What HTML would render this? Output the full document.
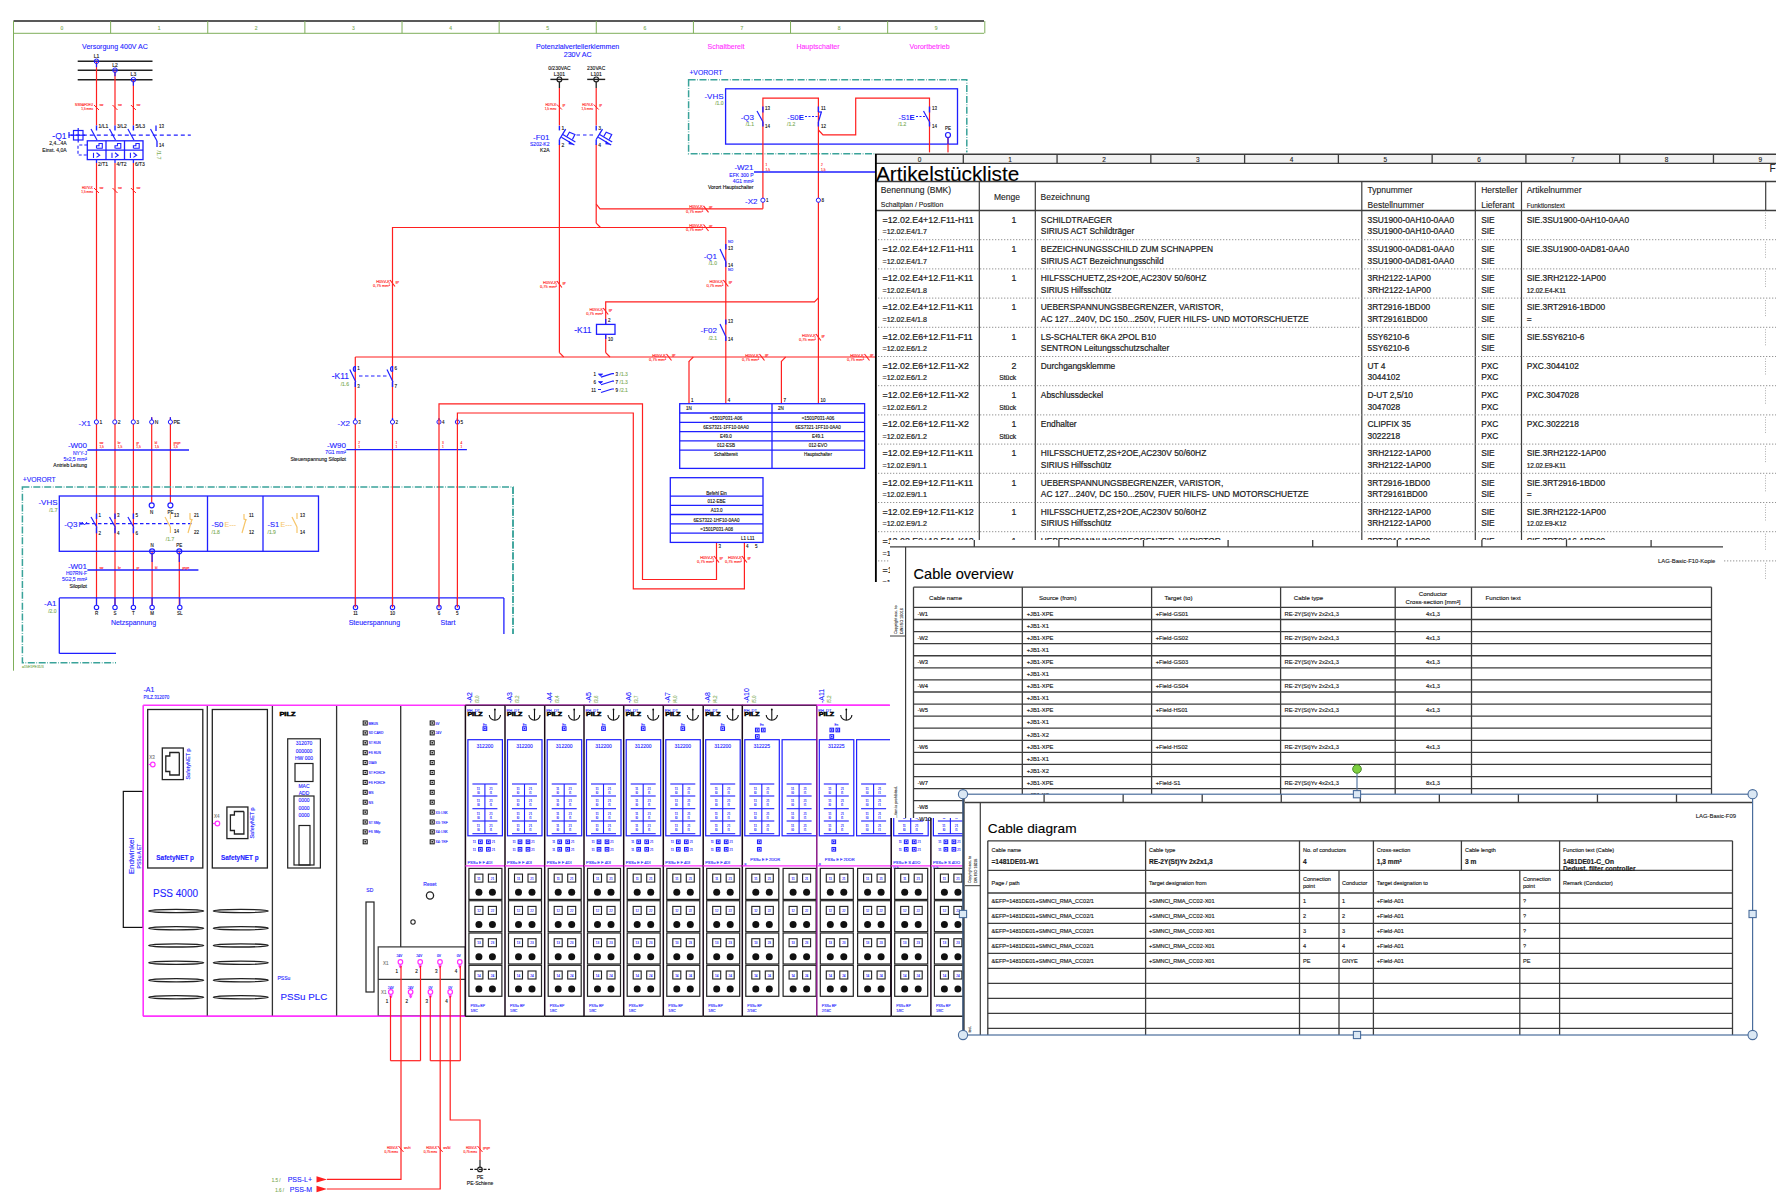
<!DOCTYPE html>
<html><head><meta charset="utf-8"><style>
html,body{margin:0;padding:0;background:#fff;width:1776px;height:1199px;overflow:hidden}
svg{display:block;font-family:"Liberation Sans",sans-serif}
</style></head><body>
<svg width="1776" height="1199" viewBox="0 0 1776 1199">
<rect width="1776" height="1199" fill="#fff"/>
<line x1="13.5" y1="21" x2="984" y2="21" stroke="#222" stroke-width="1.6"/>
<line x1="13.5" y1="33.3" x2="984" y2="33.3" stroke="#7fae5a" stroke-width="1"/>
<line x1="13.5" y1="21" x2="13.5" y2="670.7" stroke="#7fae5a" stroke-width="1"/>
<line x1="13.5" y1="21" x2="13.5" y2="33.3" stroke="#7fae5a" stroke-width="1"/>
<line x1="110.63" y1="21" x2="110.63" y2="33.3" stroke="#7fae5a" stroke-width="1"/>
<line x1="207.76" y1="21" x2="207.76" y2="33.3" stroke="#7fae5a" stroke-width="1"/>
<line x1="304.89" y1="21" x2="304.89" y2="33.3" stroke="#7fae5a" stroke-width="1"/>
<line x1="402.02" y1="21" x2="402.02" y2="33.3" stroke="#7fae5a" stroke-width="1"/>
<line x1="499.15" y1="21" x2="499.15" y2="33.3" stroke="#7fae5a" stroke-width="1"/>
<line x1="596.28" y1="21" x2="596.28" y2="33.3" stroke="#7fae5a" stroke-width="1"/>
<line x1="693.41" y1="21" x2="693.41" y2="33.3" stroke="#7fae5a" stroke-width="1"/>
<line x1="790.54" y1="21" x2="790.54" y2="33.3" stroke="#7fae5a" stroke-width="1"/>
<line x1="887.67" y1="21" x2="887.67" y2="33.3" stroke="#7fae5a" stroke-width="1"/>
<line x1="984.8" y1="21" x2="984.8" y2="33.3" stroke="#7fae5a" stroke-width="1"/>
<text x="62" y="30" font-size="5" fill="#7fae5a" text-anchor="middle" stroke="#7fae5a" stroke-width="0.12">0</text>
<text x="159.13" y="30" font-size="5" fill="#7fae5a" text-anchor="middle" stroke="#7fae5a" stroke-width="0.12">1</text>
<text x="256.26" y="30" font-size="5" fill="#7fae5a" text-anchor="middle" stroke="#7fae5a" stroke-width="0.12">2</text>
<text x="353.39" y="30" font-size="5" fill="#7fae5a" text-anchor="middle" stroke="#7fae5a" stroke-width="0.12">3</text>
<text x="450.52" y="30" font-size="5" fill="#7fae5a" text-anchor="middle" stroke="#7fae5a" stroke-width="0.12">4</text>
<text x="547.65" y="30" font-size="5" fill="#7fae5a" text-anchor="middle" stroke="#7fae5a" stroke-width="0.12">5</text>
<text x="644.78" y="30" font-size="5" fill="#7fae5a" text-anchor="middle" stroke="#7fae5a" stroke-width="0.12">6</text>
<text x="741.91" y="30" font-size="5" fill="#7fae5a" text-anchor="middle" stroke="#7fae5a" stroke-width="0.12">7</text>
<text x="839.04" y="30" font-size="5" fill="#7fae5a" text-anchor="middle" stroke="#7fae5a" stroke-width="0.12">8</text>
<text x="936.17" y="30" font-size="5" fill="#7fae5a" text-anchor="middle" stroke="#7fae5a" stroke-width="0.12">9</text>
<text x="22" y="667.5" font-size="3.5" fill="#7fae5a" stroke="#7fae5a" stroke-width="0.12">=15E1PE31/3</text>
<text x="115" y="49" font-size="7.05" fill="#1f1fff" text-anchor="middle" stroke="#1f1fff" stroke-width="0.12">Versorgung 400V AC</text>
<text x="577.7" y="49" font-size="7.1" fill="#1f1fff" text-anchor="middle" stroke="#1f1fff" stroke-width="0.12">Potenzialverteilerklemmen</text>
<text x="577.7" y="57" font-size="7.1" fill="#1f1fff" text-anchor="middle" stroke="#1f1fff" stroke-width="0.12">230V AC</text>
<text x="726" y="49" font-size="7" fill="#ff33ff" text-anchor="middle" stroke="#ff33ff" stroke-width="0.12">Schaltbereit</text>
<text x="818" y="49" font-size="7" fill="#ff33ff" text-anchor="middle" stroke="#ff33ff" stroke-width="0.12">Hauptschalter</text>
<text x="929.5" y="49" font-size="7" fill="#ff33ff" text-anchor="middle" stroke="#ff33ff" stroke-width="0.12">Vorortbetrieb</text>
<line x1="77.7" y1="61.3" x2="152.5" y2="61.3" stroke="#222" stroke-width="1.6"/>
<line x1="77.7" y1="70.2" x2="152.5" y2="70.2" stroke="#222" stroke-width="1.6"/>
<line x1="77.7" y1="79.7" x2="152.5" y2="79.7" stroke="#222" stroke-width="1.6"/>
<text x="96.5" y="57.8" font-size="5" fill="#111" text-anchor="middle" stroke="#111" stroke-width="0.12">L1</text>
<text x="115" y="66.7" font-size="5" fill="#111" text-anchor="middle" stroke="#111" stroke-width="0.12">L2</text>
<text x="133.4" y="76.2" font-size="5" fill="#111" text-anchor="middle" stroke="#111" stroke-width="0.12">L3</text>
<line x1="96.5" y1="61.3" x2="96.5" y2="125.5" stroke="#ff1f1f" stroke-width="1.2"/>
<line x1="96.5" y1="163" x2="96.5" y2="607.5" stroke="#ff1f1f" stroke-width="1.2"/>
<line x1="96.5" y1="63.3" x2="96.5" y2="67.3" stroke="#1f1fff" stroke-width="1.2"/>
<circle cx="96.5" cy="61.3" r="2.3" stroke="#1f1fff" stroke-width="1" fill="none"/>
<line x1="94.2" y1="61.3" x2="98.8" y2="61.3" stroke="#1f1fff" stroke-width="1"/>
<line x1="115" y1="70.2" x2="115" y2="125.5" stroke="#ff1f1f" stroke-width="1.2"/>
<line x1="115" y1="163" x2="115" y2="607.5" stroke="#ff1f1f" stroke-width="1.2"/>
<line x1="115" y1="72.2" x2="115" y2="76.2" stroke="#1f1fff" stroke-width="1.2"/>
<circle cx="115" cy="70.2" r="2.3" stroke="#1f1fff" stroke-width="1" fill="none"/>
<line x1="112.7" y1="70.2" x2="117.3" y2="70.2" stroke="#1f1fff" stroke-width="1"/>
<line x1="133.4" y1="79.7" x2="133.4" y2="125.5" stroke="#ff1f1f" stroke-width="1.2"/>
<line x1="133.4" y1="163" x2="133.4" y2="607.5" stroke="#ff1f1f" stroke-width="1.2"/>
<line x1="133.4" y1="81.7" x2="133.4" y2="85.7" stroke="#1f1fff" stroke-width="1.2"/>
<circle cx="133.4" cy="79.7" r="2.3" stroke="#1f1fff" stroke-width="1" fill="none"/>
<line x1="131.1" y1="79.7" x2="135.7" y2="79.7" stroke="#1f1fff" stroke-width="1"/>
<line x1="94" y1="105" x2="99" y2="110" stroke="#ff1f1f" stroke-width="1"/>
<text x="99.5" y="106" font-size="3.2" fill="#ff1f1f" stroke="#ff1f1f" stroke-width="0.12">sw</text>
<line x1="112.5" y1="105" x2="117.5" y2="110" stroke="#ff1f1f" stroke-width="1"/>
<text x="118" y="106" font-size="3.2" fill="#ff1f1f" stroke="#ff1f1f" stroke-width="0.12">sw</text>
<line x1="130.9" y1="105" x2="135.9" y2="110" stroke="#ff1f1f" stroke-width="1"/>
<text x="136.4" y="106" font-size="3.2" fill="#ff1f1f" stroke="#ff1f1f" stroke-width="0.12">sw</text>
<text x="93" y="105.5" font-size="3.2" fill="#ff1f1f" text-anchor="end" stroke="#ff1f1f" stroke-width="0.12">NSGAFOEU</text>
<text x="93" y="109.8" font-size="3.2" fill="#ff1f1f" text-anchor="end" stroke="#ff1f1f" stroke-width="0.12">1,5 mm²</text>
<line x1="96.5" y1="125.5" x2="96.5" y2="130.5" stroke="#1f1fff" stroke-width="1.4"/>
<line x1="91" y1="129" x2="97" y2="140" stroke="#1f1fff" stroke-width="1.2"/>
<text x="98.5" y="128" font-size="5" fill="#111" stroke="#111" stroke-width="0.12">1/L1</text>
<line x1="115" y1="125.5" x2="115" y2="130.5" stroke="#1f1fff" stroke-width="1.4"/>
<line x1="109.5" y1="129" x2="115.5" y2="140" stroke="#1f1fff" stroke-width="1.2"/>
<text x="117" y="128" font-size="5" fill="#111" stroke="#111" stroke-width="0.12">3/L2</text>
<line x1="133.4" y1="125.5" x2="133.4" y2="130.5" stroke="#1f1fff" stroke-width="1.4"/>
<line x1="127.9" y1="129" x2="133.9" y2="140" stroke="#1f1fff" stroke-width="1.2"/>
<text x="135.4" y="128" font-size="5" fill="#111" stroke="#111" stroke-width="0.12">5/L3</text>
<line x1="68.8" y1="135.2" x2="190.8" y2="135.2" stroke="#1f1fff" stroke-width="1.2" stroke-dasharray="4,3"/>
<rect x="73.5" y="130.5" width="9.5" height="9.5" stroke="#1f1fff" stroke-width="1.2" fill="none"/>
<line x1="78.2" y1="128" x2="78.2" y2="142.5" stroke="#1f1fff" stroke-width="1.2"/>
<line x1="71" y1="135.2" x2="85" y2="135.2" stroke="#1f1fff" stroke-width="1.2"/>
<line x1="69" y1="132" x2="69" y2="138" stroke="#1f1fff" stroke-width="1.2"/>
<text x="66.5" y="138.5" font-size="8.5" fill="#1f1fff" text-anchor="end" stroke="#1f1fff" stroke-width="0.12">-Q1</text>
<text x="66.5" y="145" font-size="5" fill="#111" text-anchor="end" stroke="#111" stroke-width="0.12">2,4...4A</text>
<text x="66.5" y="151.5" font-size="5" fill="#111" text-anchor="end" stroke="#111" stroke-width="0.12">Einst. 4,0A</text>
<rect x="87.3" y="140.8" width="55.7" height="18.8" stroke="#1f1fff" stroke-width="1.3" fill="none"/>
<line x1="87.3" y1="150.2" x2="143" y2="150.2" stroke="#1f1fff" stroke-width="1.3"/>
<line x1="106" y1="140.8" x2="106" y2="159.6" stroke="#1f1fff" stroke-width="1.3"/>
<line x1="124.5" y1="140.8" x2="124.5" y2="159.6" stroke="#1f1fff" stroke-width="1.3"/>
<polyline points="96.5,148.5 96.5,145.8 99,145.8 99,143.5 102.3,143.5 102.3,148.3 97,148.3" stroke="#1f1fff" stroke-width="1.1" fill="none"/>
<line x1="93.5" y1="152.8" x2="93.5" y2="158" stroke="#1f1fff" stroke-width="1.1"/>
<polyline points="96.5,152.8 99.7,155.2 96.5,157.4" stroke="#1f1fff" stroke-width="1.1" fill="none"/>
<polyline points="115,148.5 115,145.8 117.5,145.8 117.5,143.5 120.8,143.5 120.8,148.3 115.5,148.3" stroke="#1f1fff" stroke-width="1.1" fill="none"/>
<line x1="112" y1="152.8" x2="112" y2="158" stroke="#1f1fff" stroke-width="1.1"/>
<polyline points="115,152.8 118.2,155.2 115,157.4" stroke="#1f1fff" stroke-width="1.1" fill="none"/>
<polyline points="133.4,148.5 133.4,145.8 135.9,145.8 135.9,143.5 139.2,143.5 139.2,148.3 133.9,148.3" stroke="#1f1fff" stroke-width="1.1" fill="none"/>
<line x1="130.4" y1="152.8" x2="130.4" y2="158" stroke="#1f1fff" stroke-width="1.1"/>
<polyline points="133.4,152.8 136.6,155.2 133.4,157.4" stroke="#1f1fff" stroke-width="1.1" fill="none"/>
<polyline points="87.3,145 78,145 78,155 87.3,155" stroke="#1f1fff" stroke-width="1.1" fill="none" stroke-dasharray="3,2"/>
<line x1="156" y1="125.5" x2="156" y2="131" stroke="#1f1fff" stroke-width="1.3"/>
<line x1="150.5" y1="129" x2="157" y2="141" stroke="#1f1fff" stroke-width="1.2"/>
<line x1="157" y1="141" x2="157" y2="147" stroke="#1f1fff" stroke-width="1.3"/>
<text x="159" y="128" font-size="4.5" fill="#111" stroke="#111" stroke-width="0.12">13</text>
<text x="159" y="147" font-size="4.5" fill="#111" stroke="#111" stroke-width="0.12">14</text>
<text x="156.5" y="150.5" font-size="5.5" fill="#7fae5a" transform="rotate(90 156.5 150.5)" stroke="#7fae5a" stroke-width="0.12">/1.7</text>
<line x1="96.5" y1="159.6" x2="96.5" y2="163" stroke="#1f1fff" stroke-width="1.3"/>
<text x="98" y="166" font-size="5" fill="#111" stroke="#111" stroke-width="0.12">2/T1</text>
<line x1="115" y1="159.6" x2="115" y2="163" stroke="#1f1fff" stroke-width="1.3"/>
<text x="116.5" y="166" font-size="5" fill="#111" stroke="#111" stroke-width="0.12">4/T2</text>
<line x1="133.4" y1="159.6" x2="133.4" y2="163" stroke="#1f1fff" stroke-width="1.3"/>
<text x="134.9" y="166" font-size="5" fill="#111" stroke="#111" stroke-width="0.12">6/T3</text>
<line x1="94" y1="188" x2="99" y2="193" stroke="#ff1f1f" stroke-width="1"/>
<text x="99.5" y="189" font-size="3.2" fill="#ff1f1f" stroke="#ff1f1f" stroke-width="0.12">sw</text>
<line x1="112.5" y1="188" x2="117.5" y2="193" stroke="#ff1f1f" stroke-width="1"/>
<text x="118" y="189" font-size="3.2" fill="#ff1f1f" stroke="#ff1f1f" stroke-width="0.12">sw</text>
<line x1="130.9" y1="188" x2="135.9" y2="193" stroke="#ff1f1f" stroke-width="1"/>
<text x="136.4" y="189" font-size="3.2" fill="#ff1f1f" stroke="#ff1f1f" stroke-width="0.12">sw</text>
<text x="93" y="188.5" font-size="3.2" fill="#ff1f1f" text-anchor="end" stroke="#ff1f1f" stroke-width="0.12">H07V-K</text>
<text x="93" y="193" font-size="3.2" fill="#ff1f1f" text-anchor="end" stroke="#ff1f1f" stroke-width="0.12">1,5 mm²</text>
<text x="91" y="425.5" font-size="8" fill="#1f1fff" text-anchor="end" stroke="#1f1fff" stroke-width="0.12">-X1</text>
<line x1="151.7" y1="417.3" x2="151.7" y2="505.3" stroke="#ff1f1f" stroke-width="1.2"/>
<line x1="170.4" y1="417.3" x2="170.4" y2="505.3" stroke="#ff1f1f" stroke-width="1.2"/>
<line x1="151.7" y1="417.3" x2="151.7" y2="420" stroke="#1f1fff" stroke-width="1.2"/>
<line x1="170.4" y1="417.3" x2="170.4" y2="420" stroke="#1f1fff" stroke-width="1.2"/>
<circle cx="96.4" cy="422" r="2.1" stroke="#1f1fff" stroke-width="1" fill="#fff"/>
<text x="99.4" y="423.8" font-size="5" fill="#111" stroke="#111" stroke-width="0.12">1</text>
<circle cx="114.8" cy="422" r="2.1" stroke="#1f1fff" stroke-width="1" fill="#fff"/>
<text x="117.8" y="423.8" font-size="5" fill="#111" stroke="#111" stroke-width="0.12">2</text>
<circle cx="133.3" cy="422" r="2.1" stroke="#1f1fff" stroke-width="1" fill="#fff"/>
<text x="136.3" y="423.8" font-size="5" fill="#111" stroke="#111" stroke-width="0.12">3</text>
<circle cx="151.7" cy="422" r="2.1" stroke="#1f1fff" stroke-width="1" fill="#fff"/>
<text x="154.7" y="423.8" font-size="5" fill="#111" stroke="#111" stroke-width="0.12">N</text>
<circle cx="170.4" cy="422" r="2.1" stroke="#1f1fff" stroke-width="1" fill="#fff"/>
<text x="173.4" y="423.8" font-size="5" fill="#111" stroke="#111" stroke-width="0.12">PE</text>
<line x1="87.3" y1="450" x2="189" y2="450" stroke="#1f1fff" stroke-width="1.3"/>
<text x="87" y="448" font-size="8" fill="#1f1fff" text-anchor="end" stroke="#1f1fff" stroke-width="0.12">-W00</text>
<text x="87" y="455" font-size="5" fill="#1f1fff" text-anchor="end" stroke="#1f1fff" stroke-width="0.12">NYY-J</text>
<text x="87" y="461" font-size="5" fill="#1f1fff" text-anchor="end" stroke="#1f1fff" stroke-width="0.12">5x2,5 mm²</text>
<text x="87" y="467" font-size="5" fill="#111" text-anchor="end" stroke="#111" stroke-width="0.12">Antrieb Leitung</text>
<text x="99.4" y="444" font-size="3.2" fill="#ff1f1f" stroke="#ff1f1f" stroke-width="0.12">sw</text>
<text x="99.4" y="448" font-size="3.2" fill="#ff1f1f" stroke="#ff1f1f" stroke-width="0.12">1,5</text>
<text x="117.8" y="444" font-size="3.2" fill="#ff1f1f" stroke="#ff1f1f" stroke-width="0.12">br</text>
<text x="117.8" y="448" font-size="3.2" fill="#ff1f1f" stroke="#ff1f1f" stroke-width="0.12">1,5</text>
<text x="136.3" y="444" font-size="3.2" fill="#ff1f1f" stroke="#ff1f1f" stroke-width="0.12">gr</text>
<text x="136.3" y="448" font-size="3.2" fill="#ff1f1f" stroke="#ff1f1f" stroke-width="0.12">1,5</text>
<text x="154.7" y="444" font-size="3.2" fill="#ff1f1f" stroke="#ff1f1f" stroke-width="0.12">bl</text>
<text x="154.7" y="448" font-size="3.2" fill="#ff1f1f" stroke="#ff1f1f" stroke-width="0.12">1,5</text>
<text x="173.4" y="444" font-size="3.2" fill="#ff1f1f" stroke="#ff1f1f" stroke-width="0.12">gnge</text>
<text x="173.4" y="448" font-size="3.2" fill="#ff1f1f" stroke="#ff1f1f" stroke-width="0.12">1,5</text>
<text x="22.7" y="482" font-size="6.8" fill="#1f1fff" stroke="#1f1fff" stroke-width="0.12">+VORORT</text>
<rect x="22.4" y="487" width="490.6" height="175.7" stroke="#3aa39a" stroke-width="1.5" fill="none" stroke-dasharray="7,1.6,0.7,1.6"/>
<rect x="59.3" y="496" width="259.2" height="55.3" stroke="#1f1fff" stroke-width="1.3" fill="none"/>
<line x1="207.5" y1="496" x2="207.5" y2="551.3" stroke="#1f1fff" stroke-width="1.3"/>
<line x1="263" y1="496" x2="263" y2="551.3" stroke="#1f1fff" stroke-width="1.3"/>
<text x="57.5" y="505" font-size="8" fill="#1f1fff" text-anchor="end" stroke="#1f1fff" stroke-width="0.12">-VHS</text>
<text x="57.5" y="512" font-size="5" fill="#7fae5a" text-anchor="end" stroke="#7fae5a" stroke-width="0.12">/1.7</text>
<circle cx="151.7" cy="505.3" r="2.5" stroke="#1f1fff" stroke-width="1.2" fill="#fff"/>
<circle cx="170.4" cy="505.3" r="2.5" stroke="#1f1fff" stroke-width="1.2" fill="#fff"/>
<text x="151.7" y="514" font-size="4.5" fill="#111" text-anchor="middle" stroke="#111" stroke-width="0.12">N</text>
<text x="170.4" y="514" font-size="4.5" fill="#111" text-anchor="middle" stroke="#111" stroke-width="0.12">PE</text>
<line x1="96.5" y1="513.5" x2="96.5" y2="519" stroke="#1f1fff" stroke-width="1.4"/>
<line x1="91" y1="517" x2="97" y2="527.5" stroke="#1f1fff" stroke-width="1.2"/>
<line x1="96.5" y1="527.5" x2="96.5" y2="533.3" stroke="#1f1fff" stroke-width="1.4"/>
<text x="98.5" y="516.5" font-size="4.5" fill="#111" stroke="#111" stroke-width="0.12">1</text>
<text x="98.5" y="535" font-size="4.5" fill="#111" stroke="#111" stroke-width="0.12">2</text>
<line x1="115" y1="513.5" x2="115" y2="519" stroke="#1f1fff" stroke-width="1.4"/>
<line x1="109.5" y1="517" x2="115.5" y2="527.5" stroke="#1f1fff" stroke-width="1.2"/>
<line x1="115" y1="527.5" x2="115" y2="533.3" stroke="#1f1fff" stroke-width="1.4"/>
<text x="117" y="516.5" font-size="4.5" fill="#111" stroke="#111" stroke-width="0.12">3</text>
<text x="117" y="535" font-size="4.5" fill="#111" stroke="#111" stroke-width="0.12">4</text>
<line x1="133.4" y1="513.5" x2="133.4" y2="519" stroke="#1f1fff" stroke-width="1.4"/>
<line x1="127.9" y1="517" x2="133.9" y2="527.5" stroke="#1f1fff" stroke-width="1.2"/>
<line x1="133.4" y1="527.5" x2="133.4" y2="533.3" stroke="#1f1fff" stroke-width="1.4"/>
<text x="135.4" y="516.5" font-size="4.5" fill="#111" stroke="#111" stroke-width="0.12">5</text>
<text x="135.4" y="535" font-size="4.5" fill="#111" stroke="#111" stroke-width="0.12">6</text>
<line x1="80" y1="523.7" x2="192" y2="523.7" stroke="#1f1fff" stroke-width="1.2" stroke-dasharray="3.5,2.5"/>
<text x="77.5" y="527" font-size="8" fill="#1f1fff" text-anchor="end" stroke="#1f1fff" stroke-width="0.12">-Q3</text>
<text x="78.5" y="527" font-size="7" fill="#1f1fff" stroke="#1f1fff" stroke-width="0.12">F</text>
<path d="M82 522 l2.5 3 l2.5 -3" stroke="#1f1fff" stroke-width="1" fill="none"/>
<line x1="170.4" y1="513" x2="170.4" y2="519" stroke="#f7c66a" stroke-width="1.2"/>
<line x1="165" y1="517" x2="170.4" y2="527" stroke="#f7c66a" stroke-width="1.2"/>
<line x1="170.4" y1="527" x2="170.4" y2="533" stroke="#f7c66a" stroke-width="1.2"/>
<text x="174" y="517" font-size="4.5" fill="#111" stroke="#111" stroke-width="0.12">13</text>
<text x="174" y="533" font-size="4.5" fill="#111" stroke="#111" stroke-width="0.12">14</text>
<text x="170" y="541" font-size="5" fill="#7fae5a" text-anchor="middle" stroke="#7fae5a" stroke-width="0.12">/1.7</text>
<polyline points="190,513 190,519 192.5,520" stroke="#f7c66a" stroke-width="1.2" fill="none"/>
<line x1="192" y1="519" x2="188" y2="533" stroke="#f7c66a" stroke-width="1.2"/>
<text x="194" y="516.5" font-size="4.5" fill="#111" stroke="#111" stroke-width="0.12">21</text>
<text x="194" y="534" font-size="4.5" fill="#111" stroke="#111" stroke-width="0.12">22</text>
<text x="211.5" y="527" font-size="7.5" fill="#1f1fff" stroke="#1f1fff" stroke-width="0.12">-S0</text>
<text x="211.5" y="533.5" font-size="5" fill="#7fae5a" stroke="#7fae5a" stroke-width="0.12">/1.8</text>
<text x="224.5" y="527" font-size="7" fill="#f7c66a" stroke="#f7c66a" stroke-width="0.12">E---</text>
<polyline points="244,514 244,519 246.5,520" stroke="#f7c66a" stroke-width="1.2" fill="none"/>
<line x1="246" y1="519" x2="242" y2="533" stroke="#f7c66a" stroke-width="1.2"/>
<text x="249" y="517" font-size="4.5" fill="#111" stroke="#111" stroke-width="0.12">11</text>
<text x="249" y="534" font-size="4.5" fill="#111" stroke="#111" stroke-width="0.12">12</text>
<text x="267.5" y="527" font-size="7.5" fill="#1f1fff" stroke="#1f1fff" stroke-width="0.12">-S1</text>
<text x="267.5" y="533.5" font-size="5" fill="#7fae5a" stroke="#7fae5a" stroke-width="0.12">/1.9</text>
<text x="280.5" y="527" font-size="7" fill="#f7c66a" stroke="#f7c66a" stroke-width="0.12">E---</text>
<line x1="297" y1="513" x2="297" y2="519" stroke="#f7c66a" stroke-width="1.2"/>
<line x1="292" y1="517" x2="297" y2="527" stroke="#f7c66a" stroke-width="1.2"/>
<line x1="297" y1="527" x2="297" y2="533" stroke="#f7c66a" stroke-width="1.2"/>
<text x="300" y="517" font-size="4.5" fill="#111" stroke="#111" stroke-width="0.12">13</text>
<text x="300" y="534" font-size="4.5" fill="#111" stroke="#111" stroke-width="0.12">14</text>
<line x1="152.1" y1="551.3" x2="152.1" y2="607.5" stroke="#ff1f1f" stroke-width="1.2"/>
<line x1="179.3" y1="551.3" x2="179.3" y2="607.5" stroke="#ff1f1f" stroke-width="1.2"/>
<circle cx="152.1" cy="551.3" r="2.5" stroke="#1f1fff" stroke-width="1.2" fill="none"/>
<circle cx="179.3" cy="551.3" r="2.5" stroke="#1f1fff" stroke-width="1.2" fill="none"/>
<line x1="149.6" y1="551.3" x2="154.6" y2="551.3" stroke="#1f1fff" stroke-width="1"/>
<line x1="176.8" y1="551.3" x2="181.8" y2="551.3" stroke="#1f1fff" stroke-width="1"/>
<line x1="152.1" y1="553.8" x2="152.1" y2="562" stroke="#1f1fff" stroke-width="1.2"/>
<line x1="179.3" y1="553.8" x2="179.3" y2="562" stroke="#1f1fff" stroke-width="1.2"/>
<text x="152.1" y="546.5" font-size="4.5" fill="#111" text-anchor="middle" stroke="#111" stroke-width="0.12">N</text>
<text x="179.3" y="546.5" font-size="4.5" fill="#111" text-anchor="middle" stroke="#111" stroke-width="0.12">PE</text>
<line x1="87.4" y1="570" x2="198.4" y2="570" stroke="#1f1fff" stroke-width="1.3"/>
<text x="87" y="568.5" font-size="8" fill="#1f1fff" text-anchor="end" stroke="#1f1fff" stroke-width="0.12">-W01</text>
<text x="87" y="575" font-size="5" fill="#1f1fff" text-anchor="end" stroke="#1f1fff" stroke-width="0.12">H07RN-F</text>
<text x="87" y="581" font-size="5" fill="#1f1fff" text-anchor="end" stroke="#1f1fff" stroke-width="0.12">5G2,5 mm²</text>
<text x="87" y="587.5" font-size="5" fill="#111" text-anchor="end" stroke="#111" stroke-width="0.12">Silopilot</text>
<text x="99.5" y="568.5" font-size="3.2" fill="#ff1f1f" stroke="#ff1f1f" stroke-width="0.12">sw</text>
<text x="118" y="568.5" font-size="3.2" fill="#ff1f1f" stroke="#ff1f1f" stroke-width="0.12">br</text>
<text x="136.4" y="568.5" font-size="3.2" fill="#ff1f1f" stroke="#ff1f1f" stroke-width="0.12">gr</text>
<text x="155.1" y="568.5" font-size="3.2" fill="#ff1f1f" stroke="#ff1f1f" stroke-width="0.12">bl</text>
<text x="182.3" y="568.5" font-size="3.2" fill="#ff1f1f" stroke="#ff1f1f" stroke-width="0.12">gnge</text>
<line x1="59.3" y1="597.9" x2="503.9" y2="597.9" stroke="#1f1fff" stroke-width="1.3"/>
<line x1="59.3" y1="597.9" x2="59.3" y2="653.4" stroke="#1f1fff" stroke-width="1.3"/>
<line x1="59.3" y1="653.4" x2="116" y2="653.4" stroke="#1f1fff" stroke-width="1.3"/>
<line x1="503.9" y1="597.9" x2="503.9" y2="634" stroke="#1f1fff" stroke-width="1.3"/>
<line x1="513" y1="487" x2="513" y2="634" stroke="#3aa39a" stroke-width="1.5" stroke-dasharray="7,1.6,0.7,1.6"/>
<text x="56.5" y="606" font-size="8" fill="#1f1fff" text-anchor="end" stroke="#1f1fff" stroke-width="0.12">-A1</text>
<text x="56.5" y="612.5" font-size="5" fill="#7fae5a" text-anchor="end" stroke="#7fae5a" stroke-width="0.12">/2.0</text>
<line x1="96.5" y1="597.9" x2="96.5" y2="605" stroke="#1f1fff" stroke-width="1.2"/>
<circle cx="96.5" cy="607.4" r="2.2" stroke="#1f1fff" stroke-width="1.1" fill="#fff"/>
<text x="96.5" y="615" font-size="4.5" fill="#111" text-anchor="middle" stroke="#111" stroke-width="0.12">R</text>
<line x1="115" y1="597.9" x2="115" y2="605" stroke="#1f1fff" stroke-width="1.2"/>
<circle cx="115" cy="607.4" r="2.2" stroke="#1f1fff" stroke-width="1.1" fill="#fff"/>
<text x="115" y="615" font-size="4.5" fill="#111" text-anchor="middle" stroke="#111" stroke-width="0.12">S</text>
<line x1="133.4" y1="597.9" x2="133.4" y2="605" stroke="#1f1fff" stroke-width="1.2"/>
<circle cx="133.4" cy="607.4" r="2.2" stroke="#1f1fff" stroke-width="1.1" fill="#fff"/>
<text x="133.4" y="615" font-size="4.5" fill="#111" text-anchor="middle" stroke="#111" stroke-width="0.12">T</text>
<line x1="152.1" y1="597.9" x2="152.1" y2="605" stroke="#1f1fff" stroke-width="1.2"/>
<circle cx="152.1" cy="607.4" r="2.2" stroke="#1f1fff" stroke-width="1.1" fill="#fff"/>
<text x="152.1" y="615" font-size="4.5" fill="#111" text-anchor="middle" stroke="#111" stroke-width="0.12">M</text>
<line x1="179.8" y1="597.9" x2="179.8" y2="605" stroke="#1f1fff" stroke-width="1.2"/>
<circle cx="179.8" cy="607.4" r="2.2" stroke="#1f1fff" stroke-width="1.1" fill="#fff"/>
<text x="179.8" y="615" font-size="4.5" fill="#111" text-anchor="middle" stroke="#111" stroke-width="0.12">SL</text>
<line x1="355.5" y1="597.9" x2="355.5" y2="605" stroke="#1f1fff" stroke-width="1.2"/>
<circle cx="355.5" cy="607.4" r="2.2" stroke="#1f1fff" stroke-width="1.1" fill="#fff"/>
<text x="355.5" y="615" font-size="4.5" fill="#111" text-anchor="middle" stroke="#111" stroke-width="0.12">11</text>
<line x1="392.5" y1="597.9" x2="392.5" y2="605" stroke="#1f1fff" stroke-width="1.2"/>
<circle cx="392.5" cy="607.4" r="2.2" stroke="#1f1fff" stroke-width="1.1" fill="#fff"/>
<text x="392.5" y="615" font-size="4.5" fill="#111" text-anchor="middle" stroke="#111" stroke-width="0.12">10</text>
<line x1="439" y1="597.9" x2="439" y2="605" stroke="#1f1fff" stroke-width="1.2"/>
<circle cx="439" cy="607.4" r="2.2" stroke="#1f1fff" stroke-width="1.1" fill="#fff"/>
<text x="439" y="615" font-size="4.5" fill="#111" text-anchor="middle" stroke="#111" stroke-width="0.12">6</text>
<line x1="457.3" y1="597.9" x2="457.3" y2="605" stroke="#1f1fff" stroke-width="1.2"/>
<circle cx="457.3" cy="607.4" r="2.2" stroke="#1f1fff" stroke-width="1.1" fill="#fff"/>
<text x="457.3" y="615" font-size="4.5" fill="#111" text-anchor="middle" stroke="#111" stroke-width="0.12">5</text>
<text x="133.5" y="624.5" font-size="7" fill="#1f1fff" text-anchor="middle" stroke="#1f1fff" stroke-width="0.12">Netzspannung</text>
<text x="374.4" y="624.5" font-size="7" fill="#1f1fff" text-anchor="middle" stroke="#1f1fff" stroke-width="0.12">Steuerspannung</text>
<text x="448" y="624.5" font-size="7" fill="#1f1fff" text-anchor="middle" stroke="#1f1fff" stroke-width="0.12">Start</text>
<text x="559.4" y="69.5" font-size="5" fill="#111" text-anchor="middle" stroke="#111" stroke-width="0.12">0/230VAC</text>
<text x="559.4" y="75.5" font-size="5" fill="#111" text-anchor="middle" stroke="#111" stroke-width="0.12">L301</text>
<line x1="550.4" y1="79.4" x2="568.4" y2="79.4" stroke="#222" stroke-width="1.4"/>
<circle cx="559.4" cy="79.4" r="2.4" stroke="#222" stroke-width="1.2" fill="none"/>
<line x1="559.4" y1="81.8" x2="559.4" y2="88" stroke="#222" stroke-width="1.3"/>
<text x="596.2" y="69.5" font-size="5" fill="#111" text-anchor="middle" stroke="#111" stroke-width="0.12">230VAC</text>
<text x="596.2" y="75.5" font-size="5" fill="#111" text-anchor="middle" stroke="#111" stroke-width="0.12">L101</text>
<line x1="587.2" y1="79.4" x2="605.2" y2="79.4" stroke="#222" stroke-width="1.4"/>
<circle cx="596.2" cy="79.4" r="2.4" stroke="#222" stroke-width="1.2" fill="none"/>
<line x1="596.2" y1="81.8" x2="596.2" y2="88" stroke="#222" stroke-width="1.3"/>
<line x1="559.4" y1="88" x2="559.4" y2="125.5" stroke="#ff1f1f" stroke-width="1.2"/>
<line x1="559.4" y1="144.5" x2="559.4" y2="352.7" stroke="#ff1f1f" stroke-width="1.2"/>
<line x1="596.2" y1="88" x2="596.2" y2="125.5" stroke="#ff1f1f" stroke-width="1.2"/>
<line x1="596.2" y1="144.5" x2="596.2" y2="223.2" stroke="#ff1f1f" stroke-width="1.2"/>
<line x1="556.9" y1="104.5" x2="561.9" y2="109.5" stroke="#ff1f1f" stroke-width="1"/>
<text x="562.4" y="106" font-size="3.2" fill="#ff1f1f" stroke="#ff1f1f" stroke-width="0.12">gr</text>
<text x="556.4" y="106" font-size="3.2" fill="#ff1f1f" text-anchor="end" stroke="#ff1f1f" stroke-width="0.12">H07V-K</text>
<text x="556.4" y="110" font-size="3.2" fill="#ff1f1f" text-anchor="end" stroke="#ff1f1f" stroke-width="0.12">1,5 mm²</text>
<line x1="593.7" y1="104.5" x2="598.7" y2="109.5" stroke="#ff1f1f" stroke-width="1"/>
<text x="599.2" y="106" font-size="3.2" fill="#ff1f1f" stroke="#ff1f1f" stroke-width="0.12">gr</text>
<text x="593.2" y="106" font-size="3.2" fill="#ff1f1f" text-anchor="end" stroke="#ff1f1f" stroke-width="0.12">H07V-K</text>
<text x="593.2" y="110" font-size="3.2" fill="#ff1f1f" text-anchor="end" stroke="#ff1f1f" stroke-width="0.12">1,5 mm²</text>
<line x1="559.4" y1="125.8" x2="559.4" y2="130.4" stroke="#1f1fff" stroke-width="1.4"/>
<line x1="559.4" y1="139.5" x2="565.7" y2="129.2" stroke="#1f1fff" stroke-width="1.3"/>
<line x1="559.4" y1="139.5" x2="559.4" y2="145" stroke="#1f1fff" stroke-width="1.4"/>
<line x1="562.4" y1="134.3" x2="575.4" y2="142" stroke="#1f1fff" stroke-width="1.2"/>
<line x1="561.4" y1="137.3" x2="574.4" y2="145" stroke="#1f1fff" stroke-width="1.2"/>
<polyline points="566.9,136.5 569.4,132.2 574.9,134.5 572.4,139.5" stroke="#1f1fff" stroke-width="1.2" fill="none"/>
<polygon points="568.9,140.8 573.4,144.8 568.6,144.3" fill="#1f1fff"/>
<text x="561.4" y="129.5" font-size="5" fill="#111" stroke="#111" stroke-width="0.12">1</text>
<text x="561.4" y="146.5" font-size="5" fill="#111" stroke="#111" stroke-width="0.12">2</text>
<line x1="596.2" y1="125.8" x2="596.2" y2="130.4" stroke="#1f1fff" stroke-width="1.4"/>
<line x1="596.2" y1="139.5" x2="602.5" y2="129.2" stroke="#1f1fff" stroke-width="1.3"/>
<line x1="596.2" y1="139.5" x2="596.2" y2="145" stroke="#1f1fff" stroke-width="1.4"/>
<line x1="599.2" y1="134.3" x2="612.2" y2="142" stroke="#1f1fff" stroke-width="1.2"/>
<line x1="598.2" y1="137.3" x2="611.2" y2="145" stroke="#1f1fff" stroke-width="1.2"/>
<polyline points="603.7,136.5 606.2,132.2 611.7,134.5 609.2,139.5" stroke="#1f1fff" stroke-width="1.2" fill="none"/>
<polygon points="605.7,140.8 610.2,144.8 605.4,144.3" fill="#1f1fff"/>
<text x="598.2" y="129.5" font-size="5" fill="#111" stroke="#111" stroke-width="0.12">3</text>
<text x="598.2" y="146.5" font-size="5" fill="#111" stroke="#111" stroke-width="0.12">4</text>
<line x1="576.5" y1="135" x2="594" y2="135" stroke="#1f1fff" stroke-width="1.2" stroke-dasharray="3.5,3"/>
<text x="549.5" y="140" font-size="8" fill="#1f1fff" text-anchor="end" stroke="#1f1fff" stroke-width="0.12">-F01</text>
<text x="549.5" y="145.5" font-size="5" fill="#1f1fff" text-anchor="end" stroke="#1f1fff" stroke-width="0.12">S202-K2</text>
<text x="549.5" y="151.5" font-size="5" fill="#111" text-anchor="end" stroke="#111" stroke-width="0.12">K2A</text>
<text x="689.4" y="74.5" font-size="6.8" fill="#1f1fff" stroke="#1f1fff" stroke-width="0.12">+VORORT</text>
<rect x="688.6" y="79.8" width="278.2" height="73.9" stroke="#3aa39a" stroke-width="1.5" fill="none" stroke-dasharray="7,1.6,0.7,1.6"/>
<rect x="725.6" y="88.8" width="231.9" height="55.3" stroke="#1f1fff" stroke-width="1.3" fill="none"/>
<text x="723.5" y="98.5" font-size="8" fill="#1f1fff" text-anchor="end" stroke="#1f1fff" stroke-width="0.12">-VHS</text>
<text x="723.5" y="104.5" font-size="5" fill="#7fae5a" text-anchor="end" stroke="#7fae5a" stroke-width="0.12">/1.0</text>
<polyline points="762.9,144.1 762.9,98.2 818.4,98.2 818.4,144.1" stroke="#ff1f1f" stroke-width="1.2" fill="none"/>
<polyline points="818.4,130 823,134.8 855.7,134.8 855.7,98.2 929.5,98.2 929.5,154" stroke="#ff1f1f" stroke-width="1.2" fill="none"/>
<line x1="762.9" y1="106.5" x2="762.9" y2="112.5" stroke="#1f1fff" stroke-width="1.4"/>
<line x1="757" y1="111" x2="763" y2="122" stroke="#1f1fff" stroke-width="1.2"/>
<line x1="762.9" y1="122" x2="762.9" y2="126.5" stroke="#1f1fff" stroke-width="1.4"/>
<text x="765" y="110" font-size="4.5" fill="#111" stroke="#111" stroke-width="0.12">13</text>
<text x="765" y="127.5" font-size="4.5" fill="#111" stroke="#111" stroke-width="0.12">14</text>
<text x="754" y="120" font-size="8" fill="#1f1fff" text-anchor="end" stroke="#1f1fff" stroke-width="0.12">-Q3</text>
<text x="754" y="126" font-size="5" fill="#7fae5a" text-anchor="end" stroke="#7fae5a" stroke-width="0.12">/1.1</text>
<line x1="818.4" y1="106.5" x2="818.4" y2="112" stroke="#1f1fff" stroke-width="1.4"/>
<line x1="818.4" y1="112" x2="821.5" y2="112" stroke="#1f1fff" stroke-width="1.2"/>
<line x1="821.5" y1="111.5" x2="818.4" y2="122" stroke="#1f1fff" stroke-width="1.2"/>
<line x1="818.4" y1="122" x2="818.4" y2="126.5" stroke="#1f1fff" stroke-width="1.4"/>
<text x="821" y="110" font-size="4.5" fill="#111" stroke="#111" stroke-width="0.12">11</text>
<text x="821" y="127.5" font-size="4.5" fill="#111" stroke="#111" stroke-width="0.12">12</text>
<text x="787.3" y="120" font-size="7.2" fill="#1f1fff" stroke="#1f1fff" stroke-width="0.12">-S0</text>
<text x="787" y="126" font-size="5" fill="#7fae5a" stroke="#7fae5a" stroke-width="0.12">/1.2</text>
<text x="798.8" y="120" font-size="7.5" fill="#1f1fff" font-weight="bold" stroke="#1f1fff" stroke-width="0.12">E</text>
<line x1="805" y1="116.5" x2="819" y2="116.5" stroke="#1f1fff" stroke-width="1" stroke-dasharray="2,1.5"/>
<line x1="929.5" y1="106.5" x2="929.5" y2="112.5" stroke="#1f1fff" stroke-width="1.4"/>
<line x1="923.5" y1="111" x2="929.5" y2="122" stroke="#1f1fff" stroke-width="1.2"/>
<line x1="929.5" y1="122" x2="929.5" y2="126.5" stroke="#1f1fff" stroke-width="1.4"/>
<text x="932" y="110" font-size="4.5" fill="#111" stroke="#111" stroke-width="0.12">13</text>
<text x="932" y="127.5" font-size="4.5" fill="#111" stroke="#111" stroke-width="0.12">14</text>
<text x="898.5" y="120" font-size="7.2" fill="#1f1fff" stroke="#1f1fff" stroke-width="0.12">-S1</text>
<text x="898" y="126" font-size="5" fill="#7fae5a" stroke="#7fae5a" stroke-width="0.12">/1.2</text>
<text x="909.5" y="120" font-size="7.5" fill="#1f1fff" font-weight="bold" stroke="#1f1fff" stroke-width="0.12">E</text>
<line x1="916" y1="116.5" x2="927" y2="116.5" stroke="#1f1fff" stroke-width="1" stroke-dasharray="2,1.5"/>
<circle cx="948" cy="135" r="2.5" stroke="#1f1fff" stroke-width="1.2" fill="#fff"/>
<text x="948" y="130" font-size="4.5" fill="#111" text-anchor="middle" stroke="#111" stroke-width="0.12">PE</text>
<line x1="948" y1="137.5" x2="948" y2="154" stroke="#ff1f1f" stroke-width="1.2"/>
<line x1="948" y1="137.5" x2="948" y2="144.1" stroke="#1f1fff" stroke-width="1.2"/>
<line x1="762.9" y1="144.1" x2="762.9" y2="208.8" stroke="#ff1f1f" stroke-width="1.2"/>
<line x1="818.4" y1="144.1" x2="818.4" y2="403.7" stroke="#ff1f1f" stroke-width="1.2"/>
<line x1="754" y1="172" x2="876" y2="172" stroke="#1f1fff" stroke-width="1.3"/>
<text x="753.5" y="169.5" font-size="8" fill="#1f1fff" text-anchor="end" stroke="#1f1fff" stroke-width="0.12">-W21</text>
<text x="753.5" y="176.5" font-size="5" fill="#1f1fff" text-anchor="end" stroke="#1f1fff" stroke-width="0.12">EFK 300 P</text>
<text x="753.5" y="182.5" font-size="5" fill="#1f1fff" text-anchor="end" stroke="#1f1fff" stroke-width="0.12">4G1 mm²</text>
<text x="753.5" y="189" font-size="5" fill="#111" text-anchor="end" stroke="#111" stroke-width="0.12">Vorort Hauptschalter</text>
<text x="765.5" y="166" font-size="3.2" fill="#ff1f1f" stroke="#ff1f1f" stroke-width="0.12">1</text>
<text x="765.5" y="170.5" font-size="3.2" fill="#ff1f1f" stroke="#ff1f1f" stroke-width="0.12">1,5</text>
<text x="821" y="166" font-size="3.2" fill="#ff1f1f" stroke="#ff1f1f" stroke-width="0.12">2</text>
<text x="821" y="170.5" font-size="3.2" fill="#ff1f1f" stroke="#ff1f1f" stroke-width="0.12">1,5</text>
<circle cx="762.9" cy="200.2" r="2.1" stroke="#1f1fff" stroke-width="1" fill="#fff"/>
<text x="765.9" y="202" font-size="4.5" fill="#111" stroke="#111" stroke-width="0.12">1</text>
<circle cx="818.4" cy="200.2" r="2.1" stroke="#1f1fff" stroke-width="1" fill="#fff"/>
<text x="821.4" y="202" font-size="4.5" fill="#111" stroke="#111" stroke-width="0.12">8</text>
<text x="757.5" y="203.5" font-size="8" fill="#1f1fff" text-anchor="end" stroke="#1f1fff" stroke-width="0.12">-X2</text>
<polyline points="596.2,204 600,208.8 762.9,208.8" stroke="#ff1f1f" stroke-width="1.2" fill="none"/>
<line x1="703.5" y1="205.8" x2="708.5" y2="212.3" stroke="#ff1f1f" stroke-width="1.1"/>
<text x="703" y="208.3" font-size="4" fill="#ff1f1f" text-anchor="end" stroke="#ff1f1f" stroke-width="0.12">H05V-K</text>
<text x="703" y="212.6" font-size="4" fill="#ff1f1f" text-anchor="end" stroke="#ff1f1f" stroke-width="0.12">0,75 mm²</text>
<text x="709" y="207.8" font-size="4" fill="#ff1f1f" stroke="#ff1f1f" stroke-width="0.12">gr</text>
<polyline points="392.5,607.5 392.5,227.5 596.2,227.5" stroke="#ff1f1f" stroke-width="1.2" fill="none"/>
<line x1="596.2" y1="223.2" x2="600.5" y2="227.5" stroke="#ff1f1f" stroke-width="1.1"/>
<line x1="596.2" y1="227.5" x2="725.8" y2="227.5" stroke="#ff1f1f" stroke-width="1.2"/>
<line x1="703.5" y1="224.5" x2="708.5" y2="231" stroke="#ff1f1f" stroke-width="1.1"/>
<text x="703" y="227" font-size="4" fill="#ff1f1f" text-anchor="end" stroke="#ff1f1f" stroke-width="0.12">H05V-K</text>
<text x="703" y="231.3" font-size="4" fill="#ff1f1f" text-anchor="end" stroke="#ff1f1f" stroke-width="0.12">0,75 mm²</text>
<text x="709" y="226.5" font-size="4" fill="#ff1f1f" stroke="#ff1f1f" stroke-width="0.12">gr</text>
<line x1="725.8" y1="227.5" x2="725.8" y2="403.7" stroke="#ff1f1f" stroke-width="1.2"/>
<line x1="725.8" y1="244" x2="725.8" y2="249.5" stroke="#1f1fff" stroke-width="1.4"/>
<line x1="720" y1="249" x2="726" y2="262" stroke="#1f1fff" stroke-width="1.2"/>
<line x1="725.8" y1="262" x2="725.8" y2="267" stroke="#1f1fff" stroke-width="1.4"/>
<text x="728" y="242.5" font-size="3.5" fill="#1f1fff" stroke="#1f1fff" stroke-width="0.12">NO</text>
<text x="728" y="249.5" font-size="4.5" fill="#111" stroke="#111" stroke-width="0.12">13</text>
<text x="728" y="266.5" font-size="4.5" fill="#111" stroke="#111" stroke-width="0.12">14</text>
<text x="728" y="271" font-size="3.5" fill="#1f1fff" stroke="#1f1fff" stroke-width="0.12">NO</text>
<text x="717" y="258.5" font-size="8" fill="#1f1fff" text-anchor="end" stroke="#1f1fff" stroke-width="0.12">-Q1</text>
<text x="717" y="265" font-size="5" fill="#7fae5a" text-anchor="end" stroke="#7fae5a" stroke-width="0.12">/1.0</text>
<line x1="723.3" y1="280" x2="728.3" y2="286.5" stroke="#ff1f1f" stroke-width="1.1"/>
<text x="723.3" y="282.5" font-size="4" fill="#ff1f1f" text-anchor="end" stroke="#ff1f1f" stroke-width="0.12">H05V-K</text>
<text x="723.3" y="286.8" font-size="4" fill="#ff1f1f" text-anchor="end" stroke="#ff1f1f" stroke-width="0.12">0,75 mm²</text>
<text x="728.8" y="282.5" font-size="4" fill="#ff1f1f" stroke="#ff1f1f" stroke-width="0.12">gr</text>
<polyline points="605.7,352.7 605.7,301.8 814.5,301.8 818.4,297.9" stroke="#ff1f1f" stroke-width="1.2" fill="none"/>
<line x1="603.2" y1="308" x2="608.2" y2="314.5" stroke="#ff1f1f" stroke-width="1.1"/>
<text x="603.2" y="310.5" font-size="4" fill="#ff1f1f" text-anchor="end" stroke="#ff1f1f" stroke-width="0.12">H05V-K</text>
<text x="603.2" y="314.8" font-size="4" fill="#ff1f1f" text-anchor="end" stroke="#ff1f1f" stroke-width="0.12">0,75 mm²</text>
<text x="608.7" y="310.5" font-size="4" fill="#ff1f1f" stroke="#ff1f1f" stroke-width="0.12">gr</text>
<rect x="596.5" y="324.4" width="18.5" height="9.9" stroke="#1f1fff" stroke-width="1.3" fill="#fff"/>
<line x1="605.7" y1="319" x2="605.7" y2="324.4" stroke="#1f1fff" stroke-width="1.3"/>
<line x1="605.7" y1="334.3" x2="605.7" y2="339" stroke="#1f1fff" stroke-width="1.3"/>
<text x="608" y="322" font-size="4.5" fill="#111" stroke="#111" stroke-width="0.12">2</text>
<text x="608" y="340.5" font-size="4.5" fill="#111" stroke="#111" stroke-width="0.12">10</text>
<text x="591.5" y="333" font-size="8.5" fill="#1f1fff" text-anchor="end" stroke="#1f1fff" stroke-width="0.12">-K11</text>
<line x1="725.8" y1="319.5" x2="725.8" y2="324.5" stroke="#1f1fff" stroke-width="1.4"/>
<line x1="720" y1="324" x2="726" y2="337" stroke="#1f1fff" stroke-width="1.2"/>
<line x1="725.8" y1="337" x2="725.8" y2="341" stroke="#1f1fff" stroke-width="1.4"/>
<text x="728" y="323" font-size="4.5" fill="#111" stroke="#111" stroke-width="0.12">13</text>
<text x="728" y="340.5" font-size="4.5" fill="#111" stroke="#111" stroke-width="0.12">14</text>
<text x="717" y="333" font-size="8" fill="#1f1fff" text-anchor="end" stroke="#1f1fff" stroke-width="0.12">-F02</text>
<text x="717" y="339.5" font-size="5" fill="#7fae5a" text-anchor="end" stroke="#7fae5a" stroke-width="0.12">/2.1</text>
<line x1="815.9" y1="334" x2="820.9" y2="340.5" stroke="#ff1f1f" stroke-width="1.1"/>
<text x="815.9" y="336.5" font-size="4" fill="#ff1f1f" text-anchor="end" stroke="#ff1f1f" stroke-width="0.12">H05V-K</text>
<text x="815.9" y="340.8" font-size="4" fill="#ff1f1f" text-anchor="end" stroke="#ff1f1f" stroke-width="0.12">0,75 mm²</text>
<text x="821.4" y="336.5" font-size="4" fill="#ff1f1f" stroke="#ff1f1f" stroke-width="0.12">gr</text>
<line x1="556.9" y1="281" x2="561.9" y2="287.5" stroke="#ff1f1f" stroke-width="1.1"/>
<text x="556.9" y="283.5" font-size="4" fill="#ff1f1f" text-anchor="end" stroke="#ff1f1f" stroke-width="0.12">H05V-K</text>
<text x="556.9" y="287.8" font-size="4" fill="#ff1f1f" text-anchor="end" stroke="#ff1f1f" stroke-width="0.12">0,75 mm²</text>
<text x="562.4" y="283.5" font-size="4" fill="#ff1f1f" stroke="#ff1f1f" stroke-width="0.12">gr</text>
<line x1="390" y1="280" x2="395" y2="286.5" stroke="#ff1f1f" stroke-width="1.1"/>
<text x="390" y="282.5" font-size="4" fill="#ff1f1f" text-anchor="end" stroke="#ff1f1f" stroke-width="0.12">H05V-K</text>
<text x="390" y="286.8" font-size="4" fill="#ff1f1f" text-anchor="end" stroke="#ff1f1f" stroke-width="0.12">0,75 mm²</text>
<text x="395.5" y="282.5" font-size="4" fill="#ff1f1f" stroke="#ff1f1f" stroke-width="0.12">gr</text>
<line x1="355.3" y1="357" x2="876" y2="357" stroke="#ff1f1f" stroke-width="1.2"/>
<line x1="559.4" y1="352.7" x2="563.7" y2="357" stroke="#ff1f1f" stroke-width="1.1"/>
<line x1="605.7" y1="352.7" x2="610" y2="357" stroke="#ff1f1f" stroke-width="1.1"/>
<line x1="693.3" y1="357" x2="689" y2="361.3" stroke="#ff1f1f" stroke-width="1.1"/>
<line x1="785.7" y1="357" x2="781.4" y2="361.3" stroke="#ff1f1f" stroke-width="1.1"/>
<line x1="666.5" y1="354" x2="671.5" y2="360.5" stroke="#ff1f1f" stroke-width="1.1"/>
<text x="666" y="356.5" font-size="4" fill="#ff1f1f" text-anchor="end" stroke="#ff1f1f" stroke-width="0.12">H05V-K</text>
<text x="666" y="360.8" font-size="4" fill="#ff1f1f" text-anchor="end" stroke="#ff1f1f" stroke-width="0.12">0,75 mm²</text>
<text x="672" y="356" font-size="4" fill="#ff1f1f" stroke="#ff1f1f" stroke-width="0.12">gr</text>
<line x1="759.5" y1="354" x2="764.5" y2="360.5" stroke="#ff1f1f" stroke-width="1.1"/>
<text x="759" y="356.5" font-size="4" fill="#ff1f1f" text-anchor="end" stroke="#ff1f1f" stroke-width="0.12">H05V-K</text>
<text x="759" y="360.8" font-size="4" fill="#ff1f1f" text-anchor="end" stroke="#ff1f1f" stroke-width="0.12">0,75 mm²</text>
<text x="765" y="356" font-size="4" fill="#ff1f1f" stroke="#ff1f1f" stroke-width="0.12">gr</text>
<line x1="864.5" y1="354" x2="869.5" y2="360.5" stroke="#ff1f1f" stroke-width="1.1"/>
<text x="864" y="356.5" font-size="4" fill="#ff1f1f" text-anchor="end" stroke="#ff1f1f" stroke-width="0.12">H05V-K</text>
<text x="864" y="360.8" font-size="4" fill="#ff1f1f" text-anchor="end" stroke="#ff1f1f" stroke-width="0.12">0,75 mm²</text>
<text x="870" y="356" font-size="4" fill="#ff1f1f" stroke="#ff1f1f" stroke-width="0.12">gr</text>
<line x1="689" y1="361" x2="689" y2="403.7" stroke="#ff1f1f" stroke-width="1.2"/>
<line x1="781.4" y1="361" x2="781.4" y2="403.7" stroke="#ff1f1f" stroke-width="1.2"/>
<line x1="355.3" y1="357" x2="355.3" y2="607.5" stroke="#ff1f1f" stroke-width="1.2"/>
<line x1="355.3" y1="366" x2="355.3" y2="371.5" stroke="#1f1fff" stroke-width="1.4"/>
<path d="M355.3 366.5 a2 2.5 0 0 0 0 5" stroke="#1f1fff" stroke-width="1.1" fill="none"/>
<line x1="349.8" y1="369.5" x2="355.8" y2="382" stroke="#1f1fff" stroke-width="1.2"/>
<line x1="355.3" y1="382" x2="355.3" y2="387" stroke="#1f1fff" stroke-width="1.4"/>
<text x="357.3" y="369.5" font-size="4.5" fill="#111" stroke="#111" stroke-width="0.12">1</text>
<text x="357.3" y="387.5" font-size="4.5" fill="#111" stroke="#111" stroke-width="0.12">3</text>
<line x1="392.5" y1="366" x2="392.5" y2="371.5" stroke="#1f1fff" stroke-width="1.4"/>
<path d="M392.5 366.5 a2 2.5 0 0 0 0 5" stroke="#1f1fff" stroke-width="1.1" fill="none"/>
<line x1="387" y1="369.5" x2="393" y2="382" stroke="#1f1fff" stroke-width="1.2"/>
<line x1="392.5" y1="382" x2="392.5" y2="387" stroke="#1f1fff" stroke-width="1.4"/>
<text x="394.5" y="369.5" font-size="4.5" fill="#111" stroke="#111" stroke-width="0.12">6</text>
<text x="394.5" y="387.5" font-size="4.5" fill="#111" stroke="#111" stroke-width="0.12">7</text>
<line x1="359" y1="376" x2="389" y2="376" stroke="#1f1fff" stroke-width="1.2" stroke-dasharray="3.5,2.5"/>
<text x="349" y="379" font-size="8.5" fill="#1f1fff" text-anchor="end" stroke="#1f1fff" stroke-width="0.12">-K11</text>
<text x="349" y="386" font-size="5" fill="#7fae5a" text-anchor="end" stroke="#7fae5a" stroke-width="0.12">/1.6</text>
<line x1="355.3" y1="418" x2="355.3" y2="420" stroke="#1f1fff" stroke-width="1.2"/>
<circle cx="355.3" cy="422" r="2.1" stroke="#1f1fff" stroke-width="1" fill="#fff"/>
<text x="358.3" y="423.8" font-size="4.5" fill="#111" stroke="#111" stroke-width="0.12">3</text>
<line x1="392.5" y1="418" x2="392.5" y2="420" stroke="#1f1fff" stroke-width="1.2"/>
<circle cx="392.5" cy="422" r="2.1" stroke="#1f1fff" stroke-width="1" fill="#fff"/>
<text x="395.5" y="423.8" font-size="4.5" fill="#111" stroke="#111" stroke-width="0.12">2</text>
<line x1="439" y1="418" x2="439" y2="420" stroke="#1f1fff" stroke-width="1.2"/>
<circle cx="439" cy="422" r="2.1" stroke="#1f1fff" stroke-width="1" fill="#fff"/>
<text x="442" y="423.8" font-size="4.5" fill="#111" stroke="#111" stroke-width="0.12">4</text>
<line x1="457.4" y1="418" x2="457.4" y2="420" stroke="#1f1fff" stroke-width="1.2"/>
<circle cx="457.4" cy="422" r="2.1" stroke="#1f1fff" stroke-width="1" fill="#fff"/>
<text x="460.4" y="423.8" font-size="4.5" fill="#111" stroke="#111" stroke-width="0.12">5</text>
<text x="350" y="425.5" font-size="8" fill="#1f1fff" text-anchor="end" stroke="#1f1fff" stroke-width="0.12">-X2</text>
<line x1="346.3" y1="449.7" x2="466.9" y2="449.7" stroke="#1f1fff" stroke-width="1.3"/>
<text x="346" y="447.5" font-size="8" fill="#1f1fff" text-anchor="end" stroke="#1f1fff" stroke-width="0.12">-W90</text>
<text x="346" y="454" font-size="5" fill="#1f1fff" text-anchor="end" stroke="#1f1fff" stroke-width="0.12">7G1 mm²</text>
<text x="346" y="460.5" font-size="5" fill="#111" text-anchor="end" stroke="#111" stroke-width="0.12">Steuerspannung Silopilot</text>
<text x="358.3" y="444" font-size="3.2" fill="#ff1f1f" stroke="#ff1f1f" stroke-width="0.12">2</text>
<text x="358.3" y="448" font-size="3.2" fill="#ff1f1f" stroke="#ff1f1f" stroke-width="0.12">1</text>
<text x="395.5" y="444" font-size="3.2" fill="#ff1f1f" stroke="#ff1f1f" stroke-width="0.12">1</text>
<text x="395.5" y="448" font-size="3.2" fill="#ff1f1f" stroke="#ff1f1f" stroke-width="0.12">1</text>
<text x="442" y="444" font-size="3.2" fill="#ff1f1f" stroke="#ff1f1f" stroke-width="0.12">3</text>
<text x="442" y="448" font-size="3.2" fill="#ff1f1f" stroke="#ff1f1f" stroke-width="0.12">1</text>
<text x="460.4" y="444" font-size="3.2" fill="#ff1f1f" stroke="#ff1f1f" stroke-width="0.12">4</text>
<text x="460.4" y="448" font-size="3.2" fill="#ff1f1f" stroke="#ff1f1f" stroke-width="0.12">1</text>
<polyline points="439,607.5 439,403.8 642.5,403.8 642.5,579.5 716.5,579.5 716.5,542.4" stroke="#ff1f1f" stroke-width="1.2" fill="none"/>
<polyline points="457.4,607.5 457.4,413 633.3,413 633.3,588.9 744.4,588.9 744.4,542.4" stroke="#ff1f1f" stroke-width="1.2" fill="none"/>
<line x1="714" y1="556" x2="719" y2="562.5" stroke="#ff1f1f" stroke-width="1.1"/>
<text x="714" y="558.5" font-size="4" fill="#ff1f1f" text-anchor="end" stroke="#ff1f1f" stroke-width="0.12">H05V-K</text>
<text x="714" y="562.8" font-size="4" fill="#ff1f1f" text-anchor="end" stroke="#ff1f1f" stroke-width="0.12">0,75 mm²</text>
<text x="719.5" y="558.5" font-size="4" fill="#ff1f1f" stroke="#ff1f1f" stroke-width="0.12">gr</text>
<line x1="741.9" y1="556" x2="746.9" y2="562.5" stroke="#ff1f1f" stroke-width="1.1"/>
<text x="741.9" y="558.5" font-size="4" fill="#ff1f1f" text-anchor="end" stroke="#ff1f1f" stroke-width="0.12">H05V-K</text>
<text x="741.9" y="562.8" font-size="4" fill="#ff1f1f" text-anchor="end" stroke="#ff1f1f" stroke-width="0.12">0,75 mm²</text>
<text x="747.4" y="558.5" font-size="4" fill="#ff1f1f" stroke="#ff1f1f" stroke-width="0.12">gr</text>
<text x="596" y="376.4" font-size="4.5" fill="#111" text-anchor="end" stroke="#111" stroke-width="0.12">1</text>
<line x1="601" y1="377.1" x2="612" y2="373.6" stroke="#1f1fff" stroke-width="1.2"/>
<line x1="612" y1="373.6" x2="614" y2="373.6" stroke="#1f1fff" stroke-width="1.2"/>
<path d="M598.5 374.1 l2 1.8 l2 -1.8 z" stroke="#1f1fff" stroke-width="1" fill="#1f1fff"/>
<text x="615.5" y="376.4" font-size="4.5" fill="#111" stroke="#111" stroke-width="0.12">3</text>
<text x="619.5" y="376.4" font-size="5" fill="#7fae5a" stroke="#7fae5a" stroke-width="0.12">/1.3</text>
<text x="596" y="384" font-size="4.5" fill="#111" text-anchor="end" stroke="#111" stroke-width="0.12">6</text>
<line x1="601" y1="384.7" x2="612" y2="381.2" stroke="#1f1fff" stroke-width="1.2"/>
<line x1="612" y1="381.2" x2="614" y2="381.2" stroke="#1f1fff" stroke-width="1.2"/>
<path d="M598.5 381.7 l2 1.8 l2 -1.8 z" stroke="#1f1fff" stroke-width="1" fill="#1f1fff"/>
<text x="615.5" y="384" font-size="4.5" fill="#111" stroke="#111" stroke-width="0.12">7</text>
<text x="619.5" y="384" font-size="5" fill="#7fae5a" stroke="#7fae5a" stroke-width="0.12">/1.3</text>
<text x="596" y="391.8" font-size="4.5" fill="#111" text-anchor="end" stroke="#111" stroke-width="0.12">11</text>
<line x1="601" y1="392.5" x2="612" y2="389" stroke="#1f1fff" stroke-width="1.2"/>
<line x1="612" y1="389" x2="614" y2="389" stroke="#1f1fff" stroke-width="1.2"/>
<line x1="598" y1="389.5" x2="601" y2="389.5" stroke="#1f1fff" stroke-width="1"/>
<text x="615.5" y="391.8" font-size="4.5" fill="#111" stroke="#111" stroke-width="0.12">9</text>
<text x="619.5" y="391.8" font-size="5" fill="#7fae5a" stroke="#7fae5a" stroke-width="0.12">/2.1</text>
<rect x="679.7" y="403.7" width="184.9" height="64.7" stroke="#1f1fff" stroke-width="1.3" fill="none"/>
<line x1="679.7" y1="413" x2="864.6" y2="413" stroke="#1f1fff" stroke-width="1.3"/>
<line x1="679.7" y1="422.3" x2="864.6" y2="422.3" stroke="#1f1fff" stroke-width="1.3"/>
<line x1="679.7" y1="431.6" x2="864.6" y2="431.6" stroke="#1f1fff" stroke-width="1.3"/>
<line x1="679.7" y1="440.8" x2="864.6" y2="440.8" stroke="#1f1fff" stroke-width="1.3"/>
<line x1="679.7" y1="450.1" x2="864.6" y2="450.1" stroke="#1f1fff" stroke-width="1.3"/>
<line x1="772" y1="403.7" x2="772" y2="468.4" stroke="#1f1fff" stroke-width="1.3"/>
<text x="691" y="401.5" font-size="4.5" fill="#111" stroke="#111" stroke-width="0.12">1</text>
<text x="727.8" y="401.5" font-size="4.5" fill="#111" stroke="#111" stroke-width="0.12">4</text>
<text x="783.4" y="401.5" font-size="4.5" fill="#111" stroke="#111" stroke-width="0.12">7</text>
<text x="820.4" y="401.5" font-size="4.5" fill="#111" stroke="#111" stroke-width="0.12">10</text>
<text x="686" y="410" font-size="4.5" fill="#111" stroke="#111" stroke-width="0.12">1N</text>
<text x="778" y="410" font-size="4.5" fill="#111" stroke="#111" stroke-width="0.12">2N</text>
<text x="726" y="419.5" font-size="4.5" fill="#111" text-anchor="middle" stroke="#111" stroke-width="0.12">=1501P031-A06</text>
<text x="726" y="428.7" font-size="4.5" fill="#111" text-anchor="middle" stroke="#111" stroke-width="0.12">6ES7321-1FF10-0AA0</text>
<text x="726" y="438" font-size="4.5" fill="#111" text-anchor="middle" stroke="#111" stroke-width="0.12">E49.0</text>
<text x="726" y="447.2" font-size="4.5" fill="#111" text-anchor="middle" stroke="#111" stroke-width="0.12">012-ESB</text>
<text x="726" y="455.5" font-size="4.5" fill="#111" text-anchor="middle" stroke="#111" stroke-width="0.12">Schaltbereit</text>
<text x="818" y="419.5" font-size="4.5" fill="#111" text-anchor="middle" stroke="#111" stroke-width="0.12">=1501P031-A06</text>
<text x="818" y="428.7" font-size="4.5" fill="#111" text-anchor="middle" stroke="#111" stroke-width="0.12">6ES7321-1FF10-0AA0</text>
<text x="818" y="438" font-size="4.5" fill="#111" text-anchor="middle" stroke="#111" stroke-width="0.12">E49.1</text>
<text x="818" y="447.2" font-size="4.5" fill="#111" text-anchor="middle" stroke="#111" stroke-width="0.12">012-EVO</text>
<text x="818" y="455.5" font-size="4.5" fill="#111" text-anchor="middle" stroke="#111" stroke-width="0.12">Hauptschalter</text>
<rect x="670.3" y="477.7" width="92.7" height="64.7" stroke="#1f1fff" stroke-width="1.3" fill="none"/>
<line x1="670.3" y1="496.2" x2="763" y2="496.2" stroke="#1f1fff" stroke-width="1.3"/>
<line x1="670.3" y1="505.3" x2="763" y2="505.3" stroke="#1f1fff" stroke-width="1.3"/>
<line x1="670.3" y1="514.5" x2="763" y2="514.5" stroke="#1f1fff" stroke-width="1.3"/>
<line x1="670.3" y1="523.8" x2="763" y2="523.8" stroke="#1f1fff" stroke-width="1.3"/>
<line x1="670.3" y1="533.1" x2="763" y2="533.1" stroke="#1f1fff" stroke-width="1.3"/>
<text x="716.6" y="495" font-size="4.5" fill="#111" text-anchor="middle" stroke="#111" stroke-width="0.12">Befehl Ein</text>
<text x="716.6" y="503" font-size="4.5" fill="#111" text-anchor="middle" stroke="#111" stroke-width="0.12">012-EBE</text>
<text x="716.6" y="512.2" font-size="4.5" fill="#111" text-anchor="middle" stroke="#111" stroke-width="0.12">A13.0</text>
<text x="716.6" y="521.5" font-size="4.5" fill="#111" text-anchor="middle" stroke="#111" stroke-width="0.12">6ES7322-1HF10-0AA0</text>
<text x="716.6" y="530.8" font-size="4.5" fill="#111" text-anchor="middle" stroke="#111" stroke-width="0.12">=1501P031-A08</text>
<text x="741" y="540" font-size="4.5" fill="#111" stroke="#111" stroke-width="0.12">L1  L11</text>
<text x="718.5" y="548" font-size="4.5" fill="#111" stroke="#111" stroke-width="0.12">3</text>
<text x="746" y="548" font-size="4.5" fill="#111" stroke="#111" stroke-width="0.12">4</text>
<text x="755" y="548" font-size="4.5" fill="#111" stroke="#111" stroke-width="0.12">5</text>
<rect x="116" y="634" width="859" height="565" fill="#fff"/>
<text x="143.4" y="691.5" font-size="7" fill="#1f1fff" stroke="#1f1fff" stroke-width="0.12">-A1</text>
<text x="143.4" y="699" font-size="4.5" fill="#1f1fff" stroke="#1f1fff" stroke-width="0.12">PILZ.312070</text>
<rect x="123.3" y="791.4" width="19.7" height="136" stroke="#111" stroke-width="1.2" fill="none"/>
<text x="134" y="856" font-size="8" fill="#1f1fff" text-anchor="middle" transform="rotate(-90 134 856)" stroke="#1f1fff" stroke-width="0.12">Endwinkel</text>
<text x="140.5" y="856" font-size="5" fill="#1f1fff" text-anchor="middle" transform="rotate(-90 140.5 856)" stroke="#1f1fff" stroke-width="0.12">PSSu A ET</text>
<line x1="143.2" y1="705.2" x2="889.5" y2="705.2" stroke="#ff33ff" stroke-width="1.6"/>
<line x1="143.2" y1="705.2" x2="143.2" y2="1016.2" stroke="#ff33ff" stroke-width="1.6"/>
<line x1="143.2" y1="1016.2" x2="465.4" y2="1016.2" stroke="#ff33ff" stroke-width="1.6"/>
<line x1="207.3" y1="706" x2="207.3" y2="1016" stroke="#333" stroke-width="1.3"/>
<line x1="272.4" y1="706" x2="272.4" y2="1016" stroke="#333" stroke-width="1.3"/>
<line x1="336.6" y1="706" x2="336.6" y2="1016" stroke="#333" stroke-width="1.3"/>
<line x1="400.7" y1="706" x2="400.7" y2="946.9" stroke="#333" stroke-width="1.3"/>
<rect x="147.7" y="709.5" width="55.1" height="158.5" stroke="#222" stroke-width="1.3" fill="none"/>
<rect x="162.3" y="748" width="21" height="31.6" stroke="#222" stroke-width="1.3" fill="none"/>
<polyline points="179.3,752.5 169.8,752.5 169.8,756 165.8,756 165.8,771.5 169.8,771.5 169.8,775 179.3,775 179.3,752.5" stroke="#222" stroke-width="1.3" fill="none"/>
<text x="189.8" y="764" font-size="5.5" fill="#1f1fff" text-anchor="middle" transform="rotate(-90 189.8 764)" stroke="#1f1fff" stroke-width="0.12">SafetyNET p</text>
<circle cx="152.8" cy="764.5" r="2.3" stroke="#ff33ff" stroke-width="1.2" fill="#fff"/>
<line x1="148.3" y1="764.5" x2="150.5" y2="764.5" stroke="#ff33ff" stroke-width="1.2"/>
<text x="149.3" y="759" font-size="4.5" fill="#777" stroke="#777" stroke-width="0.12">X3</text>
<text x="175.2" y="860" font-size="6.4" fill="#1f1fff" text-anchor="middle" font-weight="bold" stroke="#1f1fff" stroke-width="0.12">SafetyNET p</text>
<ellipse cx="176.2" cy="911" rx="27.5" ry="1.6" stroke="#222" stroke-width="1.3" fill="none"/>
<ellipse cx="176.2" cy="928.2" rx="27.5" ry="1.6" stroke="#222" stroke-width="1.3" fill="none"/>
<ellipse cx="176.2" cy="945.4" rx="27.5" ry="1.6" stroke="#222" stroke-width="1.3" fill="none"/>
<ellipse cx="176.2" cy="962.8" rx="27.5" ry="1.6" stroke="#222" stroke-width="1.3" fill="none"/>
<ellipse cx="176.2" cy="980.2" rx="27.5" ry="1.6" stroke="#222" stroke-width="1.3" fill="none"/>
<ellipse cx="176.2" cy="997.3" rx="27.5" ry="1.6" stroke="#222" stroke-width="1.3" fill="none"/>
<rect x="212.3" y="709.5" width="55.1" height="158.5" stroke="#222" stroke-width="1.3" fill="none"/>
<rect x="226.9" y="807" width="21" height="31.6" stroke="#222" stroke-width="1.3" fill="none"/>
<polyline points="243.9,811.5 234.4,811.5 234.4,815 230.4,815 230.4,830.5 234.4,830.5 234.4,834 243.9,834 243.9,811.5" stroke="#222" stroke-width="1.3" fill="none"/>
<text x="254.4" y="823" font-size="5.5" fill="#1f1fff" text-anchor="middle" transform="rotate(-90 254.4 823)" stroke="#1f1fff" stroke-width="0.12">SafetyNET p</text>
<circle cx="217.4" cy="823.5" r="2.3" stroke="#ff33ff" stroke-width="1.2" fill="#fff"/>
<line x1="212.9" y1="823.5" x2="215.1" y2="823.5" stroke="#ff33ff" stroke-width="1.2"/>
<text x="213.9" y="818" font-size="4.5" fill="#777" stroke="#777" stroke-width="0.12">X4</text>
<text x="239.8" y="860" font-size="6.4" fill="#1f1fff" text-anchor="middle" font-weight="bold" stroke="#1f1fff" stroke-width="0.12">SafetyNET p</text>
<ellipse cx="240.8" cy="911" rx="27.5" ry="1.6" stroke="#222" stroke-width="1.3" fill="none"/>
<ellipse cx="240.8" cy="928.2" rx="27.5" ry="1.6" stroke="#222" stroke-width="1.3" fill="none"/>
<ellipse cx="240.8" cy="945.4" rx="27.5" ry="1.6" stroke="#222" stroke-width="1.3" fill="none"/>
<ellipse cx="240.8" cy="962.8" rx="27.5" ry="1.6" stroke="#222" stroke-width="1.3" fill="none"/>
<ellipse cx="240.8" cy="980.2" rx="27.5" ry="1.6" stroke="#222" stroke-width="1.3" fill="none"/>
<ellipse cx="240.8" cy="997.3" rx="27.5" ry="1.6" stroke="#222" stroke-width="1.3" fill="none"/>
<text x="175.5" y="897" font-size="10" fill="#1f1fff" text-anchor="middle" stroke="#1f1fff" stroke-width="0.12">PSS 4000</text>
<text x="279.4" y="716.5" font-size="6.2" font-weight="bold" fill="#000" stroke="#000" stroke-width="0.5" transform="translate(279.4 716.5) scale(1.2 0.85) translate(-279.4 -716.5)">PILZ</text>
<rect x="287.7" y="738.8" width="32.7" height="129.2" stroke="#222" stroke-width="1.2" fill="none"/>
<text x="304" y="745" font-size="5" fill="#1f1fff" text-anchor="middle" stroke="#1f1fff" stroke-width="0.12">312070</text>
<text x="304" y="752.5" font-size="5" fill="#1f1fff" text-anchor="middle" stroke="#1f1fff" stroke-width="0.12">000000</text>
<text x="304" y="760" font-size="5" fill="#1f1fff" text-anchor="middle" stroke="#1f1fff" stroke-width="0.12">HW 000</text>
<rect x="295" y="763.5" width="18" height="18" stroke="#222" stroke-width="1.2" fill="none"/>
<text x="304" y="788" font-size="5" fill="#1f1fff" text-anchor="middle" stroke="#1f1fff" stroke-width="0.12">MAC</text>
<text x="304" y="795" font-size="5" fill="#1f1fff" text-anchor="middle" stroke="#1f1fff" stroke-width="0.12">ADD</text>
<rect x="294" y="796" width="20" height="69" stroke="#222" stroke-width="1.2" fill="none"/>
<text x="304" y="802" font-size="5" fill="#1f1fff" text-anchor="middle" stroke="#1f1fff" stroke-width="0.12">0000</text>
<text x="304" y="809.5" font-size="5" fill="#1f1fff" text-anchor="middle" stroke="#1f1fff" stroke-width="0.12">0000</text>
<text x="304" y="817" font-size="5" fill="#1f1fff" text-anchor="middle" stroke="#1f1fff" stroke-width="0.12">0000</text>
<rect x="299" y="825.5" width="11" height="39.5" stroke="#222" stroke-width="1.2" fill="none"/>
<text x="277.5" y="979.5" font-size="5" fill="#1f1fff" stroke="#1f1fff" stroke-width="0.12">PSSu</text>
<text x="303.8" y="999.5" font-size="9.8" fill="#1f1fff" text-anchor="middle" stroke="#1f1fff" stroke-width="0.12">PSSu PLC</text>
<rect x="363.2" y="721" width="4" height="4" stroke="#222" stroke-width="1.1" fill="none"/>
<rect x="364.4" y="722.2" width="1.6" height="1.6" fill="#222"/>
<text x="368.5" y="724.5" font-size="3.3" fill="#1f1fff" stroke="#1f1fff" stroke-width="0.12">MBUS</text>
<rect x="430.2" y="721" width="4" height="4" stroke="#222" stroke-width="1.1" fill="none"/>
<rect x="431.4" y="722.2" width="1.6" height="1.6" fill="#222"/>
<text x="435.5" y="724.5" font-size="3.3" fill="#1f1fff" stroke="#1f1fff" stroke-width="0.12">5V</text>
<rect x="363.2" y="730.9" width="4" height="4" stroke="#222" stroke-width="1.1" fill="none"/>
<rect x="364.4" y="732.1" width="1.6" height="1.6" fill="#222"/>
<text x="368.5" y="734.4" font-size="3.3" fill="#1f1fff" stroke="#1f1fff" stroke-width="0.12">SD CARD</text>
<rect x="430.2" y="730.9" width="4" height="4" stroke="#222" stroke-width="1.1" fill="none"/>
<rect x="431.4" y="732.1" width="1.6" height="1.6" fill="#222"/>
<text x="435.5" y="734.4" font-size="3.3" fill="#1f1fff" stroke="#1f1fff" stroke-width="0.12">24V</text>
<rect x="363.2" y="740.8" width="4" height="4" stroke="#222" stroke-width="1.1" fill="none"/>
<rect x="364.4" y="742" width="1.6" height="1.6" fill="#222"/>
<text x="368.5" y="744.3" font-size="3.3" fill="#1f1fff" stroke="#1f1fff" stroke-width="0.12">ST RUN</text>
<rect x="430.2" y="740.8" width="4" height="4" stroke="#222" stroke-width="1.1" fill="none"/>
<rect x="431.4" y="742" width="1.6" height="1.6" fill="#222"/>
<rect x="363.2" y="750.7" width="4" height="4" stroke="#222" stroke-width="1.1" fill="none"/>
<rect x="364.4" y="751.9" width="1.6" height="1.6" fill="#222"/>
<text x="368.5" y="754.2" font-size="3.3" fill="#1f1fff" stroke="#1f1fff" stroke-width="0.12">FS RUN</text>
<rect x="430.2" y="750.7" width="4" height="4" stroke="#222" stroke-width="1.1" fill="none"/>
<rect x="431.4" y="751.9" width="1.6" height="1.6" fill="#222"/>
<rect x="363.2" y="760.6" width="4" height="4" stroke="#222" stroke-width="1.1" fill="none"/>
<rect x="364.4" y="761.8" width="1.6" height="1.6" fill="#222"/>
<text x="368.5" y="764.1" font-size="3.3" fill="#1f1fff" stroke="#1f1fff" stroke-width="0.12">DIAG</text>
<rect x="430.2" y="760.6" width="4" height="4" stroke="#222" stroke-width="1.1" fill="none"/>
<rect x="431.4" y="761.8" width="1.6" height="1.6" fill="#222"/>
<rect x="363.2" y="770.5" width="4" height="4" stroke="#222" stroke-width="1.1" fill="none"/>
<rect x="364.4" y="771.7" width="1.6" height="1.6" fill="#222"/>
<text x="368.5" y="774" font-size="3.3" fill="#1f1fff" stroke="#1f1fff" stroke-width="0.12">ST FORCE</text>
<rect x="430.2" y="770.5" width="4" height="4" stroke="#222" stroke-width="1.1" fill="none"/>
<rect x="431.4" y="771.7" width="1.6" height="1.6" fill="#222"/>
<rect x="363.2" y="780.4" width="4" height="4" stroke="#222" stroke-width="1.1" fill="none"/>
<rect x="364.4" y="781.6" width="1.6" height="1.6" fill="#222"/>
<text x="368.5" y="783.9" font-size="3.3" fill="#1f1fff" stroke="#1f1fff" stroke-width="0.12">FS FORCE</text>
<rect x="430.2" y="780.4" width="4" height="4" stroke="#222" stroke-width="1.1" fill="none"/>
<rect x="431.4" y="781.6" width="1.6" height="1.6" fill="#222"/>
<rect x="363.2" y="790.3" width="4" height="4" stroke="#222" stroke-width="1.1" fill="none"/>
<rect x="364.4" y="791.5" width="1.6" height="1.6" fill="#222"/>
<text x="368.5" y="793.8" font-size="3.3" fill="#1f1fff" stroke="#1f1fff" stroke-width="0.12">MS</text>
<rect x="430.2" y="790.3" width="4" height="4" stroke="#222" stroke-width="1.1" fill="none"/>
<rect x="431.4" y="791.5" width="1.6" height="1.6" fill="#222"/>
<rect x="363.2" y="800.2" width="4" height="4" stroke="#222" stroke-width="1.1" fill="none"/>
<rect x="364.4" y="801.4" width="1.6" height="1.6" fill="#222"/>
<text x="368.5" y="803.7" font-size="3.3" fill="#1f1fff" stroke="#1f1fff" stroke-width="0.12">NS</text>
<rect x="430.2" y="800.2" width="4" height="4" stroke="#222" stroke-width="1.1" fill="none"/>
<rect x="431.4" y="801.4" width="1.6" height="1.6" fill="#222"/>
<rect x="363.2" y="810.1" width="4" height="4" stroke="#222" stroke-width="1.1" fill="none"/>
<rect x="364.4" y="811.3" width="1.6" height="1.6" fill="#222"/>
<rect x="430.2" y="810.1" width="4" height="4" stroke="#222" stroke-width="1.1" fill="none"/>
<rect x="431.4" y="811.3" width="1.6" height="1.6" fill="#222"/>
<text x="435.5" y="813.6" font-size="3.3" fill="#1f1fff" stroke="#1f1fff" stroke-width="0.12">X3: LNK</text>
<rect x="363.2" y="820" width="4" height="4" stroke="#222" stroke-width="1.1" fill="none"/>
<rect x="364.4" y="821.2" width="1.6" height="1.6" fill="#222"/>
<text x="368.5" y="823.5" font-size="3.3" fill="#1f1fff" stroke="#1f1fff" stroke-width="0.12">ST SMp</text>
<rect x="430.2" y="820" width="4" height="4" stroke="#222" stroke-width="1.1" fill="none"/>
<rect x="431.4" y="821.2" width="1.6" height="1.6" fill="#222"/>
<text x="435.5" y="823.5" font-size="3.3" fill="#1f1fff" stroke="#1f1fff" stroke-width="0.12">X3: TRF</text>
<rect x="363.2" y="829.9" width="4" height="4" stroke="#222" stroke-width="1.1" fill="none"/>
<rect x="364.4" y="831.1" width="1.6" height="1.6" fill="#222"/>
<text x="368.5" y="833.4" font-size="3.3" fill="#1f1fff" stroke="#1f1fff" stroke-width="0.12">FS SMp</text>
<rect x="430.2" y="829.9" width="4" height="4" stroke="#222" stroke-width="1.1" fill="none"/>
<rect x="431.4" y="831.1" width="1.6" height="1.6" fill="#222"/>
<text x="435.5" y="833.4" font-size="3.3" fill="#1f1fff" stroke="#1f1fff" stroke-width="0.12">X4: LNK</text>
<rect x="363.2" y="839.8" width="4" height="4" stroke="#222" stroke-width="1.1" fill="none"/>
<rect x="364.4" y="841" width="1.6" height="1.6" fill="#222"/>
<rect x="430.2" y="839.8" width="4" height="4" stroke="#222" stroke-width="1.1" fill="none"/>
<rect x="431.4" y="841" width="1.6" height="1.6" fill="#222"/>
<text x="435.5" y="843.3" font-size="3.3" fill="#1f1fff" stroke="#1f1fff" stroke-width="0.12">X4: TRF</text>
<text x="369.8" y="891.5" font-size="5" fill="#1f1fff" text-anchor="middle" stroke="#1f1fff" stroke-width="0.12">SD</text>
<rect x="366" y="902" width="8" height="90" stroke="#222" stroke-width="1.2" fill="none"/>
<text x="429.8" y="886" font-size="5" fill="#1f1fff" text-anchor="middle" stroke="#1f1fff" stroke-width="0.12">Reset</text>
<circle cx="430" cy="895.5" r="3.6" stroke="#222" stroke-width="1.3" fill="#fff"/>
<circle cx="413" cy="922" r="2.2" stroke="#222" stroke-width="1.1" fill="#fff"/>
<rect x="378.2" y="946.9" width="87" height="69.1" stroke="#333" stroke-width="1.2" fill="none"/>
<line x1="378.2" y1="979.3" x2="465.2" y2="979.3" stroke="#333" stroke-width="1.2"/>
<text x="399.4" y="957" font-size="3.3" fill="#1f1fff" text-anchor="middle" stroke="#1f1fff" stroke-width="0.12">24V</text>
<circle cx="400.4" cy="962" r="2.3" stroke="#ff33ff" stroke-width="1.2" fill="#fff"/>
<line x1="400.4" y1="964.3" x2="400.4" y2="968" stroke="#ff33ff" stroke-width="1.4"/>
<polygon points="398.4,965.5 402.4,965.5 400.4,968.5" fill="#ff33ff"/>
<text x="395.4" y="973" font-size="4.5" fill="#111" stroke="#111" stroke-width="0.12">1</text>
<text x="419.2" y="957" font-size="3.3" fill="#1f1fff" text-anchor="middle" stroke="#1f1fff" stroke-width="0.12">24V</text>
<circle cx="420.2" cy="962" r="2.3" stroke="#ff33ff" stroke-width="1.2" fill="#fff"/>
<line x1="420.2" y1="964.3" x2="420.2" y2="968" stroke="#ff33ff" stroke-width="1.4"/>
<polygon points="418.2,965.5 422.2,965.5 420.2,968.5" fill="#ff33ff"/>
<text x="415.2" y="973" font-size="4.5" fill="#111" stroke="#111" stroke-width="0.12">2</text>
<text x="439" y="957" font-size="3.3" fill="#1f1fff" text-anchor="middle" stroke="#1f1fff" stroke-width="0.12">0V</text>
<circle cx="440" cy="962" r="2.3" stroke="#ff33ff" stroke-width="1.2" fill="#fff"/>
<line x1="440" y1="964.3" x2="440" y2="968" stroke="#ff33ff" stroke-width="1.4"/>
<polygon points="438,965.5 442,965.5 440,968.5" fill="#ff33ff"/>
<text x="435" y="973" font-size="4.5" fill="#111" stroke="#111" stroke-width="0.12">3</text>
<text x="458.8" y="957" font-size="3.3" fill="#1f1fff" text-anchor="middle" stroke="#1f1fff" stroke-width="0.12">0V</text>
<circle cx="459.8" cy="962" r="2.3" stroke="#ff33ff" stroke-width="1.2" fill="#fff"/>
<line x1="459.8" y1="964.3" x2="459.8" y2="968" stroke="#ff33ff" stroke-width="1.4"/>
<polygon points="457.8,965.5 461.8,965.5 459.8,968.5" fill="#ff33ff"/>
<text x="454.8" y="973" font-size="4.5" fill="#111" stroke="#111" stroke-width="0.12">4</text>
<text x="383" y="965" font-size="4.5" fill="#777" stroke="#777" stroke-width="0.12">X1</text>
<text x="390.8" y="989" font-size="3.3" fill="#1f1fff" text-anchor="middle" stroke="#1f1fff" stroke-width="0.12">24V</text>
<circle cx="390.8" cy="992" r="2.3" stroke="#ff33ff" stroke-width="1.2" fill="#fff"/>
<line x1="390.8" y1="994.3" x2="390.8" y2="998" stroke="#ff33ff" stroke-width="1.4"/>
<polygon points="388.8,995.5 392.8,995.5 390.8,998.5" fill="#ff33ff"/>
<text x="385.8" y="1003" font-size="4.5" fill="#111" stroke="#111" stroke-width="0.12">1</text>
<text x="410.6" y="989" font-size="3.3" fill="#1f1fff" text-anchor="middle" stroke="#1f1fff" stroke-width="0.12">24V</text>
<circle cx="410.6" cy="992" r="2.3" stroke="#ff33ff" stroke-width="1.2" fill="#fff"/>
<line x1="410.6" y1="994.3" x2="410.6" y2="998" stroke="#ff33ff" stroke-width="1.4"/>
<polygon points="408.6,995.5 412.6,995.5 410.6,998.5" fill="#ff33ff"/>
<text x="405.6" y="1003" font-size="4.5" fill="#111" stroke="#111" stroke-width="0.12">2</text>
<text x="430.4" y="989" font-size="3.3" fill="#1f1fff" text-anchor="middle" stroke="#1f1fff" stroke-width="0.12">0V</text>
<circle cx="430.4" cy="992" r="2.3" stroke="#ff33ff" stroke-width="1.2" fill="#fff"/>
<line x1="430.4" y1="994.3" x2="430.4" y2="998" stroke="#ff33ff" stroke-width="1.4"/>
<polygon points="428.4,995.5 432.4,995.5 430.4,998.5" fill="#ff33ff"/>
<text x="425.4" y="1003" font-size="4.5" fill="#111" stroke="#111" stroke-width="0.12">3</text>
<text x="450.2" y="989" font-size="3.3" fill="#1f1fff" text-anchor="middle" stroke="#1f1fff" stroke-width="0.12">0V</text>
<circle cx="450.2" cy="992" r="2.3" stroke="#ff33ff" stroke-width="1.2" fill="#fff"/>
<line x1="450.2" y1="994.3" x2="450.2" y2="998" stroke="#ff33ff" stroke-width="1.4"/>
<polygon points="448.2,995.5 452.2,995.5 450.2,998.5" fill="#ff33ff"/>
<text x="445.2" y="1003" font-size="4.5" fill="#111" stroke="#111" stroke-width="0.12">4</text>
<text x="381" y="993.5" font-size="4.5" fill="#777" stroke="#777" stroke-width="0.12">X1</text>
<line x1="143.2" y1="1016.2" x2="465.4" y2="1016.2" stroke="#ff33ff" stroke-width="1.6"/>
<line x1="390.5" y1="996" x2="390.5" y2="1060.7" stroke="#ff1f1f" stroke-width="1.2"/>
<line x1="430.3" y1="996" x2="430.3" y2="1060.7" stroke="#ff1f1f" stroke-width="1.2"/>
<line x1="420.5" y1="966" x2="420.5" y2="1060.7" stroke="#ff1f1f" stroke-width="1.2"/>
<line x1="460.3" y1="966" x2="460.3" y2="1060.7" stroke="#ff1f1f" stroke-width="1.2"/>
<line x1="390.5" y1="1060.7" x2="420.5" y2="1060.7" stroke="#ff1f1f" stroke-width="1.2"/>
<line x1="430.3" y1="1060.7" x2="460.3" y2="1060.7" stroke="#ff1f1f" stroke-width="1.2"/>
<polyline points="401,966 401,1179.4 327,1179.4" stroke="#ff1f1f" stroke-width="1.2" fill="none"/>
<polyline points="440.2,966 440.2,1189 327,1189" stroke="#ff1f1f" stroke-width="1.2" fill="none"/>
<polyline points="450.2,996 450.2,1120 480,1120 480,1160" stroke="#ff1f1f" stroke-width="1.2" fill="none"/>
<polygon points="316.5,1176.2 327,1179.4 316.5,1182.6" fill="#ff1f1f"/>
<polygon points="316.5,1185.8 327,1189 316.5,1192.2" fill="#ff1f1f"/>
<text x="312" y="1182" font-size="7" fill="#1f1fff" text-anchor="end" stroke="#1f1fff" stroke-width="0.12">PSS-L+</text>
<text x="280.5" y="1182" font-size="4.5" fill="#7fae5a" text-anchor="end" stroke="#7fae5a" stroke-width="0.12">1.5 /</text>
<text x="312" y="1192" font-size="7" fill="#1f1fff" text-anchor="end" stroke="#1f1fff" stroke-width="0.12">PSS-M</text>
<text x="284" y="1192" font-size="4.5" fill="#7fae5a" text-anchor="end" stroke="#7fae5a" stroke-width="0.12">1.6 /</text>
<line x1="398.5" y1="1146" x2="403.5" y2="1152" stroke="#ff1f1f" stroke-width="1"/>
<text x="398" y="1148.5" font-size="3.2" fill="#ff1f1f" text-anchor="end" stroke="#ff1f1f" stroke-width="0.12">H05V-K</text>
<text x="398" y="1153" font-size="3.2" fill="#ff1f1f" text-anchor="end" stroke="#ff1f1f" stroke-width="0.12">0,75 mm²</text>
<text x="404" y="1148.5" font-size="3.2" fill="#ff1f1f" stroke="#ff1f1f" stroke-width="0.12">ws/rt</text>
<line x1="437.7" y1="1146" x2="442.7" y2="1152" stroke="#ff1f1f" stroke-width="1"/>
<text x="437.2" y="1148.5" font-size="3.2" fill="#ff1f1f" text-anchor="end" stroke="#ff1f1f" stroke-width="0.12">H05V-K</text>
<text x="437.2" y="1153" font-size="3.2" fill="#ff1f1f" text-anchor="end" stroke="#ff1f1f" stroke-width="0.12">0,75 mm²</text>
<text x="443.2" y="1148.5" font-size="3.2" fill="#ff1f1f" stroke="#ff1f1f" stroke-width="0.12">ws/bl</text>
<line x1="477.5" y1="1146" x2="482.5" y2="1152" stroke="#ff1f1f" stroke-width="1"/>
<text x="477" y="1148.5" font-size="3.2" fill="#ff1f1f" text-anchor="end" stroke="#ff1f1f" stroke-width="0.12">H05V-K</text>
<text x="477" y="1153" font-size="3.2" fill="#ff1f1f" text-anchor="end" stroke="#ff1f1f" stroke-width="0.12">0,75 mm²</text>
<text x="483" y="1148.5" font-size="3.2" fill="#ff1f1f" stroke="#ff1f1f" stroke-width="0.12">gnge</text>
<line x1="480" y1="1160" x2="480" y2="1167" stroke="#222" stroke-width="1.2"/>
<circle cx="480" cy="1169.4" r="2.3" stroke="#222" stroke-width="1.2" fill="none"/>
<line x1="470" y1="1169.4" x2="490" y2="1169.4" stroke="#222" stroke-width="1.2" stroke-dasharray="3,1.5"/>
<text x="480" y="1178.5" font-size="5" fill="#111" text-anchor="middle" stroke="#111" stroke-width="0.12">PE</text>
<text x="480" y="1185" font-size="5" fill="#111" text-anchor="middle" stroke="#111" stroke-width="0.12">PE-Schiene</text>
<line x1="465.4" y1="705.2" x2="465.4" y2="1016.2" stroke="#1a0a1a" stroke-width="1.5"/>
<line x1="465.4" y1="705.2" x2="505" y2="705.2" stroke="#5a205a" stroke-width="1.6"/>
<line x1="465.4" y1="1016.2" x2="505" y2="1016.2" stroke="#222" stroke-width="1.4"/>
<text x="472.4" y="703" font-size="7" fill="#1f1fff" transform="rotate(-90 472.4 703)" stroke="#1f1fff" stroke-width="0.12">-A2</text>
<text x="479.4" y="703" font-size="4.5" fill="#7fae5a" transform="rotate(-90 479.4 703)" stroke="#7fae5a" stroke-width="0.12">/3.0</text>
<text x="466.9" y="712" font-size="4" fill="#1f1fff" stroke="#1f1fff" stroke-width="0.12">PH_DT</text>
<text x="467.4" y="716.5" font-size="5.89" font-weight="bold" fill="#000" stroke="#000" stroke-width="0.5" transform="translate(467.4 716.5) scale(1.2 0.85) translate(-467.4 -716.5)">PILZ</text>
<circle cx="494.9" cy="709.5" r="0.9" fill="#111"/>
<line x1="494.9" y1="709.5" x2="494.9" y2="720" stroke="#111" stroke-width="1.1"/>
<path d="M489.3 715 A5.6 5.2 0 0 0 500.5 715" stroke="#111" stroke-width="1.1" fill="none"/>
<text x="484.9" y="726" font-size="3" fill="#1f1fff" text-anchor="middle" stroke="#1f1fff" stroke-width="0.12">En</text>
<rect x="483.1" y="726.8" width="3.6" height="3.6" stroke="#1f1fff" stroke-width="1.1" fill="none"/>
<rect x="484.1" y="727.8" width="1.6" height="1.6" fill="#1f1fff"/>
<rect x="467.9" y="739.7" width="34.5" height="96.1" stroke="#1f1fff" stroke-width="1.2" fill="none"/>
<text x="484.9" y="747.5" font-size="5" fill="#1f1fff" text-anchor="middle" stroke="#1f1fff" stroke-width="0.12">312200</text>
<line x1="472.4" y1="784" x2="497.4" y2="784" stroke="#1f1fff" stroke-width="1.1"/>
<line x1="472.4" y1="796" x2="497.4" y2="796" stroke="#1f1fff" stroke-width="1.1"/>
<line x1="472.4" y1="808.7" x2="497.4" y2="808.7" stroke="#1f1fff" stroke-width="1.1"/>
<line x1="472.4" y1="821" x2="497.4" y2="821" stroke="#1f1fff" stroke-width="1.1"/>
<line x1="472.4" y1="833.7" x2="497.4" y2="833.7" stroke="#1f1fff" stroke-width="1.1"/>
<line x1="484.9" y1="784" x2="484.9" y2="834" stroke="#1f1fff" stroke-width="1.1"/>
<text x="478.4" y="789.5" font-size="3" fill="#1f1fff" text-anchor="middle" stroke="#1f1fff" stroke-width="0.12">11</text>
<text x="490.9" y="789.5" font-size="3" fill="#1f1fff" text-anchor="middle" stroke="#1f1fff" stroke-width="0.12">21</text>
<text x="478.4" y="793.5" font-size="3" fill="#1f1fff" text-anchor="middle" stroke="#1f1fff" stroke-width="0.12">I0</text>
<text x="490.9" y="793.5" font-size="3" fill="#1f1fff" text-anchor="middle" stroke="#1f1fff" stroke-width="0.12">I1</text>
<text x="478.4" y="802" font-size="3" fill="#1f1fff" text-anchor="middle" stroke="#1f1fff" stroke-width="0.12">11</text>
<text x="490.9" y="802" font-size="3" fill="#1f1fff" text-anchor="middle" stroke="#1f1fff" stroke-width="0.12">21</text>
<text x="478.4" y="806" font-size="3" fill="#1f1fff" text-anchor="middle" stroke="#1f1fff" stroke-width="0.12">I0</text>
<text x="490.9" y="806" font-size="3" fill="#1f1fff" text-anchor="middle" stroke="#1f1fff" stroke-width="0.12">I1</text>
<text x="478.4" y="814.5" font-size="3" fill="#1f1fff" text-anchor="middle" stroke="#1f1fff" stroke-width="0.12">11</text>
<text x="490.9" y="814.5" font-size="3" fill="#1f1fff" text-anchor="middle" stroke="#1f1fff" stroke-width="0.12">21</text>
<text x="478.4" y="818.5" font-size="3" fill="#1f1fff" text-anchor="middle" stroke="#1f1fff" stroke-width="0.12">I0</text>
<text x="490.9" y="818.5" font-size="3" fill="#1f1fff" text-anchor="middle" stroke="#1f1fff" stroke-width="0.12">I1</text>
<text x="478.4" y="827" font-size="3" fill="#1f1fff" text-anchor="middle" stroke="#1f1fff" stroke-width="0.12">11</text>
<text x="490.9" y="827" font-size="3" fill="#1f1fff" text-anchor="middle" stroke="#1f1fff" stroke-width="0.12">21</text>
<text x="478.4" y="831" font-size="3" fill="#1f1fff" text-anchor="middle" stroke="#1f1fff" stroke-width="0.12">I0</text>
<text x="490.9" y="831" font-size="3" fill="#1f1fff" text-anchor="middle" stroke="#1f1fff" stroke-width="0.12">I1</text>
<rect x="478.6" y="840" width="3.6" height="3.6" stroke="#1f1fff" stroke-width="1.1" fill="none"/>
<rect x="479.6" y="841" width="1.6" height="1.6" fill="#1f1fff"/>
<rect x="486.6" y="840" width="3.6" height="3.6" stroke="#1f1fff" stroke-width="1.1" fill="none"/>
<rect x="487.6" y="841" width="1.6" height="1.6" fill="#1f1fff"/>
<text x="474.4" y="843" font-size="3" fill="#1f1fff" text-anchor="middle" stroke="#1f1fff" stroke-width="0.12">11</text>
<text x="493.4" y="843" font-size="3" fill="#1f1fff" text-anchor="middle" stroke="#1f1fff" stroke-width="0.12">21</text>
<rect x="478.6" y="847.5" width="3.6" height="3.6" stroke="#1f1fff" stroke-width="1.1" fill="none"/>
<rect x="479.6" y="848.5" width="1.6" height="1.6" fill="#1f1fff"/>
<rect x="486.6" y="847.5" width="3.6" height="3.6" stroke="#1f1fff" stroke-width="1.1" fill="none"/>
<rect x="487.6" y="848.5" width="1.6" height="1.6" fill="#1f1fff"/>
<text x="474.4" y="850.5" font-size="3" fill="#1f1fff" text-anchor="middle" stroke="#1f1fff" stroke-width="0.12">11</text>
<text x="493.4" y="850.5" font-size="3" fill="#1f1fff" text-anchor="middle" stroke="#1f1fff" stroke-width="0.12">21</text>
<text x="467.4" y="863.5" font-size="4" fill="#1f1fff" stroke="#1f1fff" stroke-width="0.12">PSSu E F 4DI</text>
<line x1="465.4" y1="865.8" x2="505" y2="865.8" stroke="#ff33ff" stroke-width="1.3"/>
<rect x="468.9" y="868.4" width="33" height="31" stroke="#222" stroke-width="1.2" fill="none"/>
<rect x="474.9" y="874.1" width="8" height="8" stroke="#222" stroke-width="1.1" fill="none"/>
<rect x="488.4" y="874.1" width="8" height="8" stroke="#222" stroke-width="1.1" fill="none"/>
<text x="478.9" y="879.6" font-size="3" fill="#1f1fff" text-anchor="middle" stroke="#1f1fff" stroke-width="0.12">11</text>
<text x="492.4" y="879.6" font-size="3" fill="#1f1fff" text-anchor="middle" stroke="#1f1fff" stroke-width="0.12">21</text>
<circle cx="478.9" cy="892.2" r="3.5" fill="#111"/>
<circle cx="492.4" cy="892.2" r="3.5" fill="#111"/>
<rect x="468.9" y="900.7" width="33" height="31" stroke="#222" stroke-width="1.2" fill="none"/>
<rect x="474.9" y="906.4" width="8" height="8" stroke="#222" stroke-width="1.1" fill="none"/>
<rect x="488.4" y="906.4" width="8" height="8" stroke="#222" stroke-width="1.1" fill="none"/>
<text x="478.9" y="911.9" font-size="3" fill="#1f1fff" text-anchor="middle" stroke="#1f1fff" stroke-width="0.12">12</text>
<text x="492.4" y="911.9" font-size="3" fill="#1f1fff" text-anchor="middle" stroke="#1f1fff" stroke-width="0.12">22</text>
<circle cx="478.9" cy="924.5" r="3.5" fill="#111"/>
<circle cx="492.4" cy="924.5" r="3.5" fill="#111"/>
<rect x="468.9" y="933" width="33" height="31" stroke="#222" stroke-width="1.2" fill="none"/>
<rect x="474.9" y="938.7" width="8" height="8" stroke="#222" stroke-width="1.1" fill="none"/>
<rect x="488.4" y="938.7" width="8" height="8" stroke="#222" stroke-width="1.1" fill="none"/>
<text x="478.9" y="944.2" font-size="3" fill="#1f1fff" text-anchor="middle" stroke="#1f1fff" stroke-width="0.12">13</text>
<text x="492.4" y="944.2" font-size="3" fill="#1f1fff" text-anchor="middle" stroke="#1f1fff" stroke-width="0.12">23</text>
<circle cx="478.9" cy="956.8" r="3.5" fill="#111"/>
<circle cx="492.4" cy="956.8" r="3.5" fill="#111"/>
<rect x="468.9" y="965.3" width="33" height="31" stroke="#222" stroke-width="1.2" fill="none"/>
<rect x="474.9" y="971" width="8" height="8" stroke="#222" stroke-width="1.1" fill="none"/>
<rect x="488.4" y="971" width="8" height="8" stroke="#222" stroke-width="1.1" fill="none"/>
<text x="478.9" y="976.5" font-size="3" fill="#1f1fff" text-anchor="middle" stroke="#1f1fff" stroke-width="0.12">14</text>
<text x="492.4" y="976.5" font-size="3" fill="#1f1fff" text-anchor="middle" stroke="#1f1fff" stroke-width="0.12">24</text>
<circle cx="478.9" cy="989.1" r="3.5" fill="#111"/>
<circle cx="492.4" cy="989.1" r="3.5" fill="#111"/>
<text x="470.4" y="1007" font-size="3.5" fill="#1f1fff" stroke="#1f1fff" stroke-width="0.12">PSSu BP</text>
<text x="470.4" y="1012" font-size="3.5" fill="#1f1fff" stroke="#1f1fff" stroke-width="0.12">1/8C</text>
<line x1="505" y1="705.2" x2="505" y2="1016.2" stroke="#1a0a1a" stroke-width="1.5"/>
<line x1="505" y1="705.2" x2="544.6" y2="705.2" stroke="#5a205a" stroke-width="1.6"/>
<line x1="505" y1="1016.2" x2="544.6" y2="1016.2" stroke="#222" stroke-width="1.4"/>
<text x="512" y="703" font-size="7" fill="#1f1fff" transform="rotate(-90 512 703)" stroke="#1f1fff" stroke-width="0.12">-A3</text>
<text x="519" y="703" font-size="4.5" fill="#7fae5a" transform="rotate(-90 519 703)" stroke="#7fae5a" stroke-width="0.12">/3.2</text>
<text x="506.5" y="712" font-size="4" fill="#1f1fff" stroke="#1f1fff" stroke-width="0.12">PH_DT</text>
<text x="507" y="716.5" font-size="5.89" font-weight="bold" fill="#000" stroke="#000" stroke-width="0.5" transform="translate(507 716.5) scale(1.2 0.85) translate(-507 -716.5)">PILZ</text>
<circle cx="534.5" cy="709.5" r="0.9" fill="#111"/>
<line x1="534.5" y1="709.5" x2="534.5" y2="720" stroke="#111" stroke-width="1.1"/>
<path d="M528.9 715 A5.6 5.2 0 0 0 540.1 715" stroke="#111" stroke-width="1.1" fill="none"/>
<text x="524.5" y="726" font-size="3" fill="#1f1fff" text-anchor="middle" stroke="#1f1fff" stroke-width="0.12">En</text>
<rect x="522.7" y="726.8" width="3.6" height="3.6" stroke="#1f1fff" stroke-width="1.1" fill="none"/>
<rect x="523.7" y="727.8" width="1.6" height="1.6" fill="#1f1fff"/>
<rect x="507.5" y="739.7" width="34.5" height="96.1" stroke="#1f1fff" stroke-width="1.2" fill="none"/>
<text x="524.5" y="747.5" font-size="5" fill="#1f1fff" text-anchor="middle" stroke="#1f1fff" stroke-width="0.12">312200</text>
<line x1="512" y1="784" x2="537" y2="784" stroke="#1f1fff" stroke-width="1.1"/>
<line x1="512" y1="796" x2="537" y2="796" stroke="#1f1fff" stroke-width="1.1"/>
<line x1="512" y1="808.7" x2="537" y2="808.7" stroke="#1f1fff" stroke-width="1.1"/>
<line x1="512" y1="821" x2="537" y2="821" stroke="#1f1fff" stroke-width="1.1"/>
<line x1="512" y1="833.7" x2="537" y2="833.7" stroke="#1f1fff" stroke-width="1.1"/>
<line x1="524.5" y1="784" x2="524.5" y2="834" stroke="#1f1fff" stroke-width="1.1"/>
<text x="518" y="789.5" font-size="3" fill="#1f1fff" text-anchor="middle" stroke="#1f1fff" stroke-width="0.12">11</text>
<text x="530.5" y="789.5" font-size="3" fill="#1f1fff" text-anchor="middle" stroke="#1f1fff" stroke-width="0.12">21</text>
<text x="518" y="793.5" font-size="3" fill="#1f1fff" text-anchor="middle" stroke="#1f1fff" stroke-width="0.12">I0</text>
<text x="530.5" y="793.5" font-size="3" fill="#1f1fff" text-anchor="middle" stroke="#1f1fff" stroke-width="0.12">I1</text>
<text x="518" y="802" font-size="3" fill="#1f1fff" text-anchor="middle" stroke="#1f1fff" stroke-width="0.12">11</text>
<text x="530.5" y="802" font-size="3" fill="#1f1fff" text-anchor="middle" stroke="#1f1fff" stroke-width="0.12">21</text>
<text x="518" y="806" font-size="3" fill="#1f1fff" text-anchor="middle" stroke="#1f1fff" stroke-width="0.12">I0</text>
<text x="530.5" y="806" font-size="3" fill="#1f1fff" text-anchor="middle" stroke="#1f1fff" stroke-width="0.12">I1</text>
<text x="518" y="814.5" font-size="3" fill="#1f1fff" text-anchor="middle" stroke="#1f1fff" stroke-width="0.12">11</text>
<text x="530.5" y="814.5" font-size="3" fill="#1f1fff" text-anchor="middle" stroke="#1f1fff" stroke-width="0.12">21</text>
<text x="518" y="818.5" font-size="3" fill="#1f1fff" text-anchor="middle" stroke="#1f1fff" stroke-width="0.12">I0</text>
<text x="530.5" y="818.5" font-size="3" fill="#1f1fff" text-anchor="middle" stroke="#1f1fff" stroke-width="0.12">I1</text>
<text x="518" y="827" font-size="3" fill="#1f1fff" text-anchor="middle" stroke="#1f1fff" stroke-width="0.12">11</text>
<text x="530.5" y="827" font-size="3" fill="#1f1fff" text-anchor="middle" stroke="#1f1fff" stroke-width="0.12">21</text>
<text x="518" y="831" font-size="3" fill="#1f1fff" text-anchor="middle" stroke="#1f1fff" stroke-width="0.12">I0</text>
<text x="530.5" y="831" font-size="3" fill="#1f1fff" text-anchor="middle" stroke="#1f1fff" stroke-width="0.12">I1</text>
<rect x="518.2" y="840" width="3.6" height="3.6" stroke="#1f1fff" stroke-width="1.1" fill="none"/>
<rect x="519.2" y="841" width="1.6" height="1.6" fill="#1f1fff"/>
<rect x="526.2" y="840" width="3.6" height="3.6" stroke="#1f1fff" stroke-width="1.1" fill="none"/>
<rect x="527.2" y="841" width="1.6" height="1.6" fill="#1f1fff"/>
<text x="514" y="843" font-size="3" fill="#1f1fff" text-anchor="middle" stroke="#1f1fff" stroke-width="0.12">11</text>
<text x="533" y="843" font-size="3" fill="#1f1fff" text-anchor="middle" stroke="#1f1fff" stroke-width="0.12">21</text>
<rect x="518.2" y="847.5" width="3.6" height="3.6" stroke="#1f1fff" stroke-width="1.1" fill="none"/>
<rect x="519.2" y="848.5" width="1.6" height="1.6" fill="#1f1fff"/>
<rect x="526.2" y="847.5" width="3.6" height="3.6" stroke="#1f1fff" stroke-width="1.1" fill="none"/>
<rect x="527.2" y="848.5" width="1.6" height="1.6" fill="#1f1fff"/>
<text x="514" y="850.5" font-size="3" fill="#1f1fff" text-anchor="middle" stroke="#1f1fff" stroke-width="0.12">11</text>
<text x="533" y="850.5" font-size="3" fill="#1f1fff" text-anchor="middle" stroke="#1f1fff" stroke-width="0.12">21</text>
<text x="507" y="863.5" font-size="4" fill="#1f1fff" stroke="#1f1fff" stroke-width="0.12">PSSu E F 4DI</text>
<line x1="505" y1="865.8" x2="544.6" y2="865.8" stroke="#ff33ff" stroke-width="1.3"/>
<rect x="508.5" y="868.4" width="33" height="31" stroke="#222" stroke-width="1.2" fill="none"/>
<rect x="514.5" y="874.1" width="8" height="8" stroke="#222" stroke-width="1.1" fill="none"/>
<rect x="528" y="874.1" width="8" height="8" stroke="#222" stroke-width="1.1" fill="none"/>
<text x="518.5" y="879.6" font-size="3" fill="#1f1fff" text-anchor="middle" stroke="#1f1fff" stroke-width="0.12">11</text>
<text x="532" y="879.6" font-size="3" fill="#1f1fff" text-anchor="middle" stroke="#1f1fff" stroke-width="0.12">21</text>
<circle cx="518.5" cy="892.2" r="3.5" fill="#111"/>
<circle cx="532" cy="892.2" r="3.5" fill="#111"/>
<rect x="508.5" y="900.7" width="33" height="31" stroke="#222" stroke-width="1.2" fill="none"/>
<rect x="514.5" y="906.4" width="8" height="8" stroke="#222" stroke-width="1.1" fill="none"/>
<rect x="528" y="906.4" width="8" height="8" stroke="#222" stroke-width="1.1" fill="none"/>
<text x="518.5" y="911.9" font-size="3" fill="#1f1fff" text-anchor="middle" stroke="#1f1fff" stroke-width="0.12">12</text>
<text x="532" y="911.9" font-size="3" fill="#1f1fff" text-anchor="middle" stroke="#1f1fff" stroke-width="0.12">22</text>
<circle cx="518.5" cy="924.5" r="3.5" fill="#111"/>
<circle cx="532" cy="924.5" r="3.5" fill="#111"/>
<rect x="508.5" y="933" width="33" height="31" stroke="#222" stroke-width="1.2" fill="none"/>
<rect x="514.5" y="938.7" width="8" height="8" stroke="#222" stroke-width="1.1" fill="none"/>
<rect x="528" y="938.7" width="8" height="8" stroke="#222" stroke-width="1.1" fill="none"/>
<text x="518.5" y="944.2" font-size="3" fill="#1f1fff" text-anchor="middle" stroke="#1f1fff" stroke-width="0.12">13</text>
<text x="532" y="944.2" font-size="3" fill="#1f1fff" text-anchor="middle" stroke="#1f1fff" stroke-width="0.12">23</text>
<circle cx="518.5" cy="956.8" r="3.5" fill="#111"/>
<circle cx="532" cy="956.8" r="3.5" fill="#111"/>
<rect x="508.5" y="965.3" width="33" height="31" stroke="#222" stroke-width="1.2" fill="none"/>
<rect x="514.5" y="971" width="8" height="8" stroke="#222" stroke-width="1.1" fill="none"/>
<rect x="528" y="971" width="8" height="8" stroke="#222" stroke-width="1.1" fill="none"/>
<text x="518.5" y="976.5" font-size="3" fill="#1f1fff" text-anchor="middle" stroke="#1f1fff" stroke-width="0.12">14</text>
<text x="532" y="976.5" font-size="3" fill="#1f1fff" text-anchor="middle" stroke="#1f1fff" stroke-width="0.12">24</text>
<circle cx="518.5" cy="989.1" r="3.5" fill="#111"/>
<circle cx="532" cy="989.1" r="3.5" fill="#111"/>
<text x="510" y="1007" font-size="3.5" fill="#1f1fff" stroke="#1f1fff" stroke-width="0.12">PSSu BP</text>
<text x="510" y="1012" font-size="3.5" fill="#1f1fff" stroke="#1f1fff" stroke-width="0.12">1/8C</text>
<line x1="544.7" y1="705.2" x2="544.7" y2="1016.2" stroke="#1a0a1a" stroke-width="1.5"/>
<line x1="544.7" y1="705.2" x2="584.3" y2="705.2" stroke="#5a205a" stroke-width="1.6"/>
<line x1="544.7" y1="1016.2" x2="584.3" y2="1016.2" stroke="#222" stroke-width="1.4"/>
<text x="551.7" y="703" font-size="7" fill="#1f1fff" transform="rotate(-90 551.7 703)" stroke="#1f1fff" stroke-width="0.12">-A4</text>
<text x="558.7" y="703" font-size="4.5" fill="#7fae5a" transform="rotate(-90 558.7 703)" stroke="#7fae5a" stroke-width="0.12">/3.4</text>
<text x="546.2" y="712" font-size="4" fill="#1f1fff" stroke="#1f1fff" stroke-width="0.12">PH_DT</text>
<text x="546.7" y="716.5" font-size="5.89" font-weight="bold" fill="#000" stroke="#000" stroke-width="0.5" transform="translate(546.7 716.5) scale(1.2 0.85) translate(-546.7 -716.5)">PILZ</text>
<circle cx="574.2" cy="709.5" r="0.9" fill="#111"/>
<line x1="574.2" y1="709.5" x2="574.2" y2="720" stroke="#111" stroke-width="1.1"/>
<path d="M568.6 715 A5.6 5.2 0 0 0 579.8 715" stroke="#111" stroke-width="1.1" fill="none"/>
<text x="564.2" y="726" font-size="3" fill="#1f1fff" text-anchor="middle" stroke="#1f1fff" stroke-width="0.12">En</text>
<rect x="562.4" y="726.8" width="3.6" height="3.6" stroke="#1f1fff" stroke-width="1.1" fill="none"/>
<rect x="563.4" y="727.8" width="1.6" height="1.6" fill="#1f1fff"/>
<rect x="547.2" y="739.7" width="34.5" height="96.1" stroke="#1f1fff" stroke-width="1.2" fill="none"/>
<text x="564.2" y="747.5" font-size="5" fill="#1f1fff" text-anchor="middle" stroke="#1f1fff" stroke-width="0.12">312200</text>
<line x1="551.7" y1="784" x2="576.7" y2="784" stroke="#1f1fff" stroke-width="1.1"/>
<line x1="551.7" y1="796" x2="576.7" y2="796" stroke="#1f1fff" stroke-width="1.1"/>
<line x1="551.7" y1="808.7" x2="576.7" y2="808.7" stroke="#1f1fff" stroke-width="1.1"/>
<line x1="551.7" y1="821" x2="576.7" y2="821" stroke="#1f1fff" stroke-width="1.1"/>
<line x1="551.7" y1="833.7" x2="576.7" y2="833.7" stroke="#1f1fff" stroke-width="1.1"/>
<line x1="564.2" y1="784" x2="564.2" y2="834" stroke="#1f1fff" stroke-width="1.1"/>
<text x="557.7" y="789.5" font-size="3" fill="#1f1fff" text-anchor="middle" stroke="#1f1fff" stroke-width="0.12">11</text>
<text x="570.2" y="789.5" font-size="3" fill="#1f1fff" text-anchor="middle" stroke="#1f1fff" stroke-width="0.12">21</text>
<text x="557.7" y="793.5" font-size="3" fill="#1f1fff" text-anchor="middle" stroke="#1f1fff" stroke-width="0.12">I0</text>
<text x="570.2" y="793.5" font-size="3" fill="#1f1fff" text-anchor="middle" stroke="#1f1fff" stroke-width="0.12">I1</text>
<text x="557.7" y="802" font-size="3" fill="#1f1fff" text-anchor="middle" stroke="#1f1fff" stroke-width="0.12">11</text>
<text x="570.2" y="802" font-size="3" fill="#1f1fff" text-anchor="middle" stroke="#1f1fff" stroke-width="0.12">21</text>
<text x="557.7" y="806" font-size="3" fill="#1f1fff" text-anchor="middle" stroke="#1f1fff" stroke-width="0.12">I0</text>
<text x="570.2" y="806" font-size="3" fill="#1f1fff" text-anchor="middle" stroke="#1f1fff" stroke-width="0.12">I1</text>
<text x="557.7" y="814.5" font-size="3" fill="#1f1fff" text-anchor="middle" stroke="#1f1fff" stroke-width="0.12">11</text>
<text x="570.2" y="814.5" font-size="3" fill="#1f1fff" text-anchor="middle" stroke="#1f1fff" stroke-width="0.12">21</text>
<text x="557.7" y="818.5" font-size="3" fill="#1f1fff" text-anchor="middle" stroke="#1f1fff" stroke-width="0.12">I0</text>
<text x="570.2" y="818.5" font-size="3" fill="#1f1fff" text-anchor="middle" stroke="#1f1fff" stroke-width="0.12">I1</text>
<text x="557.7" y="827" font-size="3" fill="#1f1fff" text-anchor="middle" stroke="#1f1fff" stroke-width="0.12">11</text>
<text x="570.2" y="827" font-size="3" fill="#1f1fff" text-anchor="middle" stroke="#1f1fff" stroke-width="0.12">21</text>
<text x="557.7" y="831" font-size="3" fill="#1f1fff" text-anchor="middle" stroke="#1f1fff" stroke-width="0.12">I0</text>
<text x="570.2" y="831" font-size="3" fill="#1f1fff" text-anchor="middle" stroke="#1f1fff" stroke-width="0.12">I1</text>
<rect x="557.9" y="840" width="3.6" height="3.6" stroke="#1f1fff" stroke-width="1.1" fill="none"/>
<rect x="558.9" y="841" width="1.6" height="1.6" fill="#1f1fff"/>
<rect x="565.9" y="840" width="3.6" height="3.6" stroke="#1f1fff" stroke-width="1.1" fill="none"/>
<rect x="566.9" y="841" width="1.6" height="1.6" fill="#1f1fff"/>
<text x="553.7" y="843" font-size="3" fill="#1f1fff" text-anchor="middle" stroke="#1f1fff" stroke-width="0.12">11</text>
<text x="572.7" y="843" font-size="3" fill="#1f1fff" text-anchor="middle" stroke="#1f1fff" stroke-width="0.12">21</text>
<rect x="557.9" y="847.5" width="3.6" height="3.6" stroke="#1f1fff" stroke-width="1.1" fill="none"/>
<rect x="558.9" y="848.5" width="1.6" height="1.6" fill="#1f1fff"/>
<rect x="565.9" y="847.5" width="3.6" height="3.6" stroke="#1f1fff" stroke-width="1.1" fill="none"/>
<rect x="566.9" y="848.5" width="1.6" height="1.6" fill="#1f1fff"/>
<text x="553.7" y="850.5" font-size="3" fill="#1f1fff" text-anchor="middle" stroke="#1f1fff" stroke-width="0.12">11</text>
<text x="572.7" y="850.5" font-size="3" fill="#1f1fff" text-anchor="middle" stroke="#1f1fff" stroke-width="0.12">21</text>
<text x="546.7" y="863.5" font-size="4" fill="#1f1fff" stroke="#1f1fff" stroke-width="0.12">PSSu E F 4DI</text>
<line x1="544.7" y1="865.8" x2="584.3" y2="865.8" stroke="#ff33ff" stroke-width="1.3"/>
<rect x="548.2" y="868.4" width="33" height="31" stroke="#222" stroke-width="1.2" fill="none"/>
<rect x="554.2" y="874.1" width="8" height="8" stroke="#222" stroke-width="1.1" fill="none"/>
<rect x="567.7" y="874.1" width="8" height="8" stroke="#222" stroke-width="1.1" fill="none"/>
<text x="558.2" y="879.6" font-size="3" fill="#1f1fff" text-anchor="middle" stroke="#1f1fff" stroke-width="0.12">11</text>
<text x="571.7" y="879.6" font-size="3" fill="#1f1fff" text-anchor="middle" stroke="#1f1fff" stroke-width="0.12">21</text>
<circle cx="558.2" cy="892.2" r="3.5" fill="#111"/>
<circle cx="571.7" cy="892.2" r="3.5" fill="#111"/>
<rect x="548.2" y="900.7" width="33" height="31" stroke="#222" stroke-width="1.2" fill="none"/>
<rect x="554.2" y="906.4" width="8" height="8" stroke="#222" stroke-width="1.1" fill="none"/>
<rect x="567.7" y="906.4" width="8" height="8" stroke="#222" stroke-width="1.1" fill="none"/>
<text x="558.2" y="911.9" font-size="3" fill="#1f1fff" text-anchor="middle" stroke="#1f1fff" stroke-width="0.12">12</text>
<text x="571.7" y="911.9" font-size="3" fill="#1f1fff" text-anchor="middle" stroke="#1f1fff" stroke-width="0.12">22</text>
<circle cx="558.2" cy="924.5" r="3.5" fill="#111"/>
<circle cx="571.7" cy="924.5" r="3.5" fill="#111"/>
<rect x="548.2" y="933" width="33" height="31" stroke="#222" stroke-width="1.2" fill="none"/>
<rect x="554.2" y="938.7" width="8" height="8" stroke="#222" stroke-width="1.1" fill="none"/>
<rect x="567.7" y="938.7" width="8" height="8" stroke="#222" stroke-width="1.1" fill="none"/>
<text x="558.2" y="944.2" font-size="3" fill="#1f1fff" text-anchor="middle" stroke="#1f1fff" stroke-width="0.12">13</text>
<text x="571.7" y="944.2" font-size="3" fill="#1f1fff" text-anchor="middle" stroke="#1f1fff" stroke-width="0.12">23</text>
<circle cx="558.2" cy="956.8" r="3.5" fill="#111"/>
<circle cx="571.7" cy="956.8" r="3.5" fill="#111"/>
<rect x="548.2" y="965.3" width="33" height="31" stroke="#222" stroke-width="1.2" fill="none"/>
<rect x="554.2" y="971" width="8" height="8" stroke="#222" stroke-width="1.1" fill="none"/>
<rect x="567.7" y="971" width="8" height="8" stroke="#222" stroke-width="1.1" fill="none"/>
<text x="558.2" y="976.5" font-size="3" fill="#1f1fff" text-anchor="middle" stroke="#1f1fff" stroke-width="0.12">14</text>
<text x="571.7" y="976.5" font-size="3" fill="#1f1fff" text-anchor="middle" stroke="#1f1fff" stroke-width="0.12">24</text>
<circle cx="558.2" cy="989.1" r="3.5" fill="#111"/>
<circle cx="571.7" cy="989.1" r="3.5" fill="#111"/>
<text x="549.7" y="1007" font-size="3.5" fill="#1f1fff" stroke="#1f1fff" stroke-width="0.12">PSSu BP</text>
<text x="549.7" y="1012" font-size="3.5" fill="#1f1fff" stroke="#1f1fff" stroke-width="0.12">1/8C</text>
<line x1="584" y1="705.2" x2="584" y2="1016.2" stroke="#1a0a1a" stroke-width="1.5"/>
<line x1="584" y1="705.2" x2="623.6" y2="705.2" stroke="#5a205a" stroke-width="1.6"/>
<line x1="584" y1="1016.2" x2="623.6" y2="1016.2" stroke="#222" stroke-width="1.4"/>
<text x="591" y="703" font-size="7" fill="#1f1fff" transform="rotate(-90 591 703)" stroke="#1f1fff" stroke-width="0.12">-A5</text>
<text x="598" y="703" font-size="4.5" fill="#7fae5a" transform="rotate(-90 598 703)" stroke="#7fae5a" stroke-width="0.12">/3.6</text>
<text x="585.5" y="712" font-size="4" fill="#1f1fff" stroke="#1f1fff" stroke-width="0.12">PH_DT</text>
<text x="586" y="716.5" font-size="5.89" font-weight="bold" fill="#000" stroke="#000" stroke-width="0.5" transform="translate(586 716.5) scale(1.2 0.85) translate(-586 -716.5)">PILZ</text>
<circle cx="613.5" cy="709.5" r="0.9" fill="#111"/>
<line x1="613.5" y1="709.5" x2="613.5" y2="720" stroke="#111" stroke-width="1.1"/>
<path d="M607.9 715 A5.6 5.2 0 0 0 619.1 715" stroke="#111" stroke-width="1.1" fill="none"/>
<text x="603.5" y="726" font-size="3" fill="#1f1fff" text-anchor="middle" stroke="#1f1fff" stroke-width="0.12">En</text>
<rect x="601.7" y="726.8" width="3.6" height="3.6" stroke="#1f1fff" stroke-width="1.1" fill="none"/>
<rect x="602.7" y="727.8" width="1.6" height="1.6" fill="#1f1fff"/>
<rect x="586.5" y="739.7" width="34.5" height="96.1" stroke="#1f1fff" stroke-width="1.2" fill="none"/>
<text x="603.5" y="747.5" font-size="5" fill="#1f1fff" text-anchor="middle" stroke="#1f1fff" stroke-width="0.12">312200</text>
<line x1="591" y1="784" x2="616" y2="784" stroke="#1f1fff" stroke-width="1.1"/>
<line x1="591" y1="796" x2="616" y2="796" stroke="#1f1fff" stroke-width="1.1"/>
<line x1="591" y1="808.7" x2="616" y2="808.7" stroke="#1f1fff" stroke-width="1.1"/>
<line x1="591" y1="821" x2="616" y2="821" stroke="#1f1fff" stroke-width="1.1"/>
<line x1="591" y1="833.7" x2="616" y2="833.7" stroke="#1f1fff" stroke-width="1.1"/>
<line x1="603.5" y1="784" x2="603.5" y2="834" stroke="#1f1fff" stroke-width="1.1"/>
<text x="597" y="789.5" font-size="3" fill="#1f1fff" text-anchor="middle" stroke="#1f1fff" stroke-width="0.12">11</text>
<text x="609.5" y="789.5" font-size="3" fill="#1f1fff" text-anchor="middle" stroke="#1f1fff" stroke-width="0.12">21</text>
<text x="597" y="793.5" font-size="3" fill="#1f1fff" text-anchor="middle" stroke="#1f1fff" stroke-width="0.12">I0</text>
<text x="609.5" y="793.5" font-size="3" fill="#1f1fff" text-anchor="middle" stroke="#1f1fff" stroke-width="0.12">I1</text>
<text x="597" y="802" font-size="3" fill="#1f1fff" text-anchor="middle" stroke="#1f1fff" stroke-width="0.12">11</text>
<text x="609.5" y="802" font-size="3" fill="#1f1fff" text-anchor="middle" stroke="#1f1fff" stroke-width="0.12">21</text>
<text x="597" y="806" font-size="3" fill="#1f1fff" text-anchor="middle" stroke="#1f1fff" stroke-width="0.12">I0</text>
<text x="609.5" y="806" font-size="3" fill="#1f1fff" text-anchor="middle" stroke="#1f1fff" stroke-width="0.12">I1</text>
<text x="597" y="814.5" font-size="3" fill="#1f1fff" text-anchor="middle" stroke="#1f1fff" stroke-width="0.12">11</text>
<text x="609.5" y="814.5" font-size="3" fill="#1f1fff" text-anchor="middle" stroke="#1f1fff" stroke-width="0.12">21</text>
<text x="597" y="818.5" font-size="3" fill="#1f1fff" text-anchor="middle" stroke="#1f1fff" stroke-width="0.12">I0</text>
<text x="609.5" y="818.5" font-size="3" fill="#1f1fff" text-anchor="middle" stroke="#1f1fff" stroke-width="0.12">I1</text>
<text x="597" y="827" font-size="3" fill="#1f1fff" text-anchor="middle" stroke="#1f1fff" stroke-width="0.12">11</text>
<text x="609.5" y="827" font-size="3" fill="#1f1fff" text-anchor="middle" stroke="#1f1fff" stroke-width="0.12">21</text>
<text x="597" y="831" font-size="3" fill="#1f1fff" text-anchor="middle" stroke="#1f1fff" stroke-width="0.12">I0</text>
<text x="609.5" y="831" font-size="3" fill="#1f1fff" text-anchor="middle" stroke="#1f1fff" stroke-width="0.12">I1</text>
<rect x="597.2" y="840" width="3.6" height="3.6" stroke="#1f1fff" stroke-width="1.1" fill="none"/>
<rect x="598.2" y="841" width="1.6" height="1.6" fill="#1f1fff"/>
<rect x="605.2" y="840" width="3.6" height="3.6" stroke="#1f1fff" stroke-width="1.1" fill="none"/>
<rect x="606.2" y="841" width="1.6" height="1.6" fill="#1f1fff"/>
<text x="593" y="843" font-size="3" fill="#1f1fff" text-anchor="middle" stroke="#1f1fff" stroke-width="0.12">11</text>
<text x="612" y="843" font-size="3" fill="#1f1fff" text-anchor="middle" stroke="#1f1fff" stroke-width="0.12">21</text>
<rect x="597.2" y="847.5" width="3.6" height="3.6" stroke="#1f1fff" stroke-width="1.1" fill="none"/>
<rect x="598.2" y="848.5" width="1.6" height="1.6" fill="#1f1fff"/>
<rect x="605.2" y="847.5" width="3.6" height="3.6" stroke="#1f1fff" stroke-width="1.1" fill="none"/>
<rect x="606.2" y="848.5" width="1.6" height="1.6" fill="#1f1fff"/>
<text x="593" y="850.5" font-size="3" fill="#1f1fff" text-anchor="middle" stroke="#1f1fff" stroke-width="0.12">11</text>
<text x="612" y="850.5" font-size="3" fill="#1f1fff" text-anchor="middle" stroke="#1f1fff" stroke-width="0.12">21</text>
<text x="586" y="863.5" font-size="4" fill="#1f1fff" stroke="#1f1fff" stroke-width="0.12">PSSu E F 4DI</text>
<line x1="584" y1="865.8" x2="623.6" y2="865.8" stroke="#ff33ff" stroke-width="1.3"/>
<rect x="587.5" y="868.4" width="33" height="31" stroke="#222" stroke-width="1.2" fill="none"/>
<rect x="593.5" y="874.1" width="8" height="8" stroke="#222" stroke-width="1.1" fill="none"/>
<rect x="607" y="874.1" width="8" height="8" stroke="#222" stroke-width="1.1" fill="none"/>
<text x="597.5" y="879.6" font-size="3" fill="#1f1fff" text-anchor="middle" stroke="#1f1fff" stroke-width="0.12">11</text>
<text x="611" y="879.6" font-size="3" fill="#1f1fff" text-anchor="middle" stroke="#1f1fff" stroke-width="0.12">21</text>
<circle cx="597.5" cy="892.2" r="3.5" fill="#111"/>
<circle cx="611" cy="892.2" r="3.5" fill="#111"/>
<rect x="587.5" y="900.7" width="33" height="31" stroke="#222" stroke-width="1.2" fill="none"/>
<rect x="593.5" y="906.4" width="8" height="8" stroke="#222" stroke-width="1.1" fill="none"/>
<rect x="607" y="906.4" width="8" height="8" stroke="#222" stroke-width="1.1" fill="none"/>
<text x="597.5" y="911.9" font-size="3" fill="#1f1fff" text-anchor="middle" stroke="#1f1fff" stroke-width="0.12">12</text>
<text x="611" y="911.9" font-size="3" fill="#1f1fff" text-anchor="middle" stroke="#1f1fff" stroke-width="0.12">22</text>
<circle cx="597.5" cy="924.5" r="3.5" fill="#111"/>
<circle cx="611" cy="924.5" r="3.5" fill="#111"/>
<rect x="587.5" y="933" width="33" height="31" stroke="#222" stroke-width="1.2" fill="none"/>
<rect x="593.5" y="938.7" width="8" height="8" stroke="#222" stroke-width="1.1" fill="none"/>
<rect x="607" y="938.7" width="8" height="8" stroke="#222" stroke-width="1.1" fill="none"/>
<text x="597.5" y="944.2" font-size="3" fill="#1f1fff" text-anchor="middle" stroke="#1f1fff" stroke-width="0.12">13</text>
<text x="611" y="944.2" font-size="3" fill="#1f1fff" text-anchor="middle" stroke="#1f1fff" stroke-width="0.12">23</text>
<circle cx="597.5" cy="956.8" r="3.5" fill="#111"/>
<circle cx="611" cy="956.8" r="3.5" fill="#111"/>
<rect x="587.5" y="965.3" width="33" height="31" stroke="#222" stroke-width="1.2" fill="none"/>
<rect x="593.5" y="971" width="8" height="8" stroke="#222" stroke-width="1.1" fill="none"/>
<rect x="607" y="971" width="8" height="8" stroke="#222" stroke-width="1.1" fill="none"/>
<text x="597.5" y="976.5" font-size="3" fill="#1f1fff" text-anchor="middle" stroke="#1f1fff" stroke-width="0.12">14</text>
<text x="611" y="976.5" font-size="3" fill="#1f1fff" text-anchor="middle" stroke="#1f1fff" stroke-width="0.12">24</text>
<circle cx="597.5" cy="989.1" r="3.5" fill="#111"/>
<circle cx="611" cy="989.1" r="3.5" fill="#111"/>
<text x="589" y="1007" font-size="3.5" fill="#1f1fff" stroke="#1f1fff" stroke-width="0.12">PSSu BP</text>
<text x="589" y="1012" font-size="3.5" fill="#1f1fff" stroke="#1f1fff" stroke-width="0.12">1/8C</text>
<line x1="623.7" y1="705.2" x2="623.7" y2="1016.2" stroke="#1a0a1a" stroke-width="1.5"/>
<line x1="623.7" y1="705.2" x2="663.3" y2="705.2" stroke="#5a205a" stroke-width="1.6"/>
<line x1="623.7" y1="1016.2" x2="663.3" y2="1016.2" stroke="#222" stroke-width="1.4"/>
<text x="630.7" y="703" font-size="7" fill="#1f1fff" transform="rotate(-90 630.7 703)" stroke="#1f1fff" stroke-width="0.12">-A6</text>
<text x="637.7" y="703" font-size="4.5" fill="#7fae5a" transform="rotate(-90 637.7 703)" stroke="#7fae5a" stroke-width="0.12">/3.7</text>
<text x="625.2" y="712" font-size="4" fill="#1f1fff" stroke="#1f1fff" stroke-width="0.12">PH_DT</text>
<text x="625.7" y="716.5" font-size="5.89" font-weight="bold" fill="#000" stroke="#000" stroke-width="0.5" transform="translate(625.7 716.5) scale(1.2 0.85) translate(-625.7 -716.5)">PILZ</text>
<circle cx="653.2" cy="709.5" r="0.9" fill="#111"/>
<line x1="653.2" y1="709.5" x2="653.2" y2="720" stroke="#111" stroke-width="1.1"/>
<path d="M647.6 715 A5.6 5.2 0 0 0 658.8 715" stroke="#111" stroke-width="1.1" fill="none"/>
<text x="643.2" y="726" font-size="3" fill="#1f1fff" text-anchor="middle" stroke="#1f1fff" stroke-width="0.12">En</text>
<rect x="641.4" y="726.8" width="3.6" height="3.6" stroke="#1f1fff" stroke-width="1.1" fill="none"/>
<rect x="642.4" y="727.8" width="1.6" height="1.6" fill="#1f1fff"/>
<rect x="626.2" y="739.7" width="34.5" height="96.1" stroke="#1f1fff" stroke-width="1.2" fill="none"/>
<text x="643.2" y="747.5" font-size="5" fill="#1f1fff" text-anchor="middle" stroke="#1f1fff" stroke-width="0.12">312200</text>
<line x1="630.7" y1="784" x2="655.7" y2="784" stroke="#1f1fff" stroke-width="1.1"/>
<line x1="630.7" y1="796" x2="655.7" y2="796" stroke="#1f1fff" stroke-width="1.1"/>
<line x1="630.7" y1="808.7" x2="655.7" y2="808.7" stroke="#1f1fff" stroke-width="1.1"/>
<line x1="630.7" y1="821" x2="655.7" y2="821" stroke="#1f1fff" stroke-width="1.1"/>
<line x1="630.7" y1="833.7" x2="655.7" y2="833.7" stroke="#1f1fff" stroke-width="1.1"/>
<line x1="643.2" y1="784" x2="643.2" y2="834" stroke="#1f1fff" stroke-width="1.1"/>
<text x="636.7" y="789.5" font-size="3" fill="#1f1fff" text-anchor="middle" stroke="#1f1fff" stroke-width="0.12">11</text>
<text x="649.2" y="789.5" font-size="3" fill="#1f1fff" text-anchor="middle" stroke="#1f1fff" stroke-width="0.12">21</text>
<text x="636.7" y="793.5" font-size="3" fill="#1f1fff" text-anchor="middle" stroke="#1f1fff" stroke-width="0.12">I0</text>
<text x="649.2" y="793.5" font-size="3" fill="#1f1fff" text-anchor="middle" stroke="#1f1fff" stroke-width="0.12">I1</text>
<text x="636.7" y="802" font-size="3" fill="#1f1fff" text-anchor="middle" stroke="#1f1fff" stroke-width="0.12">11</text>
<text x="649.2" y="802" font-size="3" fill="#1f1fff" text-anchor="middle" stroke="#1f1fff" stroke-width="0.12">21</text>
<text x="636.7" y="806" font-size="3" fill="#1f1fff" text-anchor="middle" stroke="#1f1fff" stroke-width="0.12">I0</text>
<text x="649.2" y="806" font-size="3" fill="#1f1fff" text-anchor="middle" stroke="#1f1fff" stroke-width="0.12">I1</text>
<text x="636.7" y="814.5" font-size="3" fill="#1f1fff" text-anchor="middle" stroke="#1f1fff" stroke-width="0.12">11</text>
<text x="649.2" y="814.5" font-size="3" fill="#1f1fff" text-anchor="middle" stroke="#1f1fff" stroke-width="0.12">21</text>
<text x="636.7" y="818.5" font-size="3" fill="#1f1fff" text-anchor="middle" stroke="#1f1fff" stroke-width="0.12">I0</text>
<text x="649.2" y="818.5" font-size="3" fill="#1f1fff" text-anchor="middle" stroke="#1f1fff" stroke-width="0.12">I1</text>
<text x="636.7" y="827" font-size="3" fill="#1f1fff" text-anchor="middle" stroke="#1f1fff" stroke-width="0.12">11</text>
<text x="649.2" y="827" font-size="3" fill="#1f1fff" text-anchor="middle" stroke="#1f1fff" stroke-width="0.12">21</text>
<text x="636.7" y="831" font-size="3" fill="#1f1fff" text-anchor="middle" stroke="#1f1fff" stroke-width="0.12">I0</text>
<text x="649.2" y="831" font-size="3" fill="#1f1fff" text-anchor="middle" stroke="#1f1fff" stroke-width="0.12">I1</text>
<rect x="636.9" y="840" width="3.6" height="3.6" stroke="#1f1fff" stroke-width="1.1" fill="none"/>
<rect x="637.9" y="841" width="1.6" height="1.6" fill="#1f1fff"/>
<rect x="644.9" y="840" width="3.6" height="3.6" stroke="#1f1fff" stroke-width="1.1" fill="none"/>
<rect x="645.9" y="841" width="1.6" height="1.6" fill="#1f1fff"/>
<text x="632.7" y="843" font-size="3" fill="#1f1fff" text-anchor="middle" stroke="#1f1fff" stroke-width="0.12">11</text>
<text x="651.7" y="843" font-size="3" fill="#1f1fff" text-anchor="middle" stroke="#1f1fff" stroke-width="0.12">21</text>
<rect x="636.9" y="847.5" width="3.6" height="3.6" stroke="#1f1fff" stroke-width="1.1" fill="none"/>
<rect x="637.9" y="848.5" width="1.6" height="1.6" fill="#1f1fff"/>
<rect x="644.9" y="847.5" width="3.6" height="3.6" stroke="#1f1fff" stroke-width="1.1" fill="none"/>
<rect x="645.9" y="848.5" width="1.6" height="1.6" fill="#1f1fff"/>
<text x="632.7" y="850.5" font-size="3" fill="#1f1fff" text-anchor="middle" stroke="#1f1fff" stroke-width="0.12">11</text>
<text x="651.7" y="850.5" font-size="3" fill="#1f1fff" text-anchor="middle" stroke="#1f1fff" stroke-width="0.12">21</text>
<text x="625.7" y="863.5" font-size="4" fill="#1f1fff" stroke="#1f1fff" stroke-width="0.12">PSSu E F 4DI</text>
<line x1="623.7" y1="865.8" x2="663.3" y2="865.8" stroke="#ff33ff" stroke-width="1.3"/>
<rect x="627.2" y="868.4" width="33" height="31" stroke="#222" stroke-width="1.2" fill="none"/>
<rect x="633.2" y="874.1" width="8" height="8" stroke="#222" stroke-width="1.1" fill="none"/>
<rect x="646.7" y="874.1" width="8" height="8" stroke="#222" stroke-width="1.1" fill="none"/>
<text x="637.2" y="879.6" font-size="3" fill="#1f1fff" text-anchor="middle" stroke="#1f1fff" stroke-width="0.12">11</text>
<text x="650.7" y="879.6" font-size="3" fill="#1f1fff" text-anchor="middle" stroke="#1f1fff" stroke-width="0.12">21</text>
<circle cx="637.2" cy="892.2" r="3.5" fill="#111"/>
<circle cx="650.7" cy="892.2" r="3.5" fill="#111"/>
<rect x="627.2" y="900.7" width="33" height="31" stroke="#222" stroke-width="1.2" fill="none"/>
<rect x="633.2" y="906.4" width="8" height="8" stroke="#222" stroke-width="1.1" fill="none"/>
<rect x="646.7" y="906.4" width="8" height="8" stroke="#222" stroke-width="1.1" fill="none"/>
<text x="637.2" y="911.9" font-size="3" fill="#1f1fff" text-anchor="middle" stroke="#1f1fff" stroke-width="0.12">12</text>
<text x="650.7" y="911.9" font-size="3" fill="#1f1fff" text-anchor="middle" stroke="#1f1fff" stroke-width="0.12">22</text>
<circle cx="637.2" cy="924.5" r="3.5" fill="#111"/>
<circle cx="650.7" cy="924.5" r="3.5" fill="#111"/>
<rect x="627.2" y="933" width="33" height="31" stroke="#222" stroke-width="1.2" fill="none"/>
<rect x="633.2" y="938.7" width="8" height="8" stroke="#222" stroke-width="1.1" fill="none"/>
<rect x="646.7" y="938.7" width="8" height="8" stroke="#222" stroke-width="1.1" fill="none"/>
<text x="637.2" y="944.2" font-size="3" fill="#1f1fff" text-anchor="middle" stroke="#1f1fff" stroke-width="0.12">13</text>
<text x="650.7" y="944.2" font-size="3" fill="#1f1fff" text-anchor="middle" stroke="#1f1fff" stroke-width="0.12">23</text>
<circle cx="637.2" cy="956.8" r="3.5" fill="#111"/>
<circle cx="650.7" cy="956.8" r="3.5" fill="#111"/>
<rect x="627.2" y="965.3" width="33" height="31" stroke="#222" stroke-width="1.2" fill="none"/>
<rect x="633.2" y="971" width="8" height="8" stroke="#222" stroke-width="1.1" fill="none"/>
<rect x="646.7" y="971" width="8" height="8" stroke="#222" stroke-width="1.1" fill="none"/>
<text x="637.2" y="976.5" font-size="3" fill="#1f1fff" text-anchor="middle" stroke="#1f1fff" stroke-width="0.12">14</text>
<text x="650.7" y="976.5" font-size="3" fill="#1f1fff" text-anchor="middle" stroke="#1f1fff" stroke-width="0.12">24</text>
<circle cx="637.2" cy="989.1" r="3.5" fill="#111"/>
<circle cx="650.7" cy="989.1" r="3.5" fill="#111"/>
<text x="628.7" y="1007" font-size="3.5" fill="#1f1fff" stroke="#1f1fff" stroke-width="0.12">PSSu BP</text>
<text x="628.7" y="1012" font-size="3.5" fill="#1f1fff" stroke="#1f1fff" stroke-width="0.12">1/8C</text>
<line x1="663.3" y1="705.2" x2="663.3" y2="1016.2" stroke="#1a0a1a" stroke-width="1.5"/>
<line x1="663.3" y1="705.2" x2="702.9" y2="705.2" stroke="#5a205a" stroke-width="1.6"/>
<line x1="663.3" y1="1016.2" x2="702.9" y2="1016.2" stroke="#222" stroke-width="1.4"/>
<text x="670.3" y="703" font-size="7" fill="#1f1fff" transform="rotate(-90 670.3 703)" stroke="#1f1fff" stroke-width="0.12">-A7</text>
<text x="677.3" y="703" font-size="4.5" fill="#7fae5a" transform="rotate(-90 677.3 703)" stroke="#7fae5a" stroke-width="0.12">/4.0</text>
<text x="664.8" y="712" font-size="4" fill="#1f1fff" stroke="#1f1fff" stroke-width="0.12">PH_DT</text>
<text x="665.3" y="716.5" font-size="5.89" font-weight="bold" fill="#000" stroke="#000" stroke-width="0.5" transform="translate(665.3 716.5) scale(1.2 0.85) translate(-665.3 -716.5)">PILZ</text>
<circle cx="692.8" cy="709.5" r="0.9" fill="#111"/>
<line x1="692.8" y1="709.5" x2="692.8" y2="720" stroke="#111" stroke-width="1.1"/>
<path d="M687.2 715 A5.6 5.2 0 0 0 698.4 715" stroke="#111" stroke-width="1.1" fill="none"/>
<text x="682.8" y="726" font-size="3" fill="#1f1fff" text-anchor="middle" stroke="#1f1fff" stroke-width="0.12">En</text>
<rect x="681" y="726.8" width="3.6" height="3.6" stroke="#1f1fff" stroke-width="1.1" fill="none"/>
<rect x="682" y="727.8" width="1.6" height="1.6" fill="#1f1fff"/>
<rect x="665.8" y="739.7" width="34.5" height="96.1" stroke="#1f1fff" stroke-width="1.2" fill="none"/>
<text x="682.8" y="747.5" font-size="5" fill="#1f1fff" text-anchor="middle" stroke="#1f1fff" stroke-width="0.12">312200</text>
<line x1="670.3" y1="784" x2="695.3" y2="784" stroke="#1f1fff" stroke-width="1.1"/>
<line x1="670.3" y1="796" x2="695.3" y2="796" stroke="#1f1fff" stroke-width="1.1"/>
<line x1="670.3" y1="808.7" x2="695.3" y2="808.7" stroke="#1f1fff" stroke-width="1.1"/>
<line x1="670.3" y1="821" x2="695.3" y2="821" stroke="#1f1fff" stroke-width="1.1"/>
<line x1="670.3" y1="833.7" x2="695.3" y2="833.7" stroke="#1f1fff" stroke-width="1.1"/>
<line x1="682.8" y1="784" x2="682.8" y2="834" stroke="#1f1fff" stroke-width="1.1"/>
<text x="676.3" y="789.5" font-size="3" fill="#1f1fff" text-anchor="middle" stroke="#1f1fff" stroke-width="0.12">11</text>
<text x="688.8" y="789.5" font-size="3" fill="#1f1fff" text-anchor="middle" stroke="#1f1fff" stroke-width="0.12">21</text>
<text x="676.3" y="793.5" font-size="3" fill="#1f1fff" text-anchor="middle" stroke="#1f1fff" stroke-width="0.12">I0</text>
<text x="688.8" y="793.5" font-size="3" fill="#1f1fff" text-anchor="middle" stroke="#1f1fff" stroke-width="0.12">I1</text>
<text x="676.3" y="802" font-size="3" fill="#1f1fff" text-anchor="middle" stroke="#1f1fff" stroke-width="0.12">11</text>
<text x="688.8" y="802" font-size="3" fill="#1f1fff" text-anchor="middle" stroke="#1f1fff" stroke-width="0.12">21</text>
<text x="676.3" y="806" font-size="3" fill="#1f1fff" text-anchor="middle" stroke="#1f1fff" stroke-width="0.12">I0</text>
<text x="688.8" y="806" font-size="3" fill="#1f1fff" text-anchor="middle" stroke="#1f1fff" stroke-width="0.12">I1</text>
<text x="676.3" y="814.5" font-size="3" fill="#1f1fff" text-anchor="middle" stroke="#1f1fff" stroke-width="0.12">11</text>
<text x="688.8" y="814.5" font-size="3" fill="#1f1fff" text-anchor="middle" stroke="#1f1fff" stroke-width="0.12">21</text>
<text x="676.3" y="818.5" font-size="3" fill="#1f1fff" text-anchor="middle" stroke="#1f1fff" stroke-width="0.12">I0</text>
<text x="688.8" y="818.5" font-size="3" fill="#1f1fff" text-anchor="middle" stroke="#1f1fff" stroke-width="0.12">I1</text>
<text x="676.3" y="827" font-size="3" fill="#1f1fff" text-anchor="middle" stroke="#1f1fff" stroke-width="0.12">11</text>
<text x="688.8" y="827" font-size="3" fill="#1f1fff" text-anchor="middle" stroke="#1f1fff" stroke-width="0.12">21</text>
<text x="676.3" y="831" font-size="3" fill="#1f1fff" text-anchor="middle" stroke="#1f1fff" stroke-width="0.12">I0</text>
<text x="688.8" y="831" font-size="3" fill="#1f1fff" text-anchor="middle" stroke="#1f1fff" stroke-width="0.12">I1</text>
<rect x="676.5" y="840" width="3.6" height="3.6" stroke="#1f1fff" stroke-width="1.1" fill="none"/>
<rect x="677.5" y="841" width="1.6" height="1.6" fill="#1f1fff"/>
<rect x="684.5" y="840" width="3.6" height="3.6" stroke="#1f1fff" stroke-width="1.1" fill="none"/>
<rect x="685.5" y="841" width="1.6" height="1.6" fill="#1f1fff"/>
<text x="672.3" y="843" font-size="3" fill="#1f1fff" text-anchor="middle" stroke="#1f1fff" stroke-width="0.12">11</text>
<text x="691.3" y="843" font-size="3" fill="#1f1fff" text-anchor="middle" stroke="#1f1fff" stroke-width="0.12">21</text>
<rect x="676.5" y="847.5" width="3.6" height="3.6" stroke="#1f1fff" stroke-width="1.1" fill="none"/>
<rect x="677.5" y="848.5" width="1.6" height="1.6" fill="#1f1fff"/>
<rect x="684.5" y="847.5" width="3.6" height="3.6" stroke="#1f1fff" stroke-width="1.1" fill="none"/>
<rect x="685.5" y="848.5" width="1.6" height="1.6" fill="#1f1fff"/>
<text x="672.3" y="850.5" font-size="3" fill="#1f1fff" text-anchor="middle" stroke="#1f1fff" stroke-width="0.12">11</text>
<text x="691.3" y="850.5" font-size="3" fill="#1f1fff" text-anchor="middle" stroke="#1f1fff" stroke-width="0.12">21</text>
<text x="665.3" y="863.5" font-size="4" fill="#1f1fff" stroke="#1f1fff" stroke-width="0.12">PSSu E F 4DI</text>
<line x1="663.3" y1="865.8" x2="702.9" y2="865.8" stroke="#ff33ff" stroke-width="1.3"/>
<rect x="666.8" y="868.4" width="33" height="31" stroke="#222" stroke-width="1.2" fill="none"/>
<rect x="672.8" y="874.1" width="8" height="8" stroke="#222" stroke-width="1.1" fill="none"/>
<rect x="686.3" y="874.1" width="8" height="8" stroke="#222" stroke-width="1.1" fill="none"/>
<text x="676.8" y="879.6" font-size="3" fill="#1f1fff" text-anchor="middle" stroke="#1f1fff" stroke-width="0.12">11</text>
<text x="690.3" y="879.6" font-size="3" fill="#1f1fff" text-anchor="middle" stroke="#1f1fff" stroke-width="0.12">21</text>
<circle cx="676.8" cy="892.2" r="3.5" fill="#111"/>
<circle cx="690.3" cy="892.2" r="3.5" fill="#111"/>
<rect x="666.8" y="900.7" width="33" height="31" stroke="#222" stroke-width="1.2" fill="none"/>
<rect x="672.8" y="906.4" width="8" height="8" stroke="#222" stroke-width="1.1" fill="none"/>
<rect x="686.3" y="906.4" width="8" height="8" stroke="#222" stroke-width="1.1" fill="none"/>
<text x="676.8" y="911.9" font-size="3" fill="#1f1fff" text-anchor="middle" stroke="#1f1fff" stroke-width="0.12">12</text>
<text x="690.3" y="911.9" font-size="3" fill="#1f1fff" text-anchor="middle" stroke="#1f1fff" stroke-width="0.12">22</text>
<circle cx="676.8" cy="924.5" r="3.5" fill="#111"/>
<circle cx="690.3" cy="924.5" r="3.5" fill="#111"/>
<rect x="666.8" y="933" width="33" height="31" stroke="#222" stroke-width="1.2" fill="none"/>
<rect x="672.8" y="938.7" width="8" height="8" stroke="#222" stroke-width="1.1" fill="none"/>
<rect x="686.3" y="938.7" width="8" height="8" stroke="#222" stroke-width="1.1" fill="none"/>
<text x="676.8" y="944.2" font-size="3" fill="#1f1fff" text-anchor="middle" stroke="#1f1fff" stroke-width="0.12">13</text>
<text x="690.3" y="944.2" font-size="3" fill="#1f1fff" text-anchor="middle" stroke="#1f1fff" stroke-width="0.12">23</text>
<circle cx="676.8" cy="956.8" r="3.5" fill="#111"/>
<circle cx="690.3" cy="956.8" r="3.5" fill="#111"/>
<rect x="666.8" y="965.3" width="33" height="31" stroke="#222" stroke-width="1.2" fill="none"/>
<rect x="672.8" y="971" width="8" height="8" stroke="#222" stroke-width="1.1" fill="none"/>
<rect x="686.3" y="971" width="8" height="8" stroke="#222" stroke-width="1.1" fill="none"/>
<text x="676.8" y="976.5" font-size="3" fill="#1f1fff" text-anchor="middle" stroke="#1f1fff" stroke-width="0.12">14</text>
<text x="690.3" y="976.5" font-size="3" fill="#1f1fff" text-anchor="middle" stroke="#1f1fff" stroke-width="0.12">24</text>
<circle cx="676.8" cy="989.1" r="3.5" fill="#111"/>
<circle cx="690.3" cy="989.1" r="3.5" fill="#111"/>
<text x="668.3" y="1007" font-size="3.5" fill="#1f1fff" stroke="#1f1fff" stroke-width="0.12">PSSu BP</text>
<text x="668.3" y="1012" font-size="3.5" fill="#1f1fff" stroke="#1f1fff" stroke-width="0.12">1/8C</text>
<line x1="703.2" y1="705.2" x2="703.2" y2="1016.2" stroke="#1a0a1a" stroke-width="1.5"/>
<line x1="703.2" y1="705.2" x2="742.8" y2="705.2" stroke="#5a205a" stroke-width="1.6"/>
<line x1="703.2" y1="1016.2" x2="742.8" y2="1016.2" stroke="#222" stroke-width="1.4"/>
<text x="710.2" y="703" font-size="7" fill="#1f1fff" transform="rotate(-90 710.2 703)" stroke="#1f1fff" stroke-width="0.12">-A8</text>
<text x="717.2" y="703" font-size="4.5" fill="#7fae5a" transform="rotate(-90 717.2 703)" stroke="#7fae5a" stroke-width="0.12">/4.2</text>
<text x="704.7" y="712" font-size="4" fill="#1f1fff" stroke="#1f1fff" stroke-width="0.12">PH_DT</text>
<text x="705.2" y="716.5" font-size="5.89" font-weight="bold" fill="#000" stroke="#000" stroke-width="0.5" transform="translate(705.2 716.5) scale(1.2 0.85) translate(-705.2 -716.5)">PILZ</text>
<circle cx="732.7" cy="709.5" r="0.9" fill="#111"/>
<line x1="732.7" y1="709.5" x2="732.7" y2="720" stroke="#111" stroke-width="1.1"/>
<path d="M727.1 715 A5.6 5.2 0 0 0 738.3 715" stroke="#111" stroke-width="1.1" fill="none"/>
<text x="722.7" y="726" font-size="3" fill="#1f1fff" text-anchor="middle" stroke="#1f1fff" stroke-width="0.12">En</text>
<rect x="720.9" y="726.8" width="3.6" height="3.6" stroke="#1f1fff" stroke-width="1.1" fill="none"/>
<rect x="721.9" y="727.8" width="1.6" height="1.6" fill="#1f1fff"/>
<rect x="705.7" y="739.7" width="34.5" height="96.1" stroke="#1f1fff" stroke-width="1.2" fill="none"/>
<text x="722.7" y="747.5" font-size="5" fill="#1f1fff" text-anchor="middle" stroke="#1f1fff" stroke-width="0.12">312200</text>
<line x1="710.2" y1="784" x2="735.2" y2="784" stroke="#1f1fff" stroke-width="1.1"/>
<line x1="710.2" y1="796" x2="735.2" y2="796" stroke="#1f1fff" stroke-width="1.1"/>
<line x1="710.2" y1="808.7" x2="735.2" y2="808.7" stroke="#1f1fff" stroke-width="1.1"/>
<line x1="710.2" y1="821" x2="735.2" y2="821" stroke="#1f1fff" stroke-width="1.1"/>
<line x1="710.2" y1="833.7" x2="735.2" y2="833.7" stroke="#1f1fff" stroke-width="1.1"/>
<line x1="722.7" y1="784" x2="722.7" y2="834" stroke="#1f1fff" stroke-width="1.1"/>
<text x="716.2" y="789.5" font-size="3" fill="#1f1fff" text-anchor="middle" stroke="#1f1fff" stroke-width="0.12">11</text>
<text x="728.7" y="789.5" font-size="3" fill="#1f1fff" text-anchor="middle" stroke="#1f1fff" stroke-width="0.12">21</text>
<text x="716.2" y="793.5" font-size="3" fill="#1f1fff" text-anchor="middle" stroke="#1f1fff" stroke-width="0.12">I0</text>
<text x="728.7" y="793.5" font-size="3" fill="#1f1fff" text-anchor="middle" stroke="#1f1fff" stroke-width="0.12">I1</text>
<text x="716.2" y="802" font-size="3" fill="#1f1fff" text-anchor="middle" stroke="#1f1fff" stroke-width="0.12">11</text>
<text x="728.7" y="802" font-size="3" fill="#1f1fff" text-anchor="middle" stroke="#1f1fff" stroke-width="0.12">21</text>
<text x="716.2" y="806" font-size="3" fill="#1f1fff" text-anchor="middle" stroke="#1f1fff" stroke-width="0.12">I0</text>
<text x="728.7" y="806" font-size="3" fill="#1f1fff" text-anchor="middle" stroke="#1f1fff" stroke-width="0.12">I1</text>
<text x="716.2" y="814.5" font-size="3" fill="#1f1fff" text-anchor="middle" stroke="#1f1fff" stroke-width="0.12">11</text>
<text x="728.7" y="814.5" font-size="3" fill="#1f1fff" text-anchor="middle" stroke="#1f1fff" stroke-width="0.12">21</text>
<text x="716.2" y="818.5" font-size="3" fill="#1f1fff" text-anchor="middle" stroke="#1f1fff" stroke-width="0.12">I0</text>
<text x="728.7" y="818.5" font-size="3" fill="#1f1fff" text-anchor="middle" stroke="#1f1fff" stroke-width="0.12">I1</text>
<text x="716.2" y="827" font-size="3" fill="#1f1fff" text-anchor="middle" stroke="#1f1fff" stroke-width="0.12">11</text>
<text x="728.7" y="827" font-size="3" fill="#1f1fff" text-anchor="middle" stroke="#1f1fff" stroke-width="0.12">21</text>
<text x="716.2" y="831" font-size="3" fill="#1f1fff" text-anchor="middle" stroke="#1f1fff" stroke-width="0.12">I0</text>
<text x="728.7" y="831" font-size="3" fill="#1f1fff" text-anchor="middle" stroke="#1f1fff" stroke-width="0.12">I1</text>
<rect x="716.4" y="840" width="3.6" height="3.6" stroke="#1f1fff" stroke-width="1.1" fill="none"/>
<rect x="717.4" y="841" width="1.6" height="1.6" fill="#1f1fff"/>
<rect x="724.4" y="840" width="3.6" height="3.6" stroke="#1f1fff" stroke-width="1.1" fill="none"/>
<rect x="725.4" y="841" width="1.6" height="1.6" fill="#1f1fff"/>
<text x="712.2" y="843" font-size="3" fill="#1f1fff" text-anchor="middle" stroke="#1f1fff" stroke-width="0.12">11</text>
<text x="731.2" y="843" font-size="3" fill="#1f1fff" text-anchor="middle" stroke="#1f1fff" stroke-width="0.12">21</text>
<rect x="716.4" y="847.5" width="3.6" height="3.6" stroke="#1f1fff" stroke-width="1.1" fill="none"/>
<rect x="717.4" y="848.5" width="1.6" height="1.6" fill="#1f1fff"/>
<rect x="724.4" y="847.5" width="3.6" height="3.6" stroke="#1f1fff" stroke-width="1.1" fill="none"/>
<rect x="725.4" y="848.5" width="1.6" height="1.6" fill="#1f1fff"/>
<text x="712.2" y="850.5" font-size="3" fill="#1f1fff" text-anchor="middle" stroke="#1f1fff" stroke-width="0.12">11</text>
<text x="731.2" y="850.5" font-size="3" fill="#1f1fff" text-anchor="middle" stroke="#1f1fff" stroke-width="0.12">21</text>
<text x="705.2" y="863.5" font-size="4" fill="#1f1fff" stroke="#1f1fff" stroke-width="0.12">PSSu E F 4DI</text>
<line x1="703.2" y1="865.8" x2="742.8" y2="865.8" stroke="#ff33ff" stroke-width="1.3"/>
<rect x="706.7" y="868.4" width="33" height="31" stroke="#222" stroke-width="1.2" fill="none"/>
<rect x="712.7" y="874.1" width="8" height="8" stroke="#222" stroke-width="1.1" fill="none"/>
<rect x="726.2" y="874.1" width="8" height="8" stroke="#222" stroke-width="1.1" fill="none"/>
<text x="716.7" y="879.6" font-size="3" fill="#1f1fff" text-anchor="middle" stroke="#1f1fff" stroke-width="0.12">11</text>
<text x="730.2" y="879.6" font-size="3" fill="#1f1fff" text-anchor="middle" stroke="#1f1fff" stroke-width="0.12">21</text>
<circle cx="716.7" cy="892.2" r="3.5" fill="#111"/>
<circle cx="730.2" cy="892.2" r="3.5" fill="#111"/>
<rect x="706.7" y="900.7" width="33" height="31" stroke="#222" stroke-width="1.2" fill="none"/>
<rect x="712.7" y="906.4" width="8" height="8" stroke="#222" stroke-width="1.1" fill="none"/>
<rect x="726.2" y="906.4" width="8" height="8" stroke="#222" stroke-width="1.1" fill="none"/>
<text x="716.7" y="911.9" font-size="3" fill="#1f1fff" text-anchor="middle" stroke="#1f1fff" stroke-width="0.12">12</text>
<text x="730.2" y="911.9" font-size="3" fill="#1f1fff" text-anchor="middle" stroke="#1f1fff" stroke-width="0.12">22</text>
<circle cx="716.7" cy="924.5" r="3.5" fill="#111"/>
<circle cx="730.2" cy="924.5" r="3.5" fill="#111"/>
<rect x="706.7" y="933" width="33" height="31" stroke="#222" stroke-width="1.2" fill="none"/>
<rect x="712.7" y="938.7" width="8" height="8" stroke="#222" stroke-width="1.1" fill="none"/>
<rect x="726.2" y="938.7" width="8" height="8" stroke="#222" stroke-width="1.1" fill="none"/>
<text x="716.7" y="944.2" font-size="3" fill="#1f1fff" text-anchor="middle" stroke="#1f1fff" stroke-width="0.12">13</text>
<text x="730.2" y="944.2" font-size="3" fill="#1f1fff" text-anchor="middle" stroke="#1f1fff" stroke-width="0.12">23</text>
<circle cx="716.7" cy="956.8" r="3.5" fill="#111"/>
<circle cx="730.2" cy="956.8" r="3.5" fill="#111"/>
<rect x="706.7" y="965.3" width="33" height="31" stroke="#222" stroke-width="1.2" fill="none"/>
<rect x="712.7" y="971" width="8" height="8" stroke="#222" stroke-width="1.1" fill="none"/>
<rect x="726.2" y="971" width="8" height="8" stroke="#222" stroke-width="1.1" fill="none"/>
<text x="716.7" y="976.5" font-size="3" fill="#1f1fff" text-anchor="middle" stroke="#1f1fff" stroke-width="0.12">14</text>
<text x="730.2" y="976.5" font-size="3" fill="#1f1fff" text-anchor="middle" stroke="#1f1fff" stroke-width="0.12">24</text>
<circle cx="716.7" cy="989.1" r="3.5" fill="#111"/>
<circle cx="730.2" cy="989.1" r="3.5" fill="#111"/>
<text x="708.2" y="1007" font-size="3.5" fill="#1f1fff" stroke="#1f1fff" stroke-width="0.12">PSSu BP</text>
<text x="708.2" y="1012" font-size="3.5" fill="#1f1fff" stroke="#1f1fff" stroke-width="0.12">1/8C</text>
<line x1="742.3" y1="705.2" x2="742.3" y2="1016.2" stroke="#1a0a1a" stroke-width="1.5"/>
<line x1="742.3" y1="705.2" x2="816.8" y2="705.2" stroke="#5a205a" stroke-width="1.6"/>
<line x1="742.3" y1="1016.2" x2="816.8" y2="1016.2" stroke="#222" stroke-width="1.4"/>
<text x="749.3" y="703" font-size="7" fill="#1f1fff" transform="rotate(-90 749.3 703)" stroke="#1f1fff" stroke-width="0.12">-A10</text>
<text x="756.3" y="703" font-size="4.5" fill="#7fae5a" transform="rotate(-90 756.3 703)" stroke="#7fae5a" stroke-width="0.12">/5.0</text>
<text x="743.8" y="712" font-size="4" fill="#1f1fff" stroke="#1f1fff" stroke-width="0.12">PH_DT</text>
<text x="744.3" y="716.5" font-size="5.89" font-weight="bold" fill="#000" stroke="#000" stroke-width="0.5" transform="translate(744.3 716.5) scale(1.2 0.85) translate(-744.3 -716.5)">PILZ</text>
<circle cx="771.8" cy="709.5" r="0.9" fill="#111"/>
<line x1="771.8" y1="709.5" x2="771.8" y2="720" stroke="#111" stroke-width="1.1"/>
<path d="M766.2 715 A5.6 5.2 0 0 0 777.4 715" stroke="#111" stroke-width="1.1" fill="none"/>
<text x="761.8" y="726" font-size="3" fill="#1f1fff" text-anchor="middle" stroke="#1f1fff" stroke-width="0.12">En</text>
<rect x="755.5" y="728.2" width="3.6" height="3.6" stroke="#1f1fff" stroke-width="1.1" fill="none"/>
<rect x="756.5" y="729.2" width="1.6" height="1.6" fill="#1f1fff"/>
<rect x="761.5" y="728.2" width="3.6" height="3.6" stroke="#1f1fff" stroke-width="1.1" fill="none"/>
<rect x="762.5" y="729.2" width="1.6" height="1.6" fill="#1f1fff"/>
<rect x="755.5" y="734.7" width="3.6" height="3.6" stroke="#1f1fff" stroke-width="1.1" fill="none"/>
<rect x="756.5" y="735.7" width="1.6" height="1.6" fill="#1f1fff"/>
<rect x="744.8" y="739.7" width="34.5" height="96.1" stroke="#1f1fff" stroke-width="1.2" fill="none"/>
<text x="761.8" y="747.5" font-size="5" fill="#1f1fff" text-anchor="middle" stroke="#1f1fff" stroke-width="0.12">312225</text>
<line x1="749.3" y1="784" x2="774.3" y2="784" stroke="#1f1fff" stroke-width="1.1"/>
<line x1="749.3" y1="796" x2="774.3" y2="796" stroke="#1f1fff" stroke-width="1.1"/>
<line x1="749.3" y1="808.7" x2="774.3" y2="808.7" stroke="#1f1fff" stroke-width="1.1"/>
<line x1="749.3" y1="821" x2="774.3" y2="821" stroke="#1f1fff" stroke-width="1.1"/>
<line x1="749.3" y1="833.7" x2="774.3" y2="833.7" stroke="#1f1fff" stroke-width="1.1"/>
<line x1="761.8" y1="784" x2="761.8" y2="834" stroke="#1f1fff" stroke-width="1.1"/>
<text x="755.3" y="789.5" font-size="3" fill="#1f1fff" text-anchor="middle" stroke="#1f1fff" stroke-width="0.12">11</text>
<text x="767.8" y="789.5" font-size="3" fill="#1f1fff" text-anchor="middle" stroke="#1f1fff" stroke-width="0.12">21</text>
<text x="755.3" y="793.5" font-size="3" fill="#1f1fff" text-anchor="middle" stroke="#1f1fff" stroke-width="0.12">I0</text>
<text x="767.8" y="793.5" font-size="3" fill="#1f1fff" text-anchor="middle" stroke="#1f1fff" stroke-width="0.12">I1</text>
<text x="755.3" y="802" font-size="3" fill="#1f1fff" text-anchor="middle" stroke="#1f1fff" stroke-width="0.12">11</text>
<text x="767.8" y="802" font-size="3" fill="#1f1fff" text-anchor="middle" stroke="#1f1fff" stroke-width="0.12">21</text>
<text x="755.3" y="806" font-size="3" fill="#1f1fff" text-anchor="middle" stroke="#1f1fff" stroke-width="0.12">I0</text>
<text x="767.8" y="806" font-size="3" fill="#1f1fff" text-anchor="middle" stroke="#1f1fff" stroke-width="0.12">I1</text>
<text x="755.3" y="814.5" font-size="3" fill="#1f1fff" text-anchor="middle" stroke="#1f1fff" stroke-width="0.12">11</text>
<text x="767.8" y="814.5" font-size="3" fill="#1f1fff" text-anchor="middle" stroke="#1f1fff" stroke-width="0.12">21</text>
<text x="755.3" y="818.5" font-size="3" fill="#1f1fff" text-anchor="middle" stroke="#1f1fff" stroke-width="0.12">I0</text>
<text x="767.8" y="818.5" font-size="3" fill="#1f1fff" text-anchor="middle" stroke="#1f1fff" stroke-width="0.12">I1</text>
<text x="755.3" y="827" font-size="3" fill="#1f1fff" text-anchor="middle" stroke="#1f1fff" stroke-width="0.12">11</text>
<text x="767.8" y="827" font-size="3" fill="#1f1fff" text-anchor="middle" stroke="#1f1fff" stroke-width="0.12">21</text>
<text x="755.3" y="831" font-size="3" fill="#1f1fff" text-anchor="middle" stroke="#1f1fff" stroke-width="0.12">I0</text>
<text x="767.8" y="831" font-size="3" fill="#1f1fff" text-anchor="middle" stroke="#1f1fff" stroke-width="0.12">I1</text>
<rect x="782.1" y="739.7" width="34.5" height="96.1" stroke="#1f1fff" stroke-width="1.2" fill="none"/>
<line x1="786.6" y1="784" x2="811.6" y2="784" stroke="#1f1fff" stroke-width="1.1"/>
<line x1="786.6" y1="796" x2="811.6" y2="796" stroke="#1f1fff" stroke-width="1.1"/>
<line x1="786.6" y1="808.7" x2="811.6" y2="808.7" stroke="#1f1fff" stroke-width="1.1"/>
<line x1="786.6" y1="821" x2="811.6" y2="821" stroke="#1f1fff" stroke-width="1.1"/>
<line x1="786.6" y1="833.7" x2="811.6" y2="833.7" stroke="#1f1fff" stroke-width="1.1"/>
<line x1="799.1" y1="784" x2="799.1" y2="834" stroke="#1f1fff" stroke-width="1.1"/>
<text x="792.6" y="789.5" font-size="3" fill="#1f1fff" text-anchor="middle" stroke="#1f1fff" stroke-width="0.12">11</text>
<text x="805.1" y="789.5" font-size="3" fill="#1f1fff" text-anchor="middle" stroke="#1f1fff" stroke-width="0.12">21</text>
<text x="792.6" y="793.5" font-size="3" fill="#1f1fff" text-anchor="middle" stroke="#1f1fff" stroke-width="0.12">I0</text>
<text x="805.1" y="793.5" font-size="3" fill="#1f1fff" text-anchor="middle" stroke="#1f1fff" stroke-width="0.12">I1</text>
<text x="792.6" y="802" font-size="3" fill="#1f1fff" text-anchor="middle" stroke="#1f1fff" stroke-width="0.12">11</text>
<text x="805.1" y="802" font-size="3" fill="#1f1fff" text-anchor="middle" stroke="#1f1fff" stroke-width="0.12">21</text>
<text x="792.6" y="806" font-size="3" fill="#1f1fff" text-anchor="middle" stroke="#1f1fff" stroke-width="0.12">I0</text>
<text x="805.1" y="806" font-size="3" fill="#1f1fff" text-anchor="middle" stroke="#1f1fff" stroke-width="0.12">I1</text>
<text x="792.6" y="814.5" font-size="3" fill="#1f1fff" text-anchor="middle" stroke="#1f1fff" stroke-width="0.12">11</text>
<text x="805.1" y="814.5" font-size="3" fill="#1f1fff" text-anchor="middle" stroke="#1f1fff" stroke-width="0.12">21</text>
<text x="792.6" y="818.5" font-size="3" fill="#1f1fff" text-anchor="middle" stroke="#1f1fff" stroke-width="0.12">I0</text>
<text x="805.1" y="818.5" font-size="3" fill="#1f1fff" text-anchor="middle" stroke="#1f1fff" stroke-width="0.12">I1</text>
<text x="792.6" y="827" font-size="3" fill="#1f1fff" text-anchor="middle" stroke="#1f1fff" stroke-width="0.12">11</text>
<text x="805.1" y="827" font-size="3" fill="#1f1fff" text-anchor="middle" stroke="#1f1fff" stroke-width="0.12">21</text>
<text x="792.6" y="831" font-size="3" fill="#1f1fff" text-anchor="middle" stroke="#1f1fff" stroke-width="0.12">I0</text>
<text x="805.1" y="831" font-size="3" fill="#1f1fff" text-anchor="middle" stroke="#1f1fff" stroke-width="0.12">I1</text>
<rect x="757.5" y="840" width="3.6" height="3.6" stroke="#1f1fff" stroke-width="1.1" fill="none"/>
<rect x="758.5" y="841" width="1.6" height="1.6" fill="#1f1fff"/>
<rect x="757.5" y="847.5" width="3.6" height="3.6" stroke="#1f1fff" stroke-width="1.1" fill="none"/>
<rect x="758.5" y="848.5" width="1.6" height="1.6" fill="#1f1fff"/>
<text x="750.3" y="861" font-size="4" fill="#1f1fff" stroke="#1f1fff" stroke-width="0.12">PSSu E F 2DOR</text>
<text x="744.3" y="866" font-size="4" fill="#1f1fff" stroke="#1f1fff" stroke-width="0.12">8</text>
<line x1="742.3" y1="865.8" x2="816.8" y2="865.8" stroke="#ff33ff" stroke-width="1.3"/>
<rect x="745.8" y="868.4" width="33" height="31" stroke="#222" stroke-width="1.2" fill="none"/>
<rect x="751.8" y="874.1" width="8" height="8" stroke="#222" stroke-width="1.1" fill="none"/>
<rect x="765.3" y="874.1" width="8" height="8" stroke="#222" stroke-width="1.1" fill="none"/>
<text x="755.8" y="879.6" font-size="3" fill="#1f1fff" text-anchor="middle" stroke="#1f1fff" stroke-width="0.12">11</text>
<text x="769.3" y="879.6" font-size="3" fill="#1f1fff" text-anchor="middle" stroke="#1f1fff" stroke-width="0.12">21</text>
<circle cx="755.8" cy="892.2" r="3.5" fill="#111"/>
<circle cx="769.3" cy="892.2" r="3.5" fill="#111"/>
<rect x="745.8" y="900.7" width="33" height="31" stroke="#222" stroke-width="1.2" fill="none"/>
<rect x="751.8" y="906.4" width="8" height="8" stroke="#222" stroke-width="1.1" fill="none"/>
<rect x="765.3" y="906.4" width="8" height="8" stroke="#222" stroke-width="1.1" fill="none"/>
<text x="755.8" y="911.9" font-size="3" fill="#1f1fff" text-anchor="middle" stroke="#1f1fff" stroke-width="0.12">12</text>
<text x="769.3" y="911.9" font-size="3" fill="#1f1fff" text-anchor="middle" stroke="#1f1fff" stroke-width="0.12">22</text>
<circle cx="755.8" cy="924.5" r="3.5" fill="#111"/>
<circle cx="769.3" cy="924.5" r="3.5" fill="#111"/>
<rect x="745.8" y="933" width="33" height="31" stroke="#222" stroke-width="1.2" fill="none"/>
<rect x="751.8" y="938.7" width="8" height="8" stroke="#222" stroke-width="1.1" fill="none"/>
<rect x="765.3" y="938.7" width="8" height="8" stroke="#222" stroke-width="1.1" fill="none"/>
<text x="755.8" y="944.2" font-size="3" fill="#1f1fff" text-anchor="middle" stroke="#1f1fff" stroke-width="0.12">13</text>
<text x="769.3" y="944.2" font-size="3" fill="#1f1fff" text-anchor="middle" stroke="#1f1fff" stroke-width="0.12">23</text>
<circle cx="755.8" cy="956.8" r="3.5" fill="#111"/>
<circle cx="769.3" cy="956.8" r="3.5" fill="#111"/>
<rect x="745.8" y="965.3" width="33" height="31" stroke="#222" stroke-width="1.2" fill="none"/>
<rect x="751.8" y="971" width="8" height="8" stroke="#222" stroke-width="1.1" fill="none"/>
<rect x="765.3" y="971" width="8" height="8" stroke="#222" stroke-width="1.1" fill="none"/>
<text x="755.8" y="976.5" font-size="3" fill="#1f1fff" text-anchor="middle" stroke="#1f1fff" stroke-width="0.12">14</text>
<text x="769.3" y="976.5" font-size="3" fill="#1f1fff" text-anchor="middle" stroke="#1f1fff" stroke-width="0.12">24</text>
<circle cx="755.8" cy="989.1" r="3.5" fill="#111"/>
<circle cx="769.3" cy="989.1" r="3.5" fill="#111"/>
<rect x="783.1" y="868.4" width="33" height="31" stroke="#222" stroke-width="1.2" fill="none"/>
<rect x="789.1" y="874.1" width="8" height="8" stroke="#222" stroke-width="1.1" fill="none"/>
<rect x="802.6" y="874.1" width="8" height="8" stroke="#222" stroke-width="1.1" fill="none"/>
<text x="793.1" y="879.6" font-size="3" fill="#1f1fff" text-anchor="middle" stroke="#1f1fff" stroke-width="0.12">11</text>
<text x="806.6" y="879.6" font-size="3" fill="#1f1fff" text-anchor="middle" stroke="#1f1fff" stroke-width="0.12">21</text>
<circle cx="793.1" cy="892.2" r="3.5" fill="#111"/>
<circle cx="806.6" cy="892.2" r="3.5" fill="#111"/>
<rect x="783.1" y="900.7" width="33" height="31" stroke="#222" stroke-width="1.2" fill="none"/>
<rect x="789.1" y="906.4" width="8" height="8" stroke="#222" stroke-width="1.1" fill="none"/>
<rect x="802.6" y="906.4" width="8" height="8" stroke="#222" stroke-width="1.1" fill="none"/>
<text x="793.1" y="911.9" font-size="3" fill="#1f1fff" text-anchor="middle" stroke="#1f1fff" stroke-width="0.12">12</text>
<text x="806.6" y="911.9" font-size="3" fill="#1f1fff" text-anchor="middle" stroke="#1f1fff" stroke-width="0.12">22</text>
<circle cx="793.1" cy="924.5" r="3.5" fill="#111"/>
<circle cx="806.6" cy="924.5" r="3.5" fill="#111"/>
<rect x="783.1" y="933" width="33" height="31" stroke="#222" stroke-width="1.2" fill="none"/>
<rect x="789.1" y="938.7" width="8" height="8" stroke="#222" stroke-width="1.1" fill="none"/>
<rect x="802.6" y="938.7" width="8" height="8" stroke="#222" stroke-width="1.1" fill="none"/>
<text x="793.1" y="944.2" font-size="3" fill="#1f1fff" text-anchor="middle" stroke="#1f1fff" stroke-width="0.12">13</text>
<text x="806.6" y="944.2" font-size="3" fill="#1f1fff" text-anchor="middle" stroke="#1f1fff" stroke-width="0.12">23</text>
<circle cx="793.1" cy="956.8" r="3.5" fill="#111"/>
<circle cx="806.6" cy="956.8" r="3.5" fill="#111"/>
<rect x="783.1" y="965.3" width="33" height="31" stroke="#222" stroke-width="1.2" fill="none"/>
<rect x="789.1" y="971" width="8" height="8" stroke="#222" stroke-width="1.1" fill="none"/>
<rect x="802.6" y="971" width="8" height="8" stroke="#222" stroke-width="1.1" fill="none"/>
<text x="793.1" y="976.5" font-size="3" fill="#1f1fff" text-anchor="middle" stroke="#1f1fff" stroke-width="0.12">14</text>
<text x="806.6" y="976.5" font-size="3" fill="#1f1fff" text-anchor="middle" stroke="#1f1fff" stroke-width="0.12">24</text>
<circle cx="793.1" cy="989.1" r="3.5" fill="#111"/>
<circle cx="806.6" cy="989.1" r="3.5" fill="#111"/>
<text x="747.3" y="1007" font-size="3.5" fill="#1f1fff" stroke="#1f1fff" stroke-width="0.12">PSSu BP</text>
<text x="747.3" y="1012" font-size="3.5" fill="#1f1fff" stroke="#1f1fff" stroke-width="0.12">2/16C</text>
<line x1="816.8" y1="705.2" x2="816.8" y2="1016.2" stroke="#8a1a8a" stroke-width="1.5"/>
<line x1="816.8" y1="705.2" x2="891.3" y2="705.2" stroke="#ff33ff" stroke-width="1.6"/>
<line x1="816.8" y1="1016.2" x2="891.3" y2="1016.2" stroke="#222" stroke-width="1.4"/>
<text x="823.8" y="703" font-size="7" fill="#1f1fff" transform="rotate(-90 823.8 703)" stroke="#1f1fff" stroke-width="0.12">-A11</text>
<text x="830.8" y="703" font-size="4.5" fill="#7fae5a" transform="rotate(-90 830.8 703)" stroke="#7fae5a" stroke-width="0.12">/5.2</text>
<text x="818.3" y="712" font-size="4" fill="#1f1fff" stroke="#1f1fff" stroke-width="0.12">PH_DT</text>
<text x="818.8" y="716.5" font-size="5.89" font-weight="bold" fill="#000" stroke="#000" stroke-width="0.5" transform="translate(818.8 716.5) scale(1.2 0.85) translate(-818.8 -716.5)">PILZ</text>
<circle cx="846.3" cy="709.5" r="0.9" fill="#111"/>
<line x1="846.3" y1="709.5" x2="846.3" y2="720" stroke="#111" stroke-width="1.1"/>
<path d="M840.7 715 A5.6 5.2 0 0 0 851.9 715" stroke="#111" stroke-width="1.1" fill="none"/>
<text x="836.3" y="726" font-size="3" fill="#1f1fff" text-anchor="middle" stroke="#1f1fff" stroke-width="0.12">En</text>
<rect x="830" y="728.2" width="3.6" height="3.6" stroke="#1f1fff" stroke-width="1.1" fill="none"/>
<rect x="831" y="729.2" width="1.6" height="1.6" fill="#1f1fff"/>
<rect x="836" y="728.2" width="3.6" height="3.6" stroke="#1f1fff" stroke-width="1.1" fill="none"/>
<rect x="837" y="729.2" width="1.6" height="1.6" fill="#1f1fff"/>
<rect x="830" y="734.7" width="3.6" height="3.6" stroke="#1f1fff" stroke-width="1.1" fill="none"/>
<rect x="831" y="735.7" width="1.6" height="1.6" fill="#1f1fff"/>
<rect x="819.3" y="739.7" width="34.5" height="96.1" stroke="#1f1fff" stroke-width="1.2" fill="none"/>
<text x="836.3" y="747.5" font-size="5" fill="#1f1fff" text-anchor="middle" stroke="#1f1fff" stroke-width="0.12">312225</text>
<line x1="823.8" y1="784" x2="848.8" y2="784" stroke="#1f1fff" stroke-width="1.1"/>
<line x1="823.8" y1="796" x2="848.8" y2="796" stroke="#1f1fff" stroke-width="1.1"/>
<line x1="823.8" y1="808.7" x2="848.8" y2="808.7" stroke="#1f1fff" stroke-width="1.1"/>
<line x1="823.8" y1="821" x2="848.8" y2="821" stroke="#1f1fff" stroke-width="1.1"/>
<line x1="823.8" y1="833.7" x2="848.8" y2="833.7" stroke="#1f1fff" stroke-width="1.1"/>
<line x1="836.3" y1="784" x2="836.3" y2="834" stroke="#1f1fff" stroke-width="1.1"/>
<text x="829.8" y="789.5" font-size="3" fill="#1f1fff" text-anchor="middle" stroke="#1f1fff" stroke-width="0.12">11</text>
<text x="842.3" y="789.5" font-size="3" fill="#1f1fff" text-anchor="middle" stroke="#1f1fff" stroke-width="0.12">21</text>
<text x="829.8" y="793.5" font-size="3" fill="#1f1fff" text-anchor="middle" stroke="#1f1fff" stroke-width="0.12">I0</text>
<text x="842.3" y="793.5" font-size="3" fill="#1f1fff" text-anchor="middle" stroke="#1f1fff" stroke-width="0.12">I1</text>
<text x="829.8" y="802" font-size="3" fill="#1f1fff" text-anchor="middle" stroke="#1f1fff" stroke-width="0.12">11</text>
<text x="842.3" y="802" font-size="3" fill="#1f1fff" text-anchor="middle" stroke="#1f1fff" stroke-width="0.12">21</text>
<text x="829.8" y="806" font-size="3" fill="#1f1fff" text-anchor="middle" stroke="#1f1fff" stroke-width="0.12">I0</text>
<text x="842.3" y="806" font-size="3" fill="#1f1fff" text-anchor="middle" stroke="#1f1fff" stroke-width="0.12">I1</text>
<text x="829.8" y="814.5" font-size="3" fill="#1f1fff" text-anchor="middle" stroke="#1f1fff" stroke-width="0.12">11</text>
<text x="842.3" y="814.5" font-size="3" fill="#1f1fff" text-anchor="middle" stroke="#1f1fff" stroke-width="0.12">21</text>
<text x="829.8" y="818.5" font-size="3" fill="#1f1fff" text-anchor="middle" stroke="#1f1fff" stroke-width="0.12">I0</text>
<text x="842.3" y="818.5" font-size="3" fill="#1f1fff" text-anchor="middle" stroke="#1f1fff" stroke-width="0.12">I1</text>
<text x="829.8" y="827" font-size="3" fill="#1f1fff" text-anchor="middle" stroke="#1f1fff" stroke-width="0.12">11</text>
<text x="842.3" y="827" font-size="3" fill="#1f1fff" text-anchor="middle" stroke="#1f1fff" stroke-width="0.12">21</text>
<text x="829.8" y="831" font-size="3" fill="#1f1fff" text-anchor="middle" stroke="#1f1fff" stroke-width="0.12">I0</text>
<text x="842.3" y="831" font-size="3" fill="#1f1fff" text-anchor="middle" stroke="#1f1fff" stroke-width="0.12">I1</text>
<rect x="856.6" y="739.7" width="34.5" height="96.1" stroke="#1f1fff" stroke-width="1.2" fill="none"/>
<line x1="861.1" y1="784" x2="886.1" y2="784" stroke="#1f1fff" stroke-width="1.1"/>
<line x1="861.1" y1="796" x2="886.1" y2="796" stroke="#1f1fff" stroke-width="1.1"/>
<line x1="861.1" y1="808.7" x2="886.1" y2="808.7" stroke="#1f1fff" stroke-width="1.1"/>
<line x1="861.1" y1="821" x2="886.1" y2="821" stroke="#1f1fff" stroke-width="1.1"/>
<line x1="861.1" y1="833.7" x2="886.1" y2="833.7" stroke="#1f1fff" stroke-width="1.1"/>
<line x1="873.6" y1="784" x2="873.6" y2="834" stroke="#1f1fff" stroke-width="1.1"/>
<text x="867.1" y="789.5" font-size="3" fill="#1f1fff" text-anchor="middle" stroke="#1f1fff" stroke-width="0.12">11</text>
<text x="879.6" y="789.5" font-size="3" fill="#1f1fff" text-anchor="middle" stroke="#1f1fff" stroke-width="0.12">21</text>
<text x="867.1" y="793.5" font-size="3" fill="#1f1fff" text-anchor="middle" stroke="#1f1fff" stroke-width="0.12">I0</text>
<text x="879.6" y="793.5" font-size="3" fill="#1f1fff" text-anchor="middle" stroke="#1f1fff" stroke-width="0.12">I1</text>
<text x="867.1" y="802" font-size="3" fill="#1f1fff" text-anchor="middle" stroke="#1f1fff" stroke-width="0.12">11</text>
<text x="879.6" y="802" font-size="3" fill="#1f1fff" text-anchor="middle" stroke="#1f1fff" stroke-width="0.12">21</text>
<text x="867.1" y="806" font-size="3" fill="#1f1fff" text-anchor="middle" stroke="#1f1fff" stroke-width="0.12">I0</text>
<text x="879.6" y="806" font-size="3" fill="#1f1fff" text-anchor="middle" stroke="#1f1fff" stroke-width="0.12">I1</text>
<text x="867.1" y="814.5" font-size="3" fill="#1f1fff" text-anchor="middle" stroke="#1f1fff" stroke-width="0.12">11</text>
<text x="879.6" y="814.5" font-size="3" fill="#1f1fff" text-anchor="middle" stroke="#1f1fff" stroke-width="0.12">21</text>
<text x="867.1" y="818.5" font-size="3" fill="#1f1fff" text-anchor="middle" stroke="#1f1fff" stroke-width="0.12">I0</text>
<text x="879.6" y="818.5" font-size="3" fill="#1f1fff" text-anchor="middle" stroke="#1f1fff" stroke-width="0.12">I1</text>
<text x="867.1" y="827" font-size="3" fill="#1f1fff" text-anchor="middle" stroke="#1f1fff" stroke-width="0.12">11</text>
<text x="879.6" y="827" font-size="3" fill="#1f1fff" text-anchor="middle" stroke="#1f1fff" stroke-width="0.12">21</text>
<text x="867.1" y="831" font-size="3" fill="#1f1fff" text-anchor="middle" stroke="#1f1fff" stroke-width="0.12">I0</text>
<text x="879.6" y="831" font-size="3" fill="#1f1fff" text-anchor="middle" stroke="#1f1fff" stroke-width="0.12">I1</text>
<rect x="832" y="840" width="3.6" height="3.6" stroke="#1f1fff" stroke-width="1.1" fill="none"/>
<rect x="833" y="841" width="1.6" height="1.6" fill="#1f1fff"/>
<rect x="832" y="847.5" width="3.6" height="3.6" stroke="#1f1fff" stroke-width="1.1" fill="none"/>
<rect x="833" y="848.5" width="1.6" height="1.6" fill="#1f1fff"/>
<text x="824.8" y="861" font-size="4" fill="#1f1fff" stroke="#1f1fff" stroke-width="0.12">PSSu E F 2DOR</text>
<text x="818.8" y="866" font-size="4" fill="#1f1fff" stroke="#1f1fff" stroke-width="0.12">8</text>
<line x1="816.8" y1="865.8" x2="891.3" y2="865.8" stroke="#ff33ff" stroke-width="1.3"/>
<rect x="820.3" y="868.4" width="33" height="31" stroke="#222" stroke-width="1.2" fill="none"/>
<rect x="826.3" y="874.1" width="8" height="8" stroke="#222" stroke-width="1.1" fill="none"/>
<rect x="839.8" y="874.1" width="8" height="8" stroke="#222" stroke-width="1.1" fill="none"/>
<text x="830.3" y="879.6" font-size="3" fill="#1f1fff" text-anchor="middle" stroke="#1f1fff" stroke-width="0.12">11</text>
<text x="843.8" y="879.6" font-size="3" fill="#1f1fff" text-anchor="middle" stroke="#1f1fff" stroke-width="0.12">21</text>
<circle cx="830.3" cy="892.2" r="3.5" fill="#111"/>
<circle cx="843.8" cy="892.2" r="3.5" fill="#111"/>
<rect x="820.3" y="900.7" width="33" height="31" stroke="#222" stroke-width="1.2" fill="none"/>
<rect x="826.3" y="906.4" width="8" height="8" stroke="#222" stroke-width="1.1" fill="none"/>
<rect x="839.8" y="906.4" width="8" height="8" stroke="#222" stroke-width="1.1" fill="none"/>
<text x="830.3" y="911.9" font-size="3" fill="#1f1fff" text-anchor="middle" stroke="#1f1fff" stroke-width="0.12">12</text>
<text x="843.8" y="911.9" font-size="3" fill="#1f1fff" text-anchor="middle" stroke="#1f1fff" stroke-width="0.12">22</text>
<circle cx="830.3" cy="924.5" r="3.5" fill="#111"/>
<circle cx="843.8" cy="924.5" r="3.5" fill="#111"/>
<rect x="820.3" y="933" width="33" height="31" stroke="#222" stroke-width="1.2" fill="none"/>
<rect x="826.3" y="938.7" width="8" height="8" stroke="#222" stroke-width="1.1" fill="none"/>
<rect x="839.8" y="938.7" width="8" height="8" stroke="#222" stroke-width="1.1" fill="none"/>
<text x="830.3" y="944.2" font-size="3" fill="#1f1fff" text-anchor="middle" stroke="#1f1fff" stroke-width="0.12">13</text>
<text x="843.8" y="944.2" font-size="3" fill="#1f1fff" text-anchor="middle" stroke="#1f1fff" stroke-width="0.12">23</text>
<circle cx="830.3" cy="956.8" r="3.5" fill="#111"/>
<circle cx="843.8" cy="956.8" r="3.5" fill="#111"/>
<rect x="820.3" y="965.3" width="33" height="31" stroke="#222" stroke-width="1.2" fill="none"/>
<rect x="826.3" y="971" width="8" height="8" stroke="#222" stroke-width="1.1" fill="none"/>
<rect x="839.8" y="971" width="8" height="8" stroke="#222" stroke-width="1.1" fill="none"/>
<text x="830.3" y="976.5" font-size="3" fill="#1f1fff" text-anchor="middle" stroke="#1f1fff" stroke-width="0.12">14</text>
<text x="843.8" y="976.5" font-size="3" fill="#1f1fff" text-anchor="middle" stroke="#1f1fff" stroke-width="0.12">24</text>
<circle cx="830.3" cy="989.1" r="3.5" fill="#111"/>
<circle cx="843.8" cy="989.1" r="3.5" fill="#111"/>
<rect x="857.6" y="868.4" width="33" height="31" stroke="#222" stroke-width="1.2" fill="none"/>
<rect x="863.6" y="874.1" width="8" height="8" stroke="#222" stroke-width="1.1" fill="none"/>
<rect x="877.1" y="874.1" width="8" height="8" stroke="#222" stroke-width="1.1" fill="none"/>
<text x="867.6" y="879.6" font-size="3" fill="#1f1fff" text-anchor="middle" stroke="#1f1fff" stroke-width="0.12">11</text>
<text x="881.1" y="879.6" font-size="3" fill="#1f1fff" text-anchor="middle" stroke="#1f1fff" stroke-width="0.12">21</text>
<circle cx="867.6" cy="892.2" r="3.5" fill="#111"/>
<circle cx="881.1" cy="892.2" r="3.5" fill="#111"/>
<rect x="857.6" y="900.7" width="33" height="31" stroke="#222" stroke-width="1.2" fill="none"/>
<rect x="863.6" y="906.4" width="8" height="8" stroke="#222" stroke-width="1.1" fill="none"/>
<rect x="877.1" y="906.4" width="8" height="8" stroke="#222" stroke-width="1.1" fill="none"/>
<text x="867.6" y="911.9" font-size="3" fill="#1f1fff" text-anchor="middle" stroke="#1f1fff" stroke-width="0.12">12</text>
<text x="881.1" y="911.9" font-size="3" fill="#1f1fff" text-anchor="middle" stroke="#1f1fff" stroke-width="0.12">22</text>
<circle cx="867.6" cy="924.5" r="3.5" fill="#111"/>
<circle cx="881.1" cy="924.5" r="3.5" fill="#111"/>
<rect x="857.6" y="933" width="33" height="31" stroke="#222" stroke-width="1.2" fill="none"/>
<rect x="863.6" y="938.7" width="8" height="8" stroke="#222" stroke-width="1.1" fill="none"/>
<rect x="877.1" y="938.7" width="8" height="8" stroke="#222" stroke-width="1.1" fill="none"/>
<text x="867.6" y="944.2" font-size="3" fill="#1f1fff" text-anchor="middle" stroke="#1f1fff" stroke-width="0.12">13</text>
<text x="881.1" y="944.2" font-size="3" fill="#1f1fff" text-anchor="middle" stroke="#1f1fff" stroke-width="0.12">23</text>
<circle cx="867.6" cy="956.8" r="3.5" fill="#111"/>
<circle cx="881.1" cy="956.8" r="3.5" fill="#111"/>
<rect x="857.6" y="965.3" width="33" height="31" stroke="#222" stroke-width="1.2" fill="none"/>
<rect x="863.6" y="971" width="8" height="8" stroke="#222" stroke-width="1.1" fill="none"/>
<rect x="877.1" y="971" width="8" height="8" stroke="#222" stroke-width="1.1" fill="none"/>
<text x="867.6" y="976.5" font-size="3" fill="#1f1fff" text-anchor="middle" stroke="#1f1fff" stroke-width="0.12">14</text>
<text x="881.1" y="976.5" font-size="3" fill="#1f1fff" text-anchor="middle" stroke="#1f1fff" stroke-width="0.12">24</text>
<circle cx="867.6" cy="989.1" r="3.5" fill="#111"/>
<circle cx="881.1" cy="989.1" r="3.5" fill="#111"/>
<text x="821.8" y="1007" font-size="3.5" fill="#1f1fff" stroke="#1f1fff" stroke-width="0.12">PSSu BP</text>
<text x="821.8" y="1012" font-size="3.5" fill="#1f1fff" stroke="#1f1fff" stroke-width="0.12">2/16C</text>
<line x1="891.2" y1="705.2" x2="891.2" y2="1016.2" stroke="#1a0a1a" stroke-width="1.5"/>
<line x1="891.2" y1="705.2" x2="930.8" y2="705.2" stroke="#5a205a" stroke-width="1.6"/>
<line x1="891.2" y1="1016.2" x2="930.8" y2="1016.2" stroke="#222" stroke-width="1.4"/>
<text x="898.2" y="703" font-size="7" fill="#1f1fff" transform="rotate(-90 898.2 703)" stroke="#1f1fff" stroke-width="0.12">-A12</text>
<text x="905.2" y="703" font-size="4.5" fill="#7fae5a" transform="rotate(-90 905.2 703)" stroke="#7fae5a" stroke-width="0.12"></text>
<text x="892.7" y="712" font-size="4" fill="#1f1fff" stroke="#1f1fff" stroke-width="0.12">PH_DT</text>
<text x="893.2" y="716.5" font-size="5.89" font-weight="bold" fill="#000" stroke="#000" stroke-width="0.5" transform="translate(893.2 716.5) scale(1.2 0.85) translate(-893.2 -716.5)">PILZ</text>
<circle cx="920.7" cy="709.5" r="0.9" fill="#111"/>
<line x1="920.7" y1="709.5" x2="920.7" y2="720" stroke="#111" stroke-width="1.1"/>
<path d="M915.1 715 A5.6 5.2 0 0 0 926.3 715" stroke="#111" stroke-width="1.1" fill="none"/>
<text x="910.7" y="726" font-size="3" fill="#1f1fff" text-anchor="middle" stroke="#1f1fff" stroke-width="0.12">En</text>
<rect x="908.9" y="726.8" width="3.6" height="3.6" stroke="#1f1fff" stroke-width="1.1" fill="none"/>
<rect x="909.9" y="727.8" width="1.6" height="1.6" fill="#1f1fff"/>
<rect x="893.7" y="739.7" width="34.5" height="96.1" stroke="#1f1fff" stroke-width="1.2" fill="none"/>
<text x="910.7" y="747.5" font-size="5" fill="#1f1fff" text-anchor="middle" stroke="#1f1fff" stroke-width="0.12">312200</text>
<line x1="898.2" y1="784" x2="923.2" y2="784" stroke="#1f1fff" stroke-width="1.1"/>
<line x1="898.2" y1="796" x2="923.2" y2="796" stroke="#1f1fff" stroke-width="1.1"/>
<line x1="898.2" y1="808.7" x2="923.2" y2="808.7" stroke="#1f1fff" stroke-width="1.1"/>
<line x1="898.2" y1="821" x2="923.2" y2="821" stroke="#1f1fff" stroke-width="1.1"/>
<line x1="898.2" y1="833.7" x2="923.2" y2="833.7" stroke="#1f1fff" stroke-width="1.1"/>
<line x1="910.7" y1="784" x2="910.7" y2="834" stroke="#1f1fff" stroke-width="1.1"/>
<text x="904.2" y="789.5" font-size="3" fill="#1f1fff" text-anchor="middle" stroke="#1f1fff" stroke-width="0.12">11</text>
<text x="916.7" y="789.5" font-size="3" fill="#1f1fff" text-anchor="middle" stroke="#1f1fff" stroke-width="0.12">21</text>
<text x="904.2" y="793.5" font-size="3" fill="#1f1fff" text-anchor="middle" stroke="#1f1fff" stroke-width="0.12">I0</text>
<text x="916.7" y="793.5" font-size="3" fill="#1f1fff" text-anchor="middle" stroke="#1f1fff" stroke-width="0.12">I1</text>
<text x="904.2" y="802" font-size="3" fill="#1f1fff" text-anchor="middle" stroke="#1f1fff" stroke-width="0.12">11</text>
<text x="916.7" y="802" font-size="3" fill="#1f1fff" text-anchor="middle" stroke="#1f1fff" stroke-width="0.12">21</text>
<text x="904.2" y="806" font-size="3" fill="#1f1fff" text-anchor="middle" stroke="#1f1fff" stroke-width="0.12">I0</text>
<text x="916.7" y="806" font-size="3" fill="#1f1fff" text-anchor="middle" stroke="#1f1fff" stroke-width="0.12">I1</text>
<text x="904.2" y="814.5" font-size="3" fill="#1f1fff" text-anchor="middle" stroke="#1f1fff" stroke-width="0.12">11</text>
<text x="916.7" y="814.5" font-size="3" fill="#1f1fff" text-anchor="middle" stroke="#1f1fff" stroke-width="0.12">21</text>
<text x="904.2" y="818.5" font-size="3" fill="#1f1fff" text-anchor="middle" stroke="#1f1fff" stroke-width="0.12">I0</text>
<text x="916.7" y="818.5" font-size="3" fill="#1f1fff" text-anchor="middle" stroke="#1f1fff" stroke-width="0.12">I1</text>
<text x="904.2" y="827" font-size="3" fill="#1f1fff" text-anchor="middle" stroke="#1f1fff" stroke-width="0.12">11</text>
<text x="916.7" y="827" font-size="3" fill="#1f1fff" text-anchor="middle" stroke="#1f1fff" stroke-width="0.12">21</text>
<text x="904.2" y="831" font-size="3" fill="#1f1fff" text-anchor="middle" stroke="#1f1fff" stroke-width="0.12">I0</text>
<text x="916.7" y="831" font-size="3" fill="#1f1fff" text-anchor="middle" stroke="#1f1fff" stroke-width="0.12">I1</text>
<rect x="904.4" y="840" width="3.6" height="3.6" stroke="#1f1fff" stroke-width="1.1" fill="none"/>
<rect x="905.4" y="841" width="1.6" height="1.6" fill="#1f1fff"/>
<rect x="912.4" y="840" width="3.6" height="3.6" stroke="#1f1fff" stroke-width="1.1" fill="none"/>
<rect x="913.4" y="841" width="1.6" height="1.6" fill="#1f1fff"/>
<text x="900.2" y="843" font-size="3" fill="#1f1fff" text-anchor="middle" stroke="#1f1fff" stroke-width="0.12">11</text>
<text x="919.2" y="843" font-size="3" fill="#1f1fff" text-anchor="middle" stroke="#1f1fff" stroke-width="0.12">21</text>
<rect x="904.4" y="847.5" width="3.6" height="3.6" stroke="#1f1fff" stroke-width="1.1" fill="none"/>
<rect x="905.4" y="848.5" width="1.6" height="1.6" fill="#1f1fff"/>
<rect x="912.4" y="847.5" width="3.6" height="3.6" stroke="#1f1fff" stroke-width="1.1" fill="none"/>
<rect x="913.4" y="848.5" width="1.6" height="1.6" fill="#1f1fff"/>
<text x="900.2" y="850.5" font-size="3" fill="#1f1fff" text-anchor="middle" stroke="#1f1fff" stroke-width="0.12">11</text>
<text x="919.2" y="850.5" font-size="3" fill="#1f1fff" text-anchor="middle" stroke="#1f1fff" stroke-width="0.12">21</text>
<text x="893.2" y="863.5" font-size="4" fill="#1f1fff" stroke="#1f1fff" stroke-width="0.12">PSSu E S 4DO</text>
<text x="893.2" y="868.5" font-size="4" fill="#1f1fff" stroke="#1f1fff" stroke-width="0.12">0.5</text>
<line x1="891.2" y1="865.8" x2="930.8" y2="865.8" stroke="#ff33ff" stroke-width="1.3"/>
<rect x="894.7" y="868.4" width="33" height="31" stroke="#222" stroke-width="1.2" fill="none"/>
<rect x="900.7" y="874.1" width="8" height="8" stroke="#222" stroke-width="1.1" fill="none"/>
<rect x="914.2" y="874.1" width="8" height="8" stroke="#222" stroke-width="1.1" fill="none"/>
<text x="904.7" y="879.6" font-size="3" fill="#1f1fff" text-anchor="middle" stroke="#1f1fff" stroke-width="0.12">11</text>
<text x="918.2" y="879.6" font-size="3" fill="#1f1fff" text-anchor="middle" stroke="#1f1fff" stroke-width="0.12">21</text>
<circle cx="904.7" cy="892.2" r="3.5" fill="#111"/>
<circle cx="918.2" cy="892.2" r="3.5" fill="#111"/>
<rect x="894.7" y="900.7" width="33" height="31" stroke="#222" stroke-width="1.2" fill="none"/>
<rect x="900.7" y="906.4" width="8" height="8" stroke="#222" stroke-width="1.1" fill="none"/>
<rect x="914.2" y="906.4" width="8" height="8" stroke="#222" stroke-width="1.1" fill="none"/>
<text x="904.7" y="911.9" font-size="3" fill="#1f1fff" text-anchor="middle" stroke="#1f1fff" stroke-width="0.12">12</text>
<text x="918.2" y="911.9" font-size="3" fill="#1f1fff" text-anchor="middle" stroke="#1f1fff" stroke-width="0.12">22</text>
<circle cx="904.7" cy="924.5" r="3.5" fill="#111"/>
<circle cx="918.2" cy="924.5" r="3.5" fill="#111"/>
<rect x="894.7" y="933" width="33" height="31" stroke="#222" stroke-width="1.2" fill="none"/>
<rect x="900.7" y="938.7" width="8" height="8" stroke="#222" stroke-width="1.1" fill="none"/>
<rect x="914.2" y="938.7" width="8" height="8" stroke="#222" stroke-width="1.1" fill="none"/>
<text x="904.7" y="944.2" font-size="3" fill="#1f1fff" text-anchor="middle" stroke="#1f1fff" stroke-width="0.12">13</text>
<text x="918.2" y="944.2" font-size="3" fill="#1f1fff" text-anchor="middle" stroke="#1f1fff" stroke-width="0.12">23</text>
<circle cx="904.7" cy="956.8" r="3.5" fill="#111"/>
<circle cx="918.2" cy="956.8" r="3.5" fill="#111"/>
<rect x="894.7" y="965.3" width="33" height="31" stroke="#222" stroke-width="1.2" fill="none"/>
<rect x="900.7" y="971" width="8" height="8" stroke="#222" stroke-width="1.1" fill="none"/>
<rect x="914.2" y="971" width="8" height="8" stroke="#222" stroke-width="1.1" fill="none"/>
<text x="904.7" y="976.5" font-size="3" fill="#1f1fff" text-anchor="middle" stroke="#1f1fff" stroke-width="0.12">14</text>
<text x="918.2" y="976.5" font-size="3" fill="#1f1fff" text-anchor="middle" stroke="#1f1fff" stroke-width="0.12">24</text>
<circle cx="904.7" cy="989.1" r="3.5" fill="#111"/>
<circle cx="918.2" cy="989.1" r="3.5" fill="#111"/>
<text x="896.2" y="1007" font-size="3.5" fill="#1f1fff" stroke="#1f1fff" stroke-width="0.12">PSSu BP</text>
<text x="896.2" y="1012" font-size="3.5" fill="#1f1fff" stroke="#1f1fff" stroke-width="0.12">1/8C</text>
<line x1="930.9" y1="705.2" x2="930.9" y2="1016.2" stroke="#1a0a1a" stroke-width="1.5"/>
<line x1="930.9" y1="705.2" x2="970.5" y2="705.2" stroke="#5a205a" stroke-width="1.6"/>
<line x1="930.9" y1="1016.2" x2="970.5" y2="1016.2" stroke="#222" stroke-width="1.4"/>
<text x="937.9" y="703" font-size="7" fill="#1f1fff" transform="rotate(-90 937.9 703)" stroke="#1f1fff" stroke-width="0.12">-A13</text>
<text x="944.9" y="703" font-size="4.5" fill="#7fae5a" transform="rotate(-90 944.9 703)" stroke="#7fae5a" stroke-width="0.12"></text>
<text x="932.4" y="712" font-size="4" fill="#1f1fff" stroke="#1f1fff" stroke-width="0.12">PH_DT</text>
<text x="932.9" y="716.5" font-size="5.89" font-weight="bold" fill="#000" stroke="#000" stroke-width="0.5" transform="translate(932.9 716.5) scale(1.2 0.85) translate(-932.9 -716.5)">PILZ</text>
<circle cx="960.4" cy="709.5" r="0.9" fill="#111"/>
<line x1="960.4" y1="709.5" x2="960.4" y2="720" stroke="#111" stroke-width="1.1"/>
<path d="M954.8 715 A5.6 5.2 0 0 0 966 715" stroke="#111" stroke-width="1.1" fill="none"/>
<text x="950.4" y="726" font-size="3" fill="#1f1fff" text-anchor="middle" stroke="#1f1fff" stroke-width="0.12">En</text>
<rect x="948.6" y="726.8" width="3.6" height="3.6" stroke="#1f1fff" stroke-width="1.1" fill="none"/>
<rect x="949.6" y="727.8" width="1.6" height="1.6" fill="#1f1fff"/>
<rect x="933.4" y="739.7" width="34.5" height="96.1" stroke="#1f1fff" stroke-width="1.2" fill="none"/>
<text x="950.4" y="747.5" font-size="5" fill="#1f1fff" text-anchor="middle" stroke="#1f1fff" stroke-width="0.12">312200</text>
<line x1="937.9" y1="784" x2="962.9" y2="784" stroke="#1f1fff" stroke-width="1.1"/>
<line x1="937.9" y1="796" x2="962.9" y2="796" stroke="#1f1fff" stroke-width="1.1"/>
<line x1="937.9" y1="808.7" x2="962.9" y2="808.7" stroke="#1f1fff" stroke-width="1.1"/>
<line x1="937.9" y1="821" x2="962.9" y2="821" stroke="#1f1fff" stroke-width="1.1"/>
<line x1="937.9" y1="833.7" x2="962.9" y2="833.7" stroke="#1f1fff" stroke-width="1.1"/>
<line x1="950.4" y1="784" x2="950.4" y2="834" stroke="#1f1fff" stroke-width="1.1"/>
<text x="943.9" y="789.5" font-size="3" fill="#1f1fff" text-anchor="middle" stroke="#1f1fff" stroke-width="0.12">11</text>
<text x="956.4" y="789.5" font-size="3" fill="#1f1fff" text-anchor="middle" stroke="#1f1fff" stroke-width="0.12">21</text>
<text x="943.9" y="793.5" font-size="3" fill="#1f1fff" text-anchor="middle" stroke="#1f1fff" stroke-width="0.12">I0</text>
<text x="956.4" y="793.5" font-size="3" fill="#1f1fff" text-anchor="middle" stroke="#1f1fff" stroke-width="0.12">I1</text>
<text x="943.9" y="802" font-size="3" fill="#1f1fff" text-anchor="middle" stroke="#1f1fff" stroke-width="0.12">11</text>
<text x="956.4" y="802" font-size="3" fill="#1f1fff" text-anchor="middle" stroke="#1f1fff" stroke-width="0.12">21</text>
<text x="943.9" y="806" font-size="3" fill="#1f1fff" text-anchor="middle" stroke="#1f1fff" stroke-width="0.12">I0</text>
<text x="956.4" y="806" font-size="3" fill="#1f1fff" text-anchor="middle" stroke="#1f1fff" stroke-width="0.12">I1</text>
<text x="943.9" y="814.5" font-size="3" fill="#1f1fff" text-anchor="middle" stroke="#1f1fff" stroke-width="0.12">11</text>
<text x="956.4" y="814.5" font-size="3" fill="#1f1fff" text-anchor="middle" stroke="#1f1fff" stroke-width="0.12">21</text>
<text x="943.9" y="818.5" font-size="3" fill="#1f1fff" text-anchor="middle" stroke="#1f1fff" stroke-width="0.12">I0</text>
<text x="956.4" y="818.5" font-size="3" fill="#1f1fff" text-anchor="middle" stroke="#1f1fff" stroke-width="0.12">I1</text>
<text x="943.9" y="827" font-size="3" fill="#1f1fff" text-anchor="middle" stroke="#1f1fff" stroke-width="0.12">11</text>
<text x="956.4" y="827" font-size="3" fill="#1f1fff" text-anchor="middle" stroke="#1f1fff" stroke-width="0.12">21</text>
<text x="943.9" y="831" font-size="3" fill="#1f1fff" text-anchor="middle" stroke="#1f1fff" stroke-width="0.12">I0</text>
<text x="956.4" y="831" font-size="3" fill="#1f1fff" text-anchor="middle" stroke="#1f1fff" stroke-width="0.12">I1</text>
<rect x="944.1" y="840" width="3.6" height="3.6" stroke="#1f1fff" stroke-width="1.1" fill="none"/>
<rect x="945.1" y="841" width="1.6" height="1.6" fill="#1f1fff"/>
<rect x="952.1" y="840" width="3.6" height="3.6" stroke="#1f1fff" stroke-width="1.1" fill="none"/>
<rect x="953.1" y="841" width="1.6" height="1.6" fill="#1f1fff"/>
<text x="939.9" y="843" font-size="3" fill="#1f1fff" text-anchor="middle" stroke="#1f1fff" stroke-width="0.12">11</text>
<text x="958.9" y="843" font-size="3" fill="#1f1fff" text-anchor="middle" stroke="#1f1fff" stroke-width="0.12">21</text>
<rect x="944.1" y="847.5" width="3.6" height="3.6" stroke="#1f1fff" stroke-width="1.1" fill="none"/>
<rect x="945.1" y="848.5" width="1.6" height="1.6" fill="#1f1fff"/>
<rect x="952.1" y="847.5" width="3.6" height="3.6" stroke="#1f1fff" stroke-width="1.1" fill="none"/>
<rect x="953.1" y="848.5" width="1.6" height="1.6" fill="#1f1fff"/>
<text x="939.9" y="850.5" font-size="3" fill="#1f1fff" text-anchor="middle" stroke="#1f1fff" stroke-width="0.12">11</text>
<text x="958.9" y="850.5" font-size="3" fill="#1f1fff" text-anchor="middle" stroke="#1f1fff" stroke-width="0.12">21</text>
<text x="932.9" y="863.5" font-size="4" fill="#1f1fff" stroke="#1f1fff" stroke-width="0.12">PSSu E S 4DO</text>
<text x="932.9" y="868.5" font-size="4" fill="#1f1fff" stroke="#1f1fff" stroke-width="0.12">0.5</text>
<line x1="930.9" y1="865.8" x2="970.5" y2="865.8" stroke="#ff33ff" stroke-width="1.3"/>
<rect x="934.4" y="868.4" width="33" height="31" stroke="#222" stroke-width="1.2" fill="none"/>
<rect x="940.4" y="874.1" width="8" height="8" stroke="#222" stroke-width="1.1" fill="none"/>
<rect x="953.9" y="874.1" width="8" height="8" stroke="#222" stroke-width="1.1" fill="none"/>
<text x="944.4" y="879.6" font-size="3" fill="#1f1fff" text-anchor="middle" stroke="#1f1fff" stroke-width="0.12">11</text>
<text x="957.9" y="879.6" font-size="3" fill="#1f1fff" text-anchor="middle" stroke="#1f1fff" stroke-width="0.12">21</text>
<circle cx="944.4" cy="892.2" r="3.5" fill="#111"/>
<circle cx="957.9" cy="892.2" r="3.5" fill="#111"/>
<rect x="934.4" y="900.7" width="33" height="31" stroke="#222" stroke-width="1.2" fill="none"/>
<rect x="940.4" y="906.4" width="8" height="8" stroke="#222" stroke-width="1.1" fill="none"/>
<rect x="953.9" y="906.4" width="8" height="8" stroke="#222" stroke-width="1.1" fill="none"/>
<text x="944.4" y="911.9" font-size="3" fill="#1f1fff" text-anchor="middle" stroke="#1f1fff" stroke-width="0.12">12</text>
<text x="957.9" y="911.9" font-size="3" fill="#1f1fff" text-anchor="middle" stroke="#1f1fff" stroke-width="0.12">22</text>
<circle cx="944.4" cy="924.5" r="3.5" fill="#111"/>
<circle cx="957.9" cy="924.5" r="3.5" fill="#111"/>
<rect x="934.4" y="933" width="33" height="31" stroke="#222" stroke-width="1.2" fill="none"/>
<rect x="940.4" y="938.7" width="8" height="8" stroke="#222" stroke-width="1.1" fill="none"/>
<rect x="953.9" y="938.7" width="8" height="8" stroke="#222" stroke-width="1.1" fill="none"/>
<text x="944.4" y="944.2" font-size="3" fill="#1f1fff" text-anchor="middle" stroke="#1f1fff" stroke-width="0.12">13</text>
<text x="957.9" y="944.2" font-size="3" fill="#1f1fff" text-anchor="middle" stroke="#1f1fff" stroke-width="0.12">23</text>
<circle cx="944.4" cy="956.8" r="3.5" fill="#111"/>
<circle cx="957.9" cy="956.8" r="3.5" fill="#111"/>
<rect x="934.4" y="965.3" width="33" height="31" stroke="#222" stroke-width="1.2" fill="none"/>
<rect x="940.4" y="971" width="8" height="8" stroke="#222" stroke-width="1.1" fill="none"/>
<rect x="953.9" y="971" width="8" height="8" stroke="#222" stroke-width="1.1" fill="none"/>
<text x="944.4" y="976.5" font-size="3" fill="#1f1fff" text-anchor="middle" stroke="#1f1fff" stroke-width="0.12">14</text>
<text x="957.9" y="976.5" font-size="3" fill="#1f1fff" text-anchor="middle" stroke="#1f1fff" stroke-width="0.12">24</text>
<circle cx="944.4" cy="989.1" r="3.5" fill="#111"/>
<circle cx="957.9" cy="989.1" r="3.5" fill="#111"/>
<text x="935.9" y="1007" font-size="3.5" fill="#1f1fff" stroke="#1f1fff" stroke-width="0.12">PSSu BP</text>
<text x="935.9" y="1012" font-size="3.5" fill="#1f1fff" stroke="#1f1fff" stroke-width="0.12">1/8C</text>
<line x1="970.5" y1="705.5" x2="970.5" y2="1016.2" stroke="#222" stroke-width="1.4"/>
<clipPath id="artclip"><rect x="874.8" y="150" width="906" height="432"/></clipPath><g clip-path="url(#artclip)">
<rect x="875" y="152.4" width="901" height="430" fill="#fff"/>
<rect x="876" y="154.2" width="900" height="9.1" fill="#f1f1f1"/>
<line x1="875" y1="154.2" x2="1776" y2="154.2" stroke="#3c3c3c" stroke-width="1.4"/>
<line x1="875" y1="163.3" x2="1776" y2="163.3" stroke="#3c3c3c" stroke-width="1.3"/>
<line x1="963.3" y1="154.2" x2="963.3" y2="163.3" stroke="#3c3c3c" stroke-width="1.3"/>
<line x1="1057.07" y1="154.2" x2="1057.07" y2="163.3" stroke="#3c3c3c" stroke-width="1.3"/>
<line x1="1150.84" y1="154.2" x2="1150.84" y2="163.3" stroke="#3c3c3c" stroke-width="1.3"/>
<line x1="1244.61" y1="154.2" x2="1244.61" y2="163.3" stroke="#3c3c3c" stroke-width="1.3"/>
<line x1="1338.38" y1="154.2" x2="1338.38" y2="163.3" stroke="#3c3c3c" stroke-width="1.3"/>
<line x1="1432.15" y1="154.2" x2="1432.15" y2="163.3" stroke="#3c3c3c" stroke-width="1.3"/>
<line x1="1525.92" y1="154.2" x2="1525.92" y2="163.3" stroke="#3c3c3c" stroke-width="1.3"/>
<line x1="1619.69" y1="154.2" x2="1619.69" y2="163.3" stroke="#3c3c3c" stroke-width="1.3"/>
<line x1="1713.46" y1="154.2" x2="1713.46" y2="163.3" stroke="#3c3c3c" stroke-width="1.3"/>
<text x="919.55" y="161.5" font-size="6.5" fill="#222" text-anchor="middle" stroke="#222" stroke-width="0.12">0</text>
<text x="1010.18" y="161.5" font-size="6.5" fill="#222" text-anchor="middle" stroke="#222" stroke-width="0.12">1</text>
<text x="1103.95" y="161.5" font-size="6.5" fill="#222" text-anchor="middle" stroke="#222" stroke-width="0.12">2</text>
<text x="1197.72" y="161.5" font-size="6.5" fill="#222" text-anchor="middle" stroke="#222" stroke-width="0.12">3</text>
<text x="1291.49" y="161.5" font-size="6.5" fill="#222" text-anchor="middle" stroke="#222" stroke-width="0.12">4</text>
<text x="1385.26" y="161.5" font-size="6.5" fill="#222" text-anchor="middle" stroke="#222" stroke-width="0.12">5</text>
<text x="1479.03" y="161.5" font-size="6.5" fill="#222" text-anchor="middle" stroke="#222" stroke-width="0.12">6</text>
<text x="1572.81" y="161.5" font-size="6.5" fill="#222" text-anchor="middle" stroke="#222" stroke-width="0.12">7</text>
<text x="1666.58" y="161.5" font-size="6.5" fill="#222" text-anchor="middle" stroke="#222" stroke-width="0.12">8</text>
<text x="1760.35" y="161.5" font-size="6.5" fill="#222" text-anchor="middle" stroke="#222" stroke-width="0.12">9</text>
<text x="876" y="180.8" font-size="20.8" fill="#000" stroke="#000" stroke-width="0.12">Artikelstückliste</text>
<text x="1769.5" y="172" font-size="10" fill="#222" stroke="#222" stroke-width="0.12">F</text>
<line x1="875.8" y1="181.5" x2="1776" y2="181.5" stroke="#3c3c3c" stroke-width="1.3"/>
<line x1="875.8" y1="210.5" x2="1776" y2="210.5" stroke="#3c3c3c" stroke-width="1.3"/>
<line x1="979.3" y1="181.5" x2="979.3" y2="582" stroke="#3c3c3c" stroke-width="1.2"/>
<line x1="1035.3" y1="181.5" x2="1035.3" y2="582" stroke="#3c3c3c" stroke-width="1.2"/>
<line x1="1361.8" y1="181.5" x2="1361.8" y2="582" stroke="#3c3c3c" stroke-width="1.2"/>
<line x1="1475.3" y1="181.5" x2="1475.3" y2="582" stroke="#3c3c3c" stroke-width="1.2"/>
<line x1="1521.5" y1="181.5" x2="1521.5" y2="582" stroke="#3c3c3c" stroke-width="1.2"/>
<line x1="1765.7" y1="181.5" x2="1765.7" y2="210.5" stroke="#3c3c3c" stroke-width="1.2"/>
<text x="880.8" y="193" font-size="8.55" fill="#222" stroke="#222" stroke-width="0.12">Benennung (BMK)</text>
<text x="880.8" y="206.5" font-size="6.9" fill="#222" stroke="#222" stroke-width="0.12">Schaltplan / Position</text>
<text x="1007" y="200" font-size="8.5" fill="#222" text-anchor="middle" stroke="#222" stroke-width="0.12">Menge</text>
<text x="1040.5" y="200" font-size="8.5" fill="#222" stroke="#222" stroke-width="0.12">Bezeichnung</text>
<text x="1367.5" y="193" font-size="8.5" fill="#222" stroke="#222" stroke-width="0.12">Typnummer</text>
<text x="1367.5" y="207.5" font-size="8.5" fill="#222" stroke="#222" stroke-width="0.12">Bestellnummer</text>
<text x="1481.2" y="193" font-size="8.5" fill="#222" stroke="#222" stroke-width="0.12">Hersteller</text>
<text x="1481.2" y="207.5" font-size="8.5" fill="#222" stroke="#222" stroke-width="0.12">Lieferant</text>
<text x="1526.7" y="193" font-size="8.5" fill="#222" stroke="#222" stroke-width="0.12">Artikelnummer</text>
<text x="1526.7" y="207.5" font-size="6.4" fill="#222" stroke="#222" stroke-width="0.12">Funktionstext</text>
<text x="882.5" y="222.8" font-size="8.85" fill="#1a1a1a" stroke="#1a1a1a" stroke-width="0.2">=12.02.E4+12.F11-H11</text>
<text x="882.5" y="234.3" font-size="7.1" fill="#1a1a1a" stroke="#1a1a1a" stroke-width="0.2">=12.02.E4/1.7</text>
<text x="1016.5" y="222.8" font-size="8.8" fill="#1a1a1a" text-anchor="end" stroke="#1a1a1a" stroke-width="0.2">1</text>
<text x="1040.8" y="222.8" font-size="8.4" fill="#1a1a1a" stroke="#1a1a1a" stroke-width="0.2">SCHILDTRAEGER</text>
<text x="1040.8" y="234.3" font-size="8.4" fill="#1a1a1a" stroke="#1a1a1a" stroke-width="0.2">SIRIUS ACT Schildträger</text>
<text x="1367.5" y="222.8" font-size="8.4" fill="#1a1a1a" stroke="#1a1a1a" stroke-width="0.2">3SU1900-0AH10-0AA0</text>
<text x="1367.5" y="234.3" font-size="8.4" fill="#1a1a1a" stroke="#1a1a1a" stroke-width="0.2">3SU1900-0AH10-0AA0</text>
<text x="1481.2" y="222.8" font-size="8.4" fill="#1a1a1a" stroke="#1a1a1a" stroke-width="0.2">SIE</text>
<text x="1481.2" y="234.3" font-size="8.4" fill="#1a1a1a" stroke="#1a1a1a" stroke-width="0.2">SIE</text>
<text x="1526.7" y="222.8" font-size="8.4" fill="#1a1a1a" stroke="#1a1a1a" stroke-width="0.2">SIE.3SU1900-0AH10-0AA0</text>
<line x1="878" y1="239.7" x2="1776" y2="239.7" stroke="#888" stroke-width="0.9" stroke-dasharray="1.3,1.7"/>
<line x1="1765.5" y1="212.5" x2="1765.5" y2="229.5" stroke="#999" stroke-width="0.8" stroke-dasharray="1,1.5"/>
<text x="882.5" y="252" font-size="8.85" fill="#1a1a1a" stroke="#1a1a1a" stroke-width="0.2">=12.02.E4+12.F11-H11</text>
<text x="882.5" y="263.5" font-size="7.1" fill="#1a1a1a" stroke="#1a1a1a" stroke-width="0.2">=12.02.E4/1.7</text>
<text x="1016.5" y="252" font-size="8.8" fill="#1a1a1a" text-anchor="end" stroke="#1a1a1a" stroke-width="0.2">1</text>
<text x="1040.8" y="252" font-size="8.4" fill="#1a1a1a" stroke="#1a1a1a" stroke-width="0.2">BEZEICHNUNGSSCHILD ZUM SCHNAPPEN</text>
<text x="1040.8" y="263.5" font-size="8.4" fill="#1a1a1a" stroke="#1a1a1a" stroke-width="0.2">SIRIUS ACT Bezeichnungsschild</text>
<text x="1367.5" y="252" font-size="8.4" fill="#1a1a1a" stroke="#1a1a1a" stroke-width="0.2">3SU1900-0AD81-0AA0</text>
<text x="1367.5" y="263.5" font-size="8.4" fill="#1a1a1a" stroke="#1a1a1a" stroke-width="0.2">3SU1900-0AD81-0AA0</text>
<text x="1481.2" y="252" font-size="8.4" fill="#1a1a1a" stroke="#1a1a1a" stroke-width="0.2">SIE</text>
<text x="1481.2" y="263.5" font-size="8.4" fill="#1a1a1a" stroke="#1a1a1a" stroke-width="0.2">SIE</text>
<text x="1526.7" y="252" font-size="8.4" fill="#1a1a1a" stroke="#1a1a1a" stroke-width="0.2">SIE.3SU1900-0AD81-0AA0</text>
<line x1="878" y1="268.9" x2="1776" y2="268.9" stroke="#888" stroke-width="0.9" stroke-dasharray="1.3,1.7"/>
<line x1="1765.5" y1="241.7" x2="1765.5" y2="258.7" stroke="#999" stroke-width="0.8" stroke-dasharray="1,1.5"/>
<text x="882.5" y="281.2" font-size="8.85" fill="#1a1a1a" stroke="#1a1a1a" stroke-width="0.2">=12.02.E4+12.F11-K11</text>
<text x="882.5" y="292.7" font-size="7.1" fill="#1a1a1a" stroke="#1a1a1a" stroke-width="0.2">=12.02.E4/1.8</text>
<text x="1016.5" y="281.2" font-size="8.8" fill="#1a1a1a" text-anchor="end" stroke="#1a1a1a" stroke-width="0.2">1</text>
<text x="1040.8" y="281.2" font-size="8.4" fill="#1a1a1a" stroke="#1a1a1a" stroke-width="0.2">HILFSSCHUETZ,2S+2OE,AC230V 50/60HZ</text>
<text x="1040.8" y="292.7" font-size="8.4" fill="#1a1a1a" stroke="#1a1a1a" stroke-width="0.2">SIRIUS Hilfsschütz</text>
<text x="1367.5" y="281.2" font-size="8.4" fill="#1a1a1a" stroke="#1a1a1a" stroke-width="0.2">3RH2122-1AP00</text>
<text x="1367.5" y="292.7" font-size="8.4" fill="#1a1a1a" stroke="#1a1a1a" stroke-width="0.2">3RH2122-1AP00</text>
<text x="1481.2" y="281.2" font-size="8.4" fill="#1a1a1a" stroke="#1a1a1a" stroke-width="0.2">SIE</text>
<text x="1481.2" y="292.7" font-size="8.4" fill="#1a1a1a" stroke="#1a1a1a" stroke-width="0.2">SIE</text>
<text x="1526.7" y="281.2" font-size="8.4" fill="#1a1a1a" stroke="#1a1a1a" stroke-width="0.2">SIE.3RH2122-1AP00</text>
<text x="1526.7" y="292.7" font-size="6.5" fill="#1a1a1a" stroke="#1a1a1a" stroke-width="0.2">12.02.E4-K11</text>
<line x1="878" y1="298.1" x2="1776" y2="298.1" stroke="#888" stroke-width="0.9" stroke-dasharray="1.3,1.7"/>
<line x1="1765.5" y1="270.9" x2="1765.5" y2="287.9" stroke="#999" stroke-width="0.8" stroke-dasharray="1,1.5"/>
<text x="882.5" y="310.4" font-size="8.85" fill="#1a1a1a" stroke="#1a1a1a" stroke-width="0.2">=12.02.E4+12.F11-K11</text>
<text x="882.5" y="321.9" font-size="7.1" fill="#1a1a1a" stroke="#1a1a1a" stroke-width="0.2">=12.02.E4/1.8</text>
<text x="1016.5" y="310.4" font-size="8.8" fill="#1a1a1a" text-anchor="end" stroke="#1a1a1a" stroke-width="0.2">1</text>
<text x="1040.8" y="310.4" font-size="8.4" fill="#1a1a1a" stroke="#1a1a1a" stroke-width="0.2">UEBERSPANNUNGSBEGRENZER, VARISTOR,</text>
<text x="1040.8" y="321.9" font-size="8.4" fill="#1a1a1a" stroke="#1a1a1a" stroke-width="0.2">AC 127...240V, DC 150...250V, FUER HILFS- UND MOTORSCHUETZE</text>
<text x="1367.5" y="310.4" font-size="8.4" fill="#1a1a1a" stroke="#1a1a1a" stroke-width="0.2">3RT2916-1BD00</text>
<text x="1367.5" y="321.9" font-size="8.4" fill="#1a1a1a" stroke="#1a1a1a" stroke-width="0.2">3RT29161BD00</text>
<text x="1481.2" y="310.4" font-size="8.4" fill="#1a1a1a" stroke="#1a1a1a" stroke-width="0.2">SIE</text>
<text x="1481.2" y="321.9" font-size="8.4" fill="#1a1a1a" stroke="#1a1a1a" stroke-width="0.2">SIE</text>
<text x="1526.7" y="310.4" font-size="8.4" fill="#1a1a1a" stroke="#1a1a1a" stroke-width="0.2">SIE.3RT2916-1BD00</text>
<text x="1526.7" y="321.9" font-size="8.4" fill="#1a1a1a" stroke="#1a1a1a" stroke-width="0.2">=</text>
<line x1="878" y1="327.3" x2="1776" y2="327.3" stroke="#888" stroke-width="0.9" stroke-dasharray="1.3,1.7"/>
<line x1="1765.5" y1="300.1" x2="1765.5" y2="317.1" stroke="#999" stroke-width="0.8" stroke-dasharray="1,1.5"/>
<text x="882.5" y="339.6" font-size="8.85" fill="#1a1a1a" stroke="#1a1a1a" stroke-width="0.2">=12.02.E6+12.F11-F11</text>
<text x="882.5" y="351.1" font-size="7.1" fill="#1a1a1a" stroke="#1a1a1a" stroke-width="0.2">=12.02.E6/1.2</text>
<text x="1016.5" y="339.6" font-size="8.8" fill="#1a1a1a" text-anchor="end" stroke="#1a1a1a" stroke-width="0.2">1</text>
<text x="1040.8" y="339.6" font-size="8.4" fill="#1a1a1a" stroke="#1a1a1a" stroke-width="0.2">LS-SCHALTER 6KA 2POL B10</text>
<text x="1040.8" y="351.1" font-size="8.4" fill="#1a1a1a" stroke="#1a1a1a" stroke-width="0.2">SENTRON Leitungsschutzschalter</text>
<text x="1367.5" y="339.6" font-size="8.4" fill="#1a1a1a" stroke="#1a1a1a" stroke-width="0.2">5SY6210-6</text>
<text x="1367.5" y="351.1" font-size="8.4" fill="#1a1a1a" stroke="#1a1a1a" stroke-width="0.2">5SY6210-6</text>
<text x="1481.2" y="339.6" font-size="8.4" fill="#1a1a1a" stroke="#1a1a1a" stroke-width="0.2">SIE</text>
<text x="1481.2" y="351.1" font-size="8.4" fill="#1a1a1a" stroke="#1a1a1a" stroke-width="0.2">SIE</text>
<text x="1526.7" y="339.6" font-size="8.4" fill="#1a1a1a" stroke="#1a1a1a" stroke-width="0.2">SIE.5SY6210-6</text>
<line x1="878" y1="356.5" x2="1776" y2="356.5" stroke="#888" stroke-width="0.9" stroke-dasharray="1.3,1.7"/>
<line x1="1765.5" y1="329.3" x2="1765.5" y2="346.3" stroke="#999" stroke-width="0.8" stroke-dasharray="1,1.5"/>
<text x="882.5" y="368.8" font-size="8.85" fill="#1a1a1a" stroke="#1a1a1a" stroke-width="0.2">=12.02.E6+12.F11-X2</text>
<text x="882.5" y="380.3" font-size="7.1" fill="#1a1a1a" stroke="#1a1a1a" stroke-width="0.2">=12.02.E6/1.2</text>
<text x="1016.5" y="368.8" font-size="8.8" fill="#1a1a1a" text-anchor="end" stroke="#1a1a1a" stroke-width="0.2">2</text>
<text x="1007.7" y="380.3" font-size="6.8" fill="#1a1a1a" text-anchor="middle" stroke="#1a1a1a" stroke-width="0.2">Stück</text>
<text x="1040.8" y="368.8" font-size="8.4" fill="#1a1a1a" stroke="#1a1a1a" stroke-width="0.2">Durchgangsklemme</text>
<text x="1367.5" y="368.8" font-size="8.4" fill="#1a1a1a" stroke="#1a1a1a" stroke-width="0.2">UT 4</text>
<text x="1367.5" y="380.3" font-size="8.4" fill="#1a1a1a" stroke="#1a1a1a" stroke-width="0.2">3044102</text>
<text x="1481.2" y="368.8" font-size="8.4" fill="#1a1a1a" stroke="#1a1a1a" stroke-width="0.2">PXC</text>
<text x="1481.2" y="380.3" font-size="8.4" fill="#1a1a1a" stroke="#1a1a1a" stroke-width="0.2">PXC</text>
<text x="1526.7" y="368.8" font-size="8.4" fill="#1a1a1a" stroke="#1a1a1a" stroke-width="0.2">PXC.3044102</text>
<line x1="878" y1="385.7" x2="1776" y2="385.7" stroke="#888" stroke-width="0.9" stroke-dasharray="1.3,1.7"/>
<line x1="1765.5" y1="358.5" x2="1765.5" y2="375.5" stroke="#999" stroke-width="0.8" stroke-dasharray="1,1.5"/>
<text x="882.5" y="398" font-size="8.85" fill="#1a1a1a" stroke="#1a1a1a" stroke-width="0.2">=12.02.E6+12.F11-X2</text>
<text x="882.5" y="409.5" font-size="7.1" fill="#1a1a1a" stroke="#1a1a1a" stroke-width="0.2">=12.02.E6/1.2</text>
<text x="1016.5" y="398" font-size="8.8" fill="#1a1a1a" text-anchor="end" stroke="#1a1a1a" stroke-width="0.2">1</text>
<text x="1007.7" y="409.5" font-size="6.8" fill="#1a1a1a" text-anchor="middle" stroke="#1a1a1a" stroke-width="0.2">Stück</text>
<text x="1040.8" y="398" font-size="8.4" fill="#1a1a1a" stroke="#1a1a1a" stroke-width="0.2">Abschlussdeckel</text>
<text x="1367.5" y="398" font-size="8.4" fill="#1a1a1a" stroke="#1a1a1a" stroke-width="0.2">D-UT 2,5/10</text>
<text x="1367.5" y="409.5" font-size="8.4" fill="#1a1a1a" stroke="#1a1a1a" stroke-width="0.2">3047028</text>
<text x="1481.2" y="398" font-size="8.4" fill="#1a1a1a" stroke="#1a1a1a" stroke-width="0.2">PXC</text>
<text x="1481.2" y="409.5" font-size="8.4" fill="#1a1a1a" stroke="#1a1a1a" stroke-width="0.2">PXC</text>
<text x="1526.7" y="398" font-size="8.4" fill="#1a1a1a" stroke="#1a1a1a" stroke-width="0.2">PXC.3047028</text>
<line x1="878" y1="414.9" x2="1776" y2="414.9" stroke="#888" stroke-width="0.9" stroke-dasharray="1.3,1.7"/>
<line x1="1765.5" y1="387.7" x2="1765.5" y2="404.7" stroke="#999" stroke-width="0.8" stroke-dasharray="1,1.5"/>
<text x="882.5" y="427.2" font-size="8.85" fill="#1a1a1a" stroke="#1a1a1a" stroke-width="0.2">=12.02.E6+12.F11-X2</text>
<text x="882.5" y="438.7" font-size="7.1" fill="#1a1a1a" stroke="#1a1a1a" stroke-width="0.2">=12.02.E6/1.2</text>
<text x="1016.5" y="427.2" font-size="8.8" fill="#1a1a1a" text-anchor="end" stroke="#1a1a1a" stroke-width="0.2">1</text>
<text x="1007.7" y="438.7" font-size="6.8" fill="#1a1a1a" text-anchor="middle" stroke="#1a1a1a" stroke-width="0.2">Stück</text>
<text x="1040.8" y="427.2" font-size="8.4" fill="#1a1a1a" stroke="#1a1a1a" stroke-width="0.2">Endhalter</text>
<text x="1367.5" y="427.2" font-size="8.4" fill="#1a1a1a" stroke="#1a1a1a" stroke-width="0.2">CLIPFIX 35</text>
<text x="1367.5" y="438.7" font-size="8.4" fill="#1a1a1a" stroke="#1a1a1a" stroke-width="0.2">3022218</text>
<text x="1481.2" y="427.2" font-size="8.4" fill="#1a1a1a" stroke="#1a1a1a" stroke-width="0.2">PXC</text>
<text x="1481.2" y="438.7" font-size="8.4" fill="#1a1a1a" stroke="#1a1a1a" stroke-width="0.2">PXC</text>
<text x="1526.7" y="427.2" font-size="8.4" fill="#1a1a1a" stroke="#1a1a1a" stroke-width="0.2">PXC.3022218</text>
<line x1="878" y1="444.1" x2="1776" y2="444.1" stroke="#888" stroke-width="0.9" stroke-dasharray="1.3,1.7"/>
<line x1="1765.5" y1="416.9" x2="1765.5" y2="433.9" stroke="#999" stroke-width="0.8" stroke-dasharray="1,1.5"/>
<text x="882.5" y="456.4" font-size="8.85" fill="#1a1a1a" stroke="#1a1a1a" stroke-width="0.2">=12.02.E9+12.F11-K11</text>
<text x="882.5" y="467.9" font-size="7.1" fill="#1a1a1a" stroke="#1a1a1a" stroke-width="0.2">=12.02.E9/1.1</text>
<text x="1016.5" y="456.4" font-size="8.8" fill="#1a1a1a" text-anchor="end" stroke="#1a1a1a" stroke-width="0.2">1</text>
<text x="1040.8" y="456.4" font-size="8.4" fill="#1a1a1a" stroke="#1a1a1a" stroke-width="0.2">HILFSSCHUETZ,2S+2OE,AC230V 50/60HZ</text>
<text x="1040.8" y="467.9" font-size="8.4" fill="#1a1a1a" stroke="#1a1a1a" stroke-width="0.2">SIRIUS Hilfsschütz</text>
<text x="1367.5" y="456.4" font-size="8.4" fill="#1a1a1a" stroke="#1a1a1a" stroke-width="0.2">3RH2122-1AP00</text>
<text x="1367.5" y="467.9" font-size="8.4" fill="#1a1a1a" stroke="#1a1a1a" stroke-width="0.2">3RH2122-1AP00</text>
<text x="1481.2" y="456.4" font-size="8.4" fill="#1a1a1a" stroke="#1a1a1a" stroke-width="0.2">SIE</text>
<text x="1481.2" y="467.9" font-size="8.4" fill="#1a1a1a" stroke="#1a1a1a" stroke-width="0.2">SIE</text>
<text x="1526.7" y="456.4" font-size="8.4" fill="#1a1a1a" stroke="#1a1a1a" stroke-width="0.2">SIE.3RH2122-1AP00</text>
<text x="1526.7" y="467.9" font-size="6.5" fill="#1a1a1a" stroke="#1a1a1a" stroke-width="0.2">12.02.E9-K11</text>
<line x1="878" y1="473.3" x2="1776" y2="473.3" stroke="#888" stroke-width="0.9" stroke-dasharray="1.3,1.7"/>
<line x1="1765.5" y1="446.1" x2="1765.5" y2="463.1" stroke="#999" stroke-width="0.8" stroke-dasharray="1,1.5"/>
<text x="882.5" y="485.6" font-size="8.85" fill="#1a1a1a" stroke="#1a1a1a" stroke-width="0.2">=12.02.E9+12.F11-K11</text>
<text x="882.5" y="497.1" font-size="7.1" fill="#1a1a1a" stroke="#1a1a1a" stroke-width="0.2">=12.02.E9/1.1</text>
<text x="1016.5" y="485.6" font-size="8.8" fill="#1a1a1a" text-anchor="end" stroke="#1a1a1a" stroke-width="0.2">1</text>
<text x="1040.8" y="485.6" font-size="8.4" fill="#1a1a1a" stroke="#1a1a1a" stroke-width="0.2">UEBERSPANNUNGSBEGRENZER, VARISTOR,</text>
<text x="1040.8" y="497.1" font-size="8.4" fill="#1a1a1a" stroke="#1a1a1a" stroke-width="0.2">AC 127...240V, DC 150...250V, FUER HILFS- UND MOTORSCHUETZE</text>
<text x="1367.5" y="485.6" font-size="8.4" fill="#1a1a1a" stroke="#1a1a1a" stroke-width="0.2">3RT2916-1BD00</text>
<text x="1367.5" y="497.1" font-size="8.4" fill="#1a1a1a" stroke="#1a1a1a" stroke-width="0.2">3RT29161BD00</text>
<text x="1481.2" y="485.6" font-size="8.4" fill="#1a1a1a" stroke="#1a1a1a" stroke-width="0.2">SIE</text>
<text x="1481.2" y="497.1" font-size="8.4" fill="#1a1a1a" stroke="#1a1a1a" stroke-width="0.2">SIE</text>
<text x="1526.7" y="485.6" font-size="8.4" fill="#1a1a1a" stroke="#1a1a1a" stroke-width="0.2">SIE.3RT2916-1BD00</text>
<text x="1526.7" y="497.1" font-size="8.4" fill="#1a1a1a" stroke="#1a1a1a" stroke-width="0.2">=</text>
<line x1="878" y1="502.5" x2="1776" y2="502.5" stroke="#888" stroke-width="0.9" stroke-dasharray="1.3,1.7"/>
<line x1="1765.5" y1="475.3" x2="1765.5" y2="492.3" stroke="#999" stroke-width="0.8" stroke-dasharray="1,1.5"/>
<text x="882.5" y="514.8" font-size="8.85" fill="#1a1a1a" stroke="#1a1a1a" stroke-width="0.2">=12.02.E9+12.F11-K12</text>
<text x="882.5" y="526.3" font-size="7.1" fill="#1a1a1a" stroke="#1a1a1a" stroke-width="0.2">=12.02.E9/1.2</text>
<text x="1016.5" y="514.8" font-size="8.8" fill="#1a1a1a" text-anchor="end" stroke="#1a1a1a" stroke-width="0.2">1</text>
<text x="1040.8" y="514.8" font-size="8.4" fill="#1a1a1a" stroke="#1a1a1a" stroke-width="0.2">HILFSSCHUETZ,2S+2OE,AC230V 50/60HZ</text>
<text x="1040.8" y="526.3" font-size="8.4" fill="#1a1a1a" stroke="#1a1a1a" stroke-width="0.2">SIRIUS Hilfsschütz</text>
<text x="1367.5" y="514.8" font-size="8.4" fill="#1a1a1a" stroke="#1a1a1a" stroke-width="0.2">3RH2122-1AP00</text>
<text x="1367.5" y="526.3" font-size="8.4" fill="#1a1a1a" stroke="#1a1a1a" stroke-width="0.2">3RH2122-1AP00</text>
<text x="1481.2" y="514.8" font-size="8.4" fill="#1a1a1a" stroke="#1a1a1a" stroke-width="0.2">SIE</text>
<text x="1481.2" y="526.3" font-size="8.4" fill="#1a1a1a" stroke="#1a1a1a" stroke-width="0.2">SIE</text>
<text x="1526.7" y="514.8" font-size="8.4" fill="#1a1a1a" stroke="#1a1a1a" stroke-width="0.2">SIE.3RH2122-1AP00</text>
<text x="1526.7" y="526.3" font-size="6.5" fill="#1a1a1a" stroke="#1a1a1a" stroke-width="0.2">12.02.E9-K12</text>
<line x1="878" y1="531.7" x2="1776" y2="531.7" stroke="#888" stroke-width="0.9" stroke-dasharray="1.3,1.7"/>
<line x1="1765.5" y1="504.5" x2="1765.5" y2="521.5" stroke="#999" stroke-width="0.8" stroke-dasharray="1,1.5"/>
<text x="882.5" y="544" font-size="8.85" fill="#1a1a1a" stroke="#1a1a1a" stroke-width="0.2">=12.02.E9+12.F11-K12</text>
<text x="882.5" y="555.5" font-size="7.1" fill="#1a1a1a" stroke="#1a1a1a" stroke-width="0.2">=12.02.E9/1.2</text>
<text x="1016.5" y="544" font-size="8.8" fill="#1a1a1a" text-anchor="end" stroke="#1a1a1a" stroke-width="0.2">1</text>
<text x="1040.8" y="544" font-size="8.4" fill="#1a1a1a" stroke="#1a1a1a" stroke-width="0.2">UEBERSPANNUNGSBEGRENZER, VARISTOR,</text>
<text x="1040.8" y="555.5" font-size="8.4" fill="#1a1a1a" stroke="#1a1a1a" stroke-width="0.2">AC 127...240V, DC 150...250V, FUER HILFS- UND MOTORSCHUETZE</text>
<text x="1367.5" y="544" font-size="8.4" fill="#1a1a1a" stroke="#1a1a1a" stroke-width="0.2">3RT2916-1BD00</text>
<text x="1367.5" y="555.5" font-size="8.4" fill="#1a1a1a" stroke="#1a1a1a" stroke-width="0.2">3RT29161BD00</text>
<text x="1481.2" y="544" font-size="8.4" fill="#1a1a1a" stroke="#1a1a1a" stroke-width="0.2">SIE</text>
<text x="1481.2" y="555.5" font-size="8.4" fill="#1a1a1a" stroke="#1a1a1a" stroke-width="0.2">SIE</text>
<text x="1526.7" y="544" font-size="8.4" fill="#1a1a1a" stroke="#1a1a1a" stroke-width="0.2">SIE.3RT2916-1BD00</text>
<text x="1526.7" y="555.5" font-size="8.4" fill="#1a1a1a" stroke="#1a1a1a" stroke-width="0.2">=</text>
<line x1="878" y1="560.9" x2="1776" y2="560.9" stroke="#888" stroke-width="0.9" stroke-dasharray="1.3,1.7"/>
<line x1="1765.5" y1="533.7" x2="1765.5" y2="550.7" stroke="#999" stroke-width="0.8" stroke-dasharray="1,1.5"/>
<text x="882.5" y="573.2" font-size="8.85" fill="#1a1a1a" stroke="#1a1a1a" stroke-width="0.2">=12.02.E9+12.F11-K13</text>
<text x="882.5" y="584.7" font-size="7.1" fill="#1a1a1a" stroke="#1a1a1a" stroke-width="0.2">=12.02.E9/1.3</text>
<text x="1016.5" y="573.2" font-size="8.8" fill="#1a1a1a" text-anchor="end" stroke="#1a1a1a" stroke-width="0.2">1</text>
<text x="1040.8" y="573.2" font-size="8.4" fill="#1a1a1a" stroke="#1a1a1a" stroke-width="0.2">HILFSSCHUETZ</text>
<text x="1040.8" y="584.7" font-size="8.4" fill="#1a1a1a" stroke="#1a1a1a" stroke-width="0.2">SIRIUS</text>
<text x="1367.5" y="573.2" font-size="8.4" fill="#1a1a1a" stroke="#1a1a1a" stroke-width="0.2">3RH2122-1AP00</text>
<text x="1367.5" y="584.7" font-size="8.4" fill="#1a1a1a" stroke="#1a1a1a" stroke-width="0.2">3RH2122-1AP00</text>
<text x="1481.2" y="573.2" font-size="8.4" fill="#1a1a1a" stroke="#1a1a1a" stroke-width="0.2">SIE</text>
<text x="1481.2" y="584.7" font-size="8.4" fill="#1a1a1a" stroke="#1a1a1a" stroke-width="0.2">SIE</text>
<text x="1526.7" y="573.2" font-size="8.4" fill="#1a1a1a" stroke="#1a1a1a" stroke-width="0.2">SIE</text>
<line x1="878" y1="590.1" x2="1776" y2="590.1" stroke="#888" stroke-width="0.9" stroke-dasharray="1.3,1.7"/>
<line x1="1765.5" y1="562.9" x2="1765.5" y2="579.9" stroke="#999" stroke-width="0.8" stroke-dasharray="1,1.5"/>
<line x1="875.8" y1="154" x2="875.8" y2="582" stroke="#000" stroke-width="2"/>
</g>
<rect x="890" y="540" width="833" height="278" fill="#fff"/>
<line x1="890" y1="546.9" x2="1723" y2="546.9" stroke="#3c3c3c" stroke-width="1.4"/>
<line x1="974.3" y1="540" x2="974.3" y2="546.9" stroke="#3c3c3c" stroke-width="1.3"/>
<line x1="1058.9" y1="540" x2="1058.9" y2="546.9" stroke="#3c3c3c" stroke-width="1.3"/>
<line x1="1143.5" y1="540" x2="1143.5" y2="546.9" stroke="#3c3c3c" stroke-width="1.3"/>
<line x1="1228.1" y1="540" x2="1228.1" y2="546.9" stroke="#3c3c3c" stroke-width="1.3"/>
<line x1="1312.7" y1="540" x2="1312.7" y2="546.9" stroke="#3c3c3c" stroke-width="1.3"/>
<line x1="1397.3" y1="540" x2="1397.3" y2="546.9" stroke="#3c3c3c" stroke-width="1.3"/>
<line x1="1481.9" y1="540" x2="1481.9" y2="546.9" stroke="#3c3c3c" stroke-width="1.3"/>
<line x1="1566.5" y1="540" x2="1566.5" y2="546.9" stroke="#3c3c3c" stroke-width="1.3"/>
<line x1="1651.1" y1="540" x2="1651.1" y2="546.9" stroke="#3c3c3c" stroke-width="1.3"/>
<line x1="905.6" y1="546.9" x2="905.6" y2="818" stroke="#3c3c3c" stroke-width="1.2"/>
<line x1="890" y1="636" x2="905.6" y2="636" stroke="#3c3c3c" stroke-width="1"/>
<text x="897" y="634" font-size="3.8" fill="#333" transform="rotate(-90 897 634)" stroke="#333" stroke-width="0.12">Copyright acc. to</text>
<text x="902.5" y="634" font-size="3.8" fill="#333" transform="rotate(-90 902.5 634)" stroke="#333" stroke-width="0.12">DIN ISO 16016</text>
<text x="897" y="818" font-size="3.8" fill="#333" transform="rotate(-90 897 818)" stroke="#333" stroke-width="0.12">...tion is prohibited.</text>
<text x="1715.4" y="563" font-size="5.9" fill="#222" text-anchor="end" stroke="#222" stroke-width="0.12">LAG-Basic-F10-Kopie</text>
<text x="913.5" y="578.8" font-size="14.6" fill="#000" stroke="#000" stroke-width="0.12">Cable overview</text>
<line x1="913.5" y1="587.2" x2="1711.5" y2="587.2" stroke="#3c3c3c" stroke-width="1.3"/>
<line x1="913.5" y1="607.4" x2="1711.5" y2="607.4" stroke="#3c3c3c" stroke-width="1.3"/>
<line x1="913.5" y1="587.2" x2="913.5" y2="818" stroke="#3c3c3c" stroke-width="1.3"/>
<line x1="1711.5" y1="587.2" x2="1711.5" y2="818" stroke="#3c3c3c" stroke-width="1.3"/>
<line x1="1022.3" y1="587.2" x2="1022.3" y2="818" stroke="#3c3c3c" stroke-width="1.3"/>
<line x1="1151.6" y1="587.2" x2="1151.6" y2="818" stroke="#3c3c3c" stroke-width="1.3"/>
<line x1="1280.6" y1="587.2" x2="1280.6" y2="818" stroke="#3c3c3c" stroke-width="1.3"/>
<line x1="1395.2" y1="587.2" x2="1395.2" y2="818" stroke="#3c3c3c" stroke-width="1.3"/>
<line x1="1471.5" y1="587.2" x2="1471.5" y2="818" stroke="#3c3c3c" stroke-width="1.3"/>
<line x1="913.5" y1="619.5" x2="1711.5" y2="619.5" stroke="#3c3c3c" stroke-width="1.3"/>
<line x1="913.5" y1="631.58" x2="1711.5" y2="631.58" stroke="#3c3c3c" stroke-width="1.3"/>
<line x1="913.5" y1="643.66" x2="1711.5" y2="643.66" stroke="#3c3c3c" stroke-width="1.3"/>
<line x1="913.5" y1="655.74" x2="1711.5" y2="655.74" stroke="#3c3c3c" stroke-width="1.3"/>
<line x1="913.5" y1="667.82" x2="1711.5" y2="667.82" stroke="#3c3c3c" stroke-width="1.3"/>
<line x1="913.5" y1="679.9" x2="1711.5" y2="679.9" stroke="#3c3c3c" stroke-width="1.3"/>
<line x1="913.5" y1="691.98" x2="1711.5" y2="691.98" stroke="#3c3c3c" stroke-width="1.3"/>
<line x1="913.5" y1="704.06" x2="1711.5" y2="704.06" stroke="#3c3c3c" stroke-width="1.3"/>
<line x1="913.5" y1="716.14" x2="1711.5" y2="716.14" stroke="#3c3c3c" stroke-width="1.3"/>
<line x1="913.5" y1="728.22" x2="1711.5" y2="728.22" stroke="#3c3c3c" stroke-width="1.3"/>
<line x1="913.5" y1="740.3" x2="1711.5" y2="740.3" stroke="#3c3c3c" stroke-width="1.3"/>
<line x1="913.5" y1="752.38" x2="1711.5" y2="752.38" stroke="#3c3c3c" stroke-width="1.3"/>
<line x1="913.5" y1="764.46" x2="1711.5" y2="764.46" stroke="#3c3c3c" stroke-width="1.3"/>
<line x1="913.5" y1="776.54" x2="1711.5" y2="776.54" stroke="#3c3c3c" stroke-width="1.3"/>
<line x1="913.5" y1="788.62" x2="1711.5" y2="788.62" stroke="#3c3c3c" stroke-width="1.3"/>
<line x1="913.5" y1="800.7" x2="1711.5" y2="800.7" stroke="#3c3c3c" stroke-width="1.3"/>
<line x1="913.5" y1="812.78" x2="1711.5" y2="812.78" stroke="#3c3c3c" stroke-width="1.3"/>
<text x="945.6" y="600" font-size="6.15" fill="#1a1a1a" text-anchor="middle" stroke="#1a1a1a" stroke-width="0.15">Cable name</text>
<text x="1039" y="600" font-size="6.15" fill="#1a1a1a" stroke="#1a1a1a" stroke-width="0.15">Source (from)</text>
<text x="1164.5" y="600" font-size="6.15" fill="#1a1a1a" stroke="#1a1a1a" stroke-width="0.15">Target (to)</text>
<text x="1293.8" y="600" font-size="6.15" fill="#1a1a1a" stroke="#1a1a1a" stroke-width="0.15">Cable type</text>
<text x="1433" y="595.5" font-size="6.15" fill="#1a1a1a" text-anchor="middle" stroke="#1a1a1a" stroke-width="0.15">Conductor</text>
<text x="1433" y="603.5" font-size="6.15" fill="#1a1a1a" text-anchor="middle" stroke="#1a1a1a" stroke-width="0.15">Cross-section [mm²]</text>
<text x="1485.6" y="600" font-size="6.15" fill="#1a1a1a" stroke="#1a1a1a" stroke-width="0.15">Function text</text>
<text x="917.4" y="615.7" font-size="5.8" fill="#1a1a1a" stroke="#1a1a1a" stroke-width="0.15">-W1</text>
<text x="1026.7" y="615.7" font-size="5.75" fill="#1a1a1a" stroke="#1a1a1a" stroke-width="0.15">+JB1-XPE</text>
<text x="1155.7" y="615.7" font-size="5.75" fill="#1a1a1a" stroke="#1a1a1a" stroke-width="0.15">+Field-GS01</text>
<text x="1284.5" y="615.7" font-size="5.75" fill="#1a1a1a" stroke="#1a1a1a" stroke-width="0.15">RE-2Y(St)Yv 2x2x1,3</text>
<text x="1433" y="615.7" font-size="5.75" fill="#1a1a1a" text-anchor="middle" stroke="#1a1a1a" stroke-width="0.15">4x1,3</text>
<text x="917.4" y="627.78" font-size="5.8" fill="#1a1a1a" stroke="#1a1a1a" stroke-width="0.15"></text>
<text x="1026.7" y="627.78" font-size="5.75" fill="#1a1a1a" stroke="#1a1a1a" stroke-width="0.15">+JB1-X1</text>
<text x="1155.7" y="627.78" font-size="5.75" fill="#1a1a1a" stroke="#1a1a1a" stroke-width="0.15"></text>
<text x="1284.5" y="627.78" font-size="5.75" fill="#1a1a1a" stroke="#1a1a1a" stroke-width="0.15"></text>
<text x="917.4" y="639.86" font-size="5.8" fill="#1a1a1a" stroke="#1a1a1a" stroke-width="0.15">-W2</text>
<text x="1026.7" y="639.86" font-size="5.75" fill="#1a1a1a" stroke="#1a1a1a" stroke-width="0.15">+JB1-XPE</text>
<text x="1155.7" y="639.86" font-size="5.75" fill="#1a1a1a" stroke="#1a1a1a" stroke-width="0.15">+Field-GS02</text>
<text x="1284.5" y="639.86" font-size="5.75" fill="#1a1a1a" stroke="#1a1a1a" stroke-width="0.15">RE-2Y(St)Yv 2x2x1,3</text>
<text x="1433" y="639.86" font-size="5.75" fill="#1a1a1a" text-anchor="middle" stroke="#1a1a1a" stroke-width="0.15">4x1,3</text>
<text x="917.4" y="651.94" font-size="5.8" fill="#1a1a1a" stroke="#1a1a1a" stroke-width="0.15"></text>
<text x="1026.7" y="651.94" font-size="5.75" fill="#1a1a1a" stroke="#1a1a1a" stroke-width="0.15">+JB1-X1</text>
<text x="1155.7" y="651.94" font-size="5.75" fill="#1a1a1a" stroke="#1a1a1a" stroke-width="0.15"></text>
<text x="1284.5" y="651.94" font-size="5.75" fill="#1a1a1a" stroke="#1a1a1a" stroke-width="0.15"></text>
<text x="917.4" y="664.02" font-size="5.8" fill="#1a1a1a" stroke="#1a1a1a" stroke-width="0.15">-W3</text>
<text x="1026.7" y="664.02" font-size="5.75" fill="#1a1a1a" stroke="#1a1a1a" stroke-width="0.15">+JB1-XPE</text>
<text x="1155.7" y="664.02" font-size="5.75" fill="#1a1a1a" stroke="#1a1a1a" stroke-width="0.15">+Field-GS03</text>
<text x="1284.5" y="664.02" font-size="5.75" fill="#1a1a1a" stroke="#1a1a1a" stroke-width="0.15">RE-2Y(St)Yv 2x2x1,3</text>
<text x="1433" y="664.02" font-size="5.75" fill="#1a1a1a" text-anchor="middle" stroke="#1a1a1a" stroke-width="0.15">4x1,3</text>
<text x="917.4" y="676.1" font-size="5.8" fill="#1a1a1a" stroke="#1a1a1a" stroke-width="0.15"></text>
<text x="1026.7" y="676.1" font-size="5.75" fill="#1a1a1a" stroke="#1a1a1a" stroke-width="0.15">+JB1-X1</text>
<text x="1155.7" y="676.1" font-size="5.75" fill="#1a1a1a" stroke="#1a1a1a" stroke-width="0.15"></text>
<text x="1284.5" y="676.1" font-size="5.75" fill="#1a1a1a" stroke="#1a1a1a" stroke-width="0.15"></text>
<text x="917.4" y="688.18" font-size="5.8" fill="#1a1a1a" stroke="#1a1a1a" stroke-width="0.15">-W4</text>
<text x="1026.7" y="688.18" font-size="5.75" fill="#1a1a1a" stroke="#1a1a1a" stroke-width="0.15">+JB1-XPE</text>
<text x="1155.7" y="688.18" font-size="5.75" fill="#1a1a1a" stroke="#1a1a1a" stroke-width="0.15">+Field-GS04</text>
<text x="1284.5" y="688.18" font-size="5.75" fill="#1a1a1a" stroke="#1a1a1a" stroke-width="0.15">RE-2Y(St)Yv 2x2x1,3</text>
<text x="1433" y="688.18" font-size="5.75" fill="#1a1a1a" text-anchor="middle" stroke="#1a1a1a" stroke-width="0.15">4x1,3</text>
<text x="917.4" y="700.26" font-size="5.8" fill="#1a1a1a" stroke="#1a1a1a" stroke-width="0.15"></text>
<text x="1026.7" y="700.26" font-size="5.75" fill="#1a1a1a" stroke="#1a1a1a" stroke-width="0.15">+JB1-X1</text>
<text x="1155.7" y="700.26" font-size="5.75" fill="#1a1a1a" stroke="#1a1a1a" stroke-width="0.15"></text>
<text x="1284.5" y="700.26" font-size="5.75" fill="#1a1a1a" stroke="#1a1a1a" stroke-width="0.15"></text>
<text x="917.4" y="712.34" font-size="5.8" fill="#1a1a1a" stroke="#1a1a1a" stroke-width="0.15">-W5</text>
<text x="1026.7" y="712.34" font-size="5.75" fill="#1a1a1a" stroke="#1a1a1a" stroke-width="0.15">+JB1-XPE</text>
<text x="1155.7" y="712.34" font-size="5.75" fill="#1a1a1a" stroke="#1a1a1a" stroke-width="0.15">+Field-HS01</text>
<text x="1284.5" y="712.34" font-size="5.75" fill="#1a1a1a" stroke="#1a1a1a" stroke-width="0.15">RE-2Y(St)Yv 2x2x1,3</text>
<text x="1433" y="712.34" font-size="5.75" fill="#1a1a1a" text-anchor="middle" stroke="#1a1a1a" stroke-width="0.15">4x1,3</text>
<text x="917.4" y="724.42" font-size="5.8" fill="#1a1a1a" stroke="#1a1a1a" stroke-width="0.15"></text>
<text x="1026.7" y="724.42" font-size="5.75" fill="#1a1a1a" stroke="#1a1a1a" stroke-width="0.15">+JB1-X1</text>
<text x="1155.7" y="724.42" font-size="5.75" fill="#1a1a1a" stroke="#1a1a1a" stroke-width="0.15"></text>
<text x="1284.5" y="724.42" font-size="5.75" fill="#1a1a1a" stroke="#1a1a1a" stroke-width="0.15"></text>
<text x="917.4" y="736.5" font-size="5.8" fill="#1a1a1a" stroke="#1a1a1a" stroke-width="0.15"></text>
<text x="1026.7" y="736.5" font-size="5.75" fill="#1a1a1a" stroke="#1a1a1a" stroke-width="0.15">+JB1-X2</text>
<text x="1155.7" y="736.5" font-size="5.75" fill="#1a1a1a" stroke="#1a1a1a" stroke-width="0.15"></text>
<text x="1284.5" y="736.5" font-size="5.75" fill="#1a1a1a" stroke="#1a1a1a" stroke-width="0.15"></text>
<text x="917.4" y="748.58" font-size="5.8" fill="#1a1a1a" stroke="#1a1a1a" stroke-width="0.15">-W6</text>
<text x="1026.7" y="748.58" font-size="5.75" fill="#1a1a1a" stroke="#1a1a1a" stroke-width="0.15">+JB1-XPE</text>
<text x="1155.7" y="748.58" font-size="5.75" fill="#1a1a1a" stroke="#1a1a1a" stroke-width="0.15">+Field-HS02</text>
<text x="1284.5" y="748.58" font-size="5.75" fill="#1a1a1a" stroke="#1a1a1a" stroke-width="0.15">RE-2Y(St)Yv 2x2x1,3</text>
<text x="1433" y="748.58" font-size="5.75" fill="#1a1a1a" text-anchor="middle" stroke="#1a1a1a" stroke-width="0.15">4x1,3</text>
<text x="917.4" y="760.66" font-size="5.8" fill="#1a1a1a" stroke="#1a1a1a" stroke-width="0.15"></text>
<text x="1026.7" y="760.66" font-size="5.75" fill="#1a1a1a" stroke="#1a1a1a" stroke-width="0.15">+JB1-X1</text>
<text x="1155.7" y="760.66" font-size="5.75" fill="#1a1a1a" stroke="#1a1a1a" stroke-width="0.15"></text>
<text x="1284.5" y="760.66" font-size="5.75" fill="#1a1a1a" stroke="#1a1a1a" stroke-width="0.15"></text>
<text x="917.4" y="772.74" font-size="5.8" fill="#1a1a1a" stroke="#1a1a1a" stroke-width="0.15"></text>
<text x="1026.7" y="772.74" font-size="5.75" fill="#1a1a1a" stroke="#1a1a1a" stroke-width="0.15">+JB1-X2</text>
<text x="1155.7" y="772.74" font-size="5.75" fill="#1a1a1a" stroke="#1a1a1a" stroke-width="0.15"></text>
<text x="1284.5" y="772.74" font-size="5.75" fill="#1a1a1a" stroke="#1a1a1a" stroke-width="0.15"></text>
<text x="917.4" y="784.82" font-size="5.8" fill="#1a1a1a" stroke="#1a1a1a" stroke-width="0.15">-W7</text>
<text x="1026.7" y="784.82" font-size="5.75" fill="#1a1a1a" stroke="#1a1a1a" stroke-width="0.15">+JB1-XPE</text>
<text x="1155.7" y="784.82" font-size="5.75" fill="#1a1a1a" stroke="#1a1a1a" stroke-width="0.15">+Field-S1</text>
<text x="1284.5" y="784.82" font-size="5.75" fill="#1a1a1a" stroke="#1a1a1a" stroke-width="0.15">RE-2Y(St)Yv 4x2x1,3</text>
<text x="1433" y="784.82" font-size="5.75" fill="#1a1a1a" text-anchor="middle" stroke="#1a1a1a" stroke-width="0.15">8x1,3</text>
<text x="917.4" y="796.9" font-size="5.8" fill="#1a1a1a" stroke="#1a1a1a" stroke-width="0.15"></text>
<text x="1026.7" y="796.9" font-size="5.75" fill="#1a1a1a" stroke="#1a1a1a" stroke-width="0.15">+JB1-X2</text>
<text x="1155.7" y="796.9" font-size="5.75" fill="#1a1a1a" stroke="#1a1a1a" stroke-width="0.15"></text>
<text x="1284.5" y="796.9" font-size="5.75" fill="#1a1a1a" stroke="#1a1a1a" stroke-width="0.15"></text>
<text x="917.4" y="808.98" font-size="5.8" fill="#1a1a1a" stroke="#1a1a1a" stroke-width="0.15">-W8</text>
<text x="1026.7" y="808.98" font-size="5.75" fill="#1a1a1a" stroke="#1a1a1a" stroke-width="0.15"></text>
<text x="1155.7" y="808.98" font-size="5.75" fill="#1a1a1a" stroke="#1a1a1a" stroke-width="0.15"></text>
<text x="1284.5" y="808.98" font-size="5.75" fill="#1a1a1a" stroke="#1a1a1a" stroke-width="0.15"></text>
<text x="917.4" y="821.06" font-size="5.8" fill="#1a1a1a" stroke="#1a1a1a" stroke-width="0.15">-W10</text>
<text x="1026.7" y="821.06" font-size="5.75" fill="#1a1a1a" stroke="#1a1a1a" stroke-width="0.15"></text>
<text x="1155.7" y="821.06" font-size="5.75" fill="#1a1a1a" stroke="#1a1a1a" stroke-width="0.15"></text>
<text x="1284.5" y="821.06" font-size="5.75" fill="#1a1a1a" stroke="#1a1a1a" stroke-width="0.15"></text>
<rect x="963" y="794" width="790" height="242" fill="#fff"/>
<line x1="965" y1="802.5" x2="1752.6" y2="802.5" stroke="#3c3c3c" stroke-width="1.4"/>
<line x1="1044.1" y1="794" x2="1044.1" y2="802.5" stroke="#3c3c3c" stroke-width="1.3"/>
<line x1="1123.15" y1="794" x2="1123.15" y2="802.5" stroke="#3c3c3c" stroke-width="1.3"/>
<line x1="1202.2" y1="794" x2="1202.2" y2="802.5" stroke="#3c3c3c" stroke-width="1.3"/>
<line x1="1281.25" y1="794" x2="1281.25" y2="802.5" stroke="#3c3c3c" stroke-width="1.3"/>
<line x1="1360.3" y1="794" x2="1360.3" y2="802.5" stroke="#3c3c3c" stroke-width="1.3"/>
<line x1="1439.35" y1="794" x2="1439.35" y2="802.5" stroke="#3c3c3c" stroke-width="1.3"/>
<line x1="1518.4" y1="794" x2="1518.4" y2="802.5" stroke="#3c3c3c" stroke-width="1.3"/>
<line x1="1597.45" y1="794" x2="1597.45" y2="802.5" stroke="#3c3c3c" stroke-width="1.3"/>
<line x1="1676.5" y1="794" x2="1676.5" y2="802.5" stroke="#3c3c3c" stroke-width="1.3"/>
<line x1="980.3" y1="802.5" x2="980.3" y2="1035" stroke="#3c3c3c" stroke-width="1.2"/>
<line x1="965" y1="885.7" x2="980.3" y2="885.7" stroke="#3c3c3c" stroke-width="1"/>
<text x="971" y="883" font-size="3.6" fill="#333" transform="rotate(-90 971 883)" stroke="#333" stroke-width="0.12">Copyright acc. to</text>
<text x="977" y="883" font-size="3.6" fill="#333" transform="rotate(-90 977 883)" stroke="#333" stroke-width="0.12">DIN ISO 16016</text>
<text x="971" y="1033" font-size="3.6" fill="#333" transform="rotate(-90 971 1033)" stroke="#333" stroke-width="0.12">ited.</text>
<text x="987.8" y="832.5" font-size="13.65" fill="#000" stroke="#000" stroke-width="0.12">Cable diagram</text>
<text x="1736" y="818" font-size="5.9" fill="#222" text-anchor="end" stroke="#222" stroke-width="0.12">LAG-Basic-F09</text>
<line x1="987.8" y1="840.8" x2="1732.5" y2="840.8" stroke="#3c3c3c" stroke-width="1.3"/>
<line x1="987.8" y1="870.3" x2="1732.5" y2="870.3" stroke="#3c3c3c" stroke-width="1.3"/>
<line x1="987.8" y1="893" x2="1732.5" y2="893" stroke="#3c3c3c" stroke-width="1.3"/>
<line x1="987.8" y1="840.8" x2="987.8" y2="1035" stroke="#3c3c3c" stroke-width="1.3"/>
<line x1="1732.5" y1="840.8" x2="1732.5" y2="1035" stroke="#3c3c3c" stroke-width="1.3"/>
<line x1="1145.6" y1="840.8" x2="1145.6" y2="1035" stroke="#3c3c3c" stroke-width="1.3"/>
<line x1="1299.5" y1="840.8" x2="1299.5" y2="1035" stroke="#3c3c3c" stroke-width="1.3"/>
<line x1="1559.6" y1="840.8" x2="1559.6" y2="1035" stroke="#3c3c3c" stroke-width="1.3"/>
<line x1="1373.4" y1="840.8" x2="1373.4" y2="1035" stroke="#3c3c3c" stroke-width="1.3"/>
<line x1="1461.4" y1="840.8" x2="1461.4" y2="870.3" stroke="#3c3c3c" stroke-width="1.3"/>
<line x1="1339" y1="870.3" x2="1339" y2="1035" stroke="#3c3c3c" stroke-width="1.3"/>
<line x1="1519.8" y1="870.3" x2="1519.8" y2="1035" stroke="#3c3c3c" stroke-width="1.3"/>
<line x1="987.8" y1="908.4" x2="1732.5" y2="908.4" stroke="#3c3c3c" stroke-width="1.3"/>
<line x1="987.8" y1="923.39" x2="1732.5" y2="923.39" stroke="#3c3c3c" stroke-width="1.3"/>
<line x1="987.8" y1="938.38" x2="1732.5" y2="938.38" stroke="#3c3c3c" stroke-width="1.3"/>
<line x1="987.8" y1="953.37" x2="1732.5" y2="953.37" stroke="#3c3c3c" stroke-width="1.3"/>
<line x1="987.8" y1="968.36" x2="1732.5" y2="968.36" stroke="#3c3c3c" stroke-width="1.3"/>
<line x1="987.8" y1="983.35" x2="1732.5" y2="983.35" stroke="#3c3c3c" stroke-width="1.3"/>
<line x1="987.8" y1="998.34" x2="1732.5" y2="998.34" stroke="#3c3c3c" stroke-width="1.3"/>
<line x1="987.8" y1="1013.33" x2="1732.5" y2="1013.33" stroke="#3c3c3c" stroke-width="1.3"/>
<line x1="987.8" y1="1028.32" x2="1732.5" y2="1028.32" stroke="#3c3c3c" stroke-width="1.3"/>
<text x="991.5" y="852" font-size="5.5" fill="#1a1a1a" stroke="#1a1a1a" stroke-width="0.15">Cable name</text>
<text x="991.5" y="863.5" font-size="6.6" fill="#1a1a1a" font-weight="bold" stroke="#1a1a1a" stroke-width="0.15">=1481DE01-W1</text>
<text x="1149" y="852" font-size="5.5" fill="#1a1a1a" stroke="#1a1a1a" stroke-width="0.15">Cable type</text>
<text x="1149" y="863.5" font-size="6.6" fill="#1a1a1a" font-weight="bold" stroke="#1a1a1a" stroke-width="0.15">RE-2Y(St)Yv 2x2x1,3</text>
<text x="1303" y="852" font-size="5.5" fill="#1a1a1a" stroke="#1a1a1a" stroke-width="0.15">No. of conductors</text>
<text x="1303" y="863.5" font-size="6.6" fill="#1a1a1a" font-weight="bold" stroke="#1a1a1a" stroke-width="0.15">4</text>
<text x="1376.8" y="852" font-size="5.5" fill="#1a1a1a" stroke="#1a1a1a" stroke-width="0.15">Cross-section</text>
<text x="1376.8" y="863.5" font-size="6.6" fill="#1a1a1a" font-weight="bold" stroke="#1a1a1a" stroke-width="0.15">1,3 mm²</text>
<text x="1465" y="852" font-size="5.5" fill="#1a1a1a" stroke="#1a1a1a" stroke-width="0.15">Cable length</text>
<text x="1465" y="863.5" font-size="6.6" fill="#1a1a1a" font-weight="bold" stroke="#1a1a1a" stroke-width="0.15">3 m</text>
<text x="1563" y="852" font-size="5.5" fill="#1a1a1a" stroke="#1a1a1a" stroke-width="0.15">Function text (Cable)</text>
<text x="1563" y="863.5" font-size="6.6" fill="#1a1a1a" font-weight="bold" stroke="#1a1a1a" stroke-width="0.15">1481DE01-C_On</text>
<text x="1563" y="871" font-size="6.6" fill="#1a1a1a" font-weight="bold" stroke="#1a1a1a" stroke-width="0.15">Dedust. filter controller</text>
<text x="991.5" y="884.5" font-size="5.5" fill="#1a1a1a" stroke="#1a1a1a" stroke-width="0.15">Page / path</text>
<text x="1149" y="884.5" font-size="5.5" fill="#1a1a1a" stroke="#1a1a1a" stroke-width="0.15">Target designation from</text>
<text x="1303" y="880.5" font-size="5.5" fill="#1a1a1a" stroke="#1a1a1a" stroke-width="0.15">Connection</text>
<text x="1303" y="887.5" font-size="5.5" fill="#1a1a1a" stroke="#1a1a1a" stroke-width="0.15">point</text>
<text x="1342" y="884.5" font-size="5.5" fill="#1a1a1a" stroke="#1a1a1a" stroke-width="0.15">Conductor</text>
<text x="1376.8" y="884.5" font-size="5.5" fill="#1a1a1a" stroke="#1a1a1a" stroke-width="0.15">Target designation to</text>
<text x="1523" y="880.5" font-size="5.5" fill="#1a1a1a" stroke="#1a1a1a" stroke-width="0.15">Connection</text>
<text x="1523" y="887.5" font-size="5.5" fill="#1a1a1a" stroke="#1a1a1a" stroke-width="0.15">point</text>
<text x="1563" y="884.5" font-size="5.5" fill="#1a1a1a" stroke="#1a1a1a" stroke-width="0.15">Remark (Conductor)</text>
<text x="991.5" y="902.5" font-size="5.55" fill="#1a1a1a" stroke="#1a1a1a" stroke-width="0.15">&amp;EFP=1481DE01+SMNCI_RMA_CC02/1</text>
<text x="1149" y="902.5" font-size="5.55" fill="#1a1a1a" stroke="#1a1a1a" stroke-width="0.15">+SMNCI_RMA_CC02-X01</text>
<text x="1303" y="902.5" font-size="5.55" fill="#1a1a1a" stroke="#1a1a1a" stroke-width="0.15">1</text>
<text x="1342" y="902.5" font-size="5.55" fill="#1a1a1a" stroke="#1a1a1a" stroke-width="0.15">1</text>
<text x="1376.8" y="902.5" font-size="5.55" fill="#1a1a1a" stroke="#1a1a1a" stroke-width="0.15">+Field-A01</text>
<text x="1523" y="902.5" font-size="5.55" fill="#1a1a1a" stroke="#1a1a1a" stroke-width="0.15">?</text>
<text x="991.5" y="917.5" font-size="5.55" fill="#1a1a1a" stroke="#1a1a1a" stroke-width="0.15">&amp;EFP=1481DE01+SMNCI_RMA_CC02/1</text>
<text x="1149" y="917.5" font-size="5.55" fill="#1a1a1a" stroke="#1a1a1a" stroke-width="0.15">+SMNCI_RMA_CC02-X01</text>
<text x="1303" y="917.5" font-size="5.55" fill="#1a1a1a" stroke="#1a1a1a" stroke-width="0.15">2</text>
<text x="1342" y="917.5" font-size="5.55" fill="#1a1a1a" stroke="#1a1a1a" stroke-width="0.15">2</text>
<text x="1376.8" y="917.5" font-size="5.55" fill="#1a1a1a" stroke="#1a1a1a" stroke-width="0.15">+Field-A01</text>
<text x="1523" y="917.5" font-size="5.55" fill="#1a1a1a" stroke="#1a1a1a" stroke-width="0.15">?</text>
<text x="991.5" y="932.5" font-size="5.55" fill="#1a1a1a" stroke="#1a1a1a" stroke-width="0.15">&amp;EFP=1481DE01+SMNCI_RMA_CC02/1</text>
<text x="1149" y="932.5" font-size="5.55" fill="#1a1a1a" stroke="#1a1a1a" stroke-width="0.15">+SMNCI_RMA_CC02-X01</text>
<text x="1303" y="932.5" font-size="5.55" fill="#1a1a1a" stroke="#1a1a1a" stroke-width="0.15">3</text>
<text x="1342" y="932.5" font-size="5.55" fill="#1a1a1a" stroke="#1a1a1a" stroke-width="0.15">3</text>
<text x="1376.8" y="932.5" font-size="5.55" fill="#1a1a1a" stroke="#1a1a1a" stroke-width="0.15">+Field-A01</text>
<text x="1523" y="932.5" font-size="5.55" fill="#1a1a1a" stroke="#1a1a1a" stroke-width="0.15">?</text>
<text x="991.5" y="947.5" font-size="5.55" fill="#1a1a1a" stroke="#1a1a1a" stroke-width="0.15">&amp;EFP=1481DE01+SMNCI_RMA_CC02/1</text>
<text x="1149" y="947.5" font-size="5.55" fill="#1a1a1a" stroke="#1a1a1a" stroke-width="0.15">+SMNCI_RMA_CC02-X01</text>
<text x="1303" y="947.5" font-size="5.55" fill="#1a1a1a" stroke="#1a1a1a" stroke-width="0.15">4</text>
<text x="1342" y="947.5" font-size="5.55" fill="#1a1a1a" stroke="#1a1a1a" stroke-width="0.15">4</text>
<text x="1376.8" y="947.5" font-size="5.55" fill="#1a1a1a" stroke="#1a1a1a" stroke-width="0.15">+Field-A01</text>
<text x="1523" y="947.5" font-size="5.55" fill="#1a1a1a" stroke="#1a1a1a" stroke-width="0.15">?</text>
<text x="991.5" y="962.5" font-size="5.55" fill="#1a1a1a" stroke="#1a1a1a" stroke-width="0.15">&amp;EFP=1481DE01+SMNCI_RMA_CC02/1</text>
<text x="1149" y="962.5" font-size="5.55" fill="#1a1a1a" stroke="#1a1a1a" stroke-width="0.15">+SMNCI_RMA_CC02-X01</text>
<text x="1303" y="962.5" font-size="5.55" fill="#1a1a1a" stroke="#1a1a1a" stroke-width="0.15">PE</text>
<text x="1342" y="962.5" font-size="5.55" fill="#1a1a1a" stroke="#1a1a1a" stroke-width="0.15">GNYE</text>
<text x="1376.8" y="962.5" font-size="5.55" fill="#1a1a1a" stroke="#1a1a1a" stroke-width="0.15">+Field-A01</text>
<text x="1523" y="962.5" font-size="5.55" fill="#1a1a1a" stroke="#1a1a1a" stroke-width="0.15">PE</text>
<line x1="963.5" y1="794.2" x2="963.5" y2="1035" stroke="#222" stroke-width="2.2"/>
<rect x="963" y="794.2" width="789.6" height="240.8" stroke="#4a6d9c" stroke-width="1.2" fill="none"/>
<line x1="1357" y1="773.5" x2="1357" y2="790.7" stroke="#4a6d9c" stroke-width="1.1"/>
<circle cx="1357" cy="769" r="4.3" stroke="#4a8a2a" stroke-width="1" fill="#7ed040"/>
<circle cx="963" cy="794.2" r="4.6" stroke="#4a6d9c" stroke-width="1.1" fill="#dbe8f4"/>
<circle cx="1752.6" cy="794.2" r="4.6" stroke="#4a6d9c" stroke-width="1.1" fill="#dbe8f4"/>
<circle cx="963" cy="1035" r="4.6" stroke="#4a6d9c" stroke-width="1.1" fill="#dbe8f4"/>
<circle cx="1752.6" cy="1035" r="4.6" stroke="#4a6d9c" stroke-width="1.1" fill="#dbe8f4"/>
<rect x="1353.4" y="790.6" width="7.2" height="7.2" stroke="#4a6d9c" stroke-width="1.1" fill="#dbe8f4"/>
<rect x="1353.4" y="1031.4" width="7.2" height="7.2" stroke="#4a6d9c" stroke-width="1.1" fill="#dbe8f4"/>
<rect x="959.4" y="910.4" width="7.2" height="7.2" stroke="#4a6d9c" stroke-width="1.1" fill="#dbe8f4"/>
<rect x="1749" y="910.4" width="7.2" height="7.2" stroke="#4a6d9c" stroke-width="1.1" fill="#dbe8f4"/>
</svg></body></html>
